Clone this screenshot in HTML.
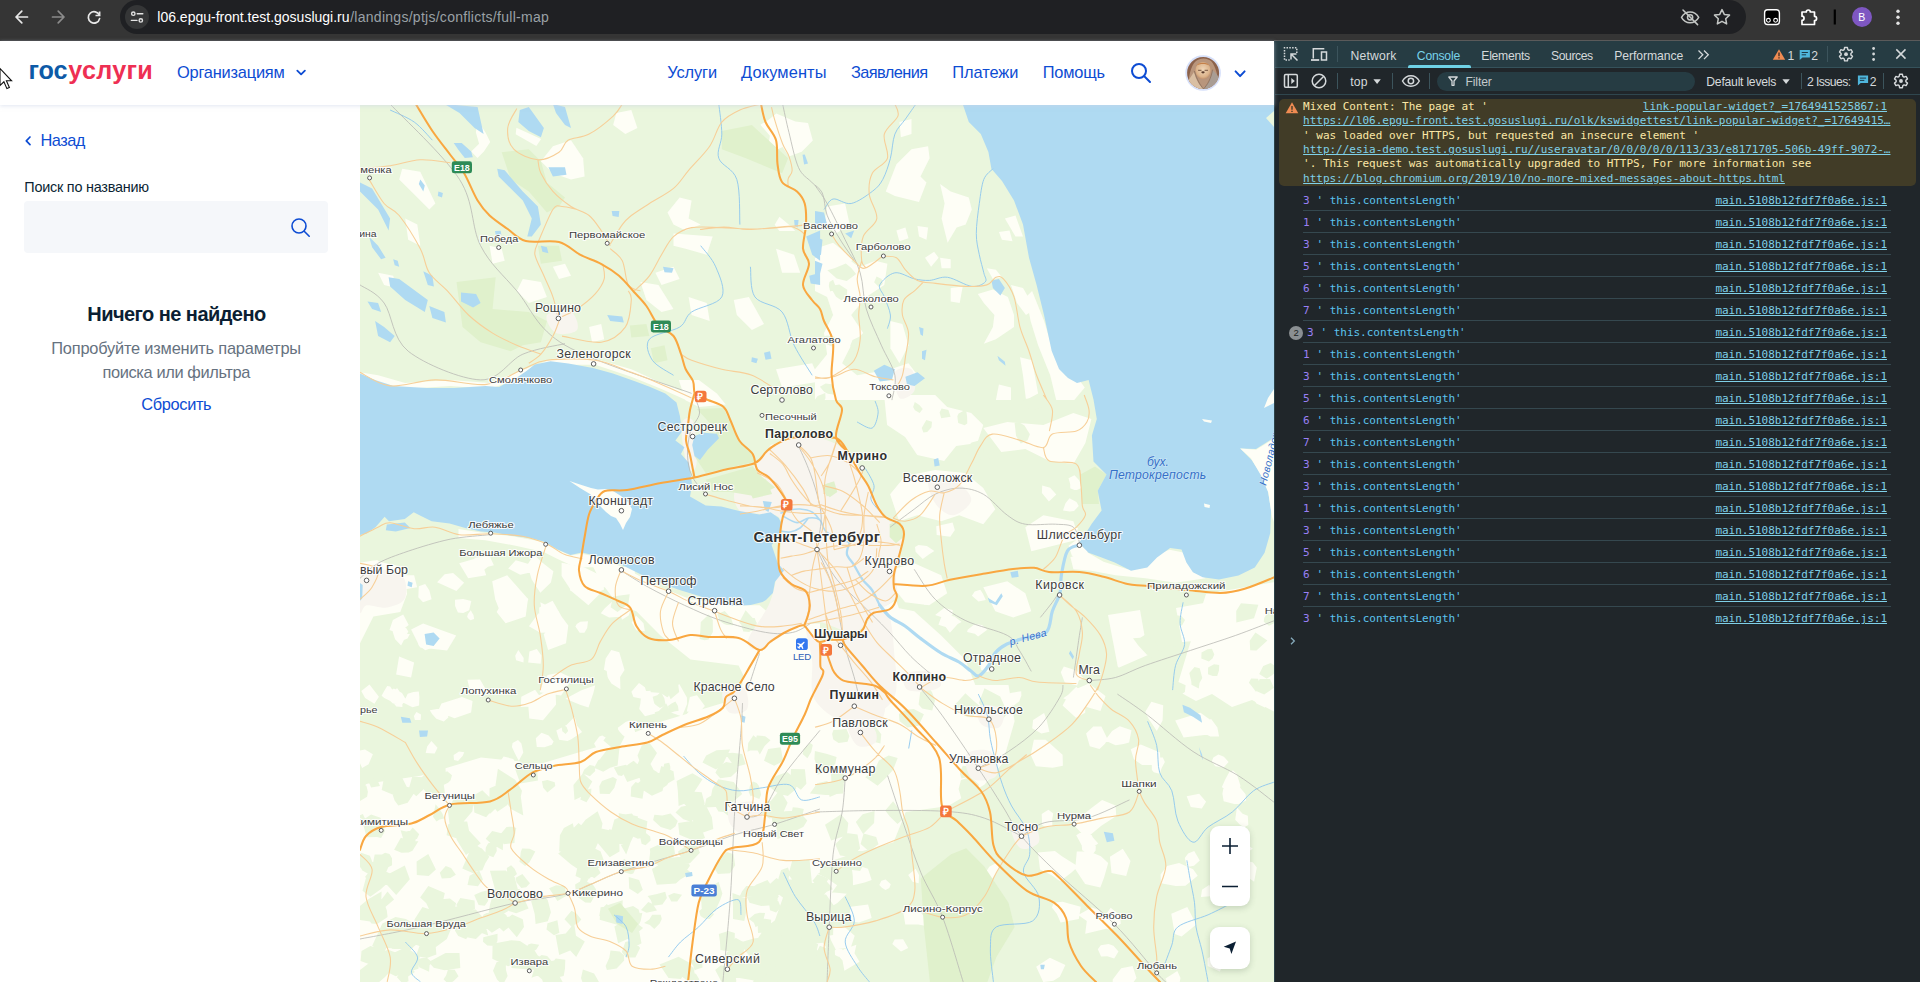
<!DOCTYPE html>
<html lang="ru"><head><meta charset="utf-8"><title>Госуслуги</title>
<style>
html,body{margin:0;padding:0;background:#fff;overflow:hidden}
body{width:1920px;height:982px;position:relative;font-family:"Liberation Sans",sans-serif}
.b{position:absolute;display:block}
.t{position:absolute;white-space:pre;display:block}
svg text{font-family:"Liberation Sans",sans-serif}
</style></head><body>
<svg id="map" class="b" style="left:360px;top:105px" width="914" height="877" viewBox="360 105 914 877">
<rect x="360" y="105" width="914" height="877" fill="#eaf6dd"/>
<path d="M402.2 168.8 420.3 171.8 435.4 203.5 429.3 209.5 411.3 191.4 399.2 179.4z" fill="#fefef6"/>
<path d="M552.9 146.2 571 140.2 583.1 158.3 584.6 176.4 571 179.4 552.9 173.3 540.9 161.3z" fill="#fefef6"/>
<path d="M616.3 113 631.3 110 637.4 128.1 625.3 134.1 613.2 125.1z" fill="#fefef6"/>
<path d="M667.5 212.5 679.6 197.5 691.6 200.5 688.6 218.6 700.7 224.6 685.6 230.6 673.5 224.6z" fill="#fefef6"/>
<path d="M673.5 233.6 712.7 236.6 706.7 254.7 685.6 248.7 673.5 245.7z" fill="#fefef6"/>
<path d="M655.4 272.8 673.5 266.8 679.6 278.9 661.5 284.9z" fill="#fefef6"/>
<path d="M776 248.7 794.1 254.7 800.2 272.8 782.1 272.8z" fill="#fefef6"/>
<path d="M733.8 300 748.9 296.9 764 324.1 751.9 330.1 736.8 315z" fill="#fefef6"/>
<path d="M776 369.3 812.2 363.3 820.1 381.4 782.1 387.4z" fill="#fefef6"/>
<path d="M522.8 278.9 540.9 281.9 546.9 296.9 528.8 303 516.8 290.9z" fill="#fefef6"/>
<path d="M552.9 266.8 565 263.8 571 275.8 559 278.9z" fill="#fefef6"/>
<path d="M489.6 245.7 501.7 248.7 504.7 260.8 492.6 263.8z" fill="#fefef6"/>
<path d="M589.1 327.1 601.2 324.1 604.2 339.2 592.1 342.2z" fill="#fefef6"/>
<path d="M360 372.3 378.1 375.3 405.2 382.9 450.4 379.9 489.6 382.9 528.8 367.8 552.9 358.7 595.2 358.7 631.3 369.3 661.5 382.9 691.6 394.9 691.6 402.5 661.5 388.9 631.3 376.8 595.2 364.8 552.9 364.8 528.8 375.3 489.6 388.9 450.4 385.9 405.2 388.9 360 378.3z" fill="#fefef6"/>
<path d="M378.1 272.8 393.2 275.8 396.2 287.9 384.1 284.9z" fill="#fefef6"/>
<path d="M405.2 218.6 417.3 224.6 420.3 245.7 408.2 239.7z" fill="#fefef6"/>
<path d="M640.4 281.9 658.5 284.9 673.5 309 661.5 312 646.4 300z" fill="#fefef6"/>
<path d="M688.6 296.9 706.7 303 709.7 321.1 691.6 315z" fill="#fefef6"/>
<path d="M885.8 191.4 896.4 164.3 911.5 149.2 928.1 146.2 929.6 158.3 920.5 176.4 926.5 182.4 919 202 894.9 196z" fill="#fefef6"/>
<path d="M940.1 183.9 950.7 191.4 968.8 197.5 971.8 209.5 965.7 224.6 956.7 227.6 947.6 242.7 941.6 218.6 944.6 203.5z" fill="#fefef6"/>
<path d="M896.4 230.6 905.4 227.6 908.5 238.2 899.4 241.2z" fill="#fefef6"/>
<path d="M917.5 226.1 928.1 227.6 926.5 239.7 919 236.6z" fill="#fefef6"/>
<path d="M925 257.8 934.1 251.7 938.6 257.8 931.1 266.8z" fill="#fefef6"/>
<path d="M940.1 257.8 950.7 259.3 950.7 268.3 941.6 268.3z" fill="#fefef6"/>
<path d="M998.9 232.1 1009.5 230.6 1012.5 241.2 1001.9 239.7z" fill="#fefef6"/>
<path d="M1004.9 218.6 1015.5 215.5 1023 236.6 1015.5 236.6z" fill="#fefef6"/>
<path d="M827.1 206.5 845.1 203.5 849.7 224.6 836.1 233.6 824 224.6z" fill="#fefef6"/>
<path d="M815 248.7 833.1 242.7 848.2 254.7 860.2 266.8 875.3 260.8 887.4 263.8 884.3 284.9 866.3 296.9 851.2 315 863.2 333.1 851.2 345.2 842.1 363.3 857.2 375.3 890.4 369.3 908.5 363.3 917.5 375.3 905.4 400.1 815 400.1 815 369.3 827.1 354.2 824 333.1 833.1 315 827.1 296.9 815 290.9z" fill="#fefef6"/>
<path d="M950.7 287.9 962.7 286.4 959.7 303 950.7 301.5z" fill="#fefef6"/>
<path d="M977.8 293.9 992.9 289.4 1007.9 296.9 1014 315 1014 327.1 995.9 339.2 983.8 343.7 992.9 327.1 994.4 315 983.8 303z" fill="#fefef6"/>
<path d="M1011 284.9 1023 287.9 1035.1 309 1026 315 1017 303z" fill="#fefef6"/>
<path d="M1026 296.9 1032.1 290.9 1044.1 321.1 1053.2 351.2 1065.2 375.3 1080.3 381.4 1084.8 387.4 1074.3 400.1 1056.2 400.1 1050.2 375.3 1038.1 345.2 1030.6 321.1z" fill="#fefef6"/>
<path d="M890.4 321.1 902.4 324.1 908.5 345.2 899.4 363.3 890.4 348.2z" fill="#fefef6"/>
<path d="M1020 357.2 1032.1 360.3 1038.1 393.4 1026 400.1 1023 375.3z" fill="#fefef6"/>
<path d="M899.4 122.1 911.5 119.1 911.5 134.1 900.9 137.2z" fill="#fefef6"/>
<path d="M986.8 268.3 995.9 269.8 1001.9 277.3 992.9 278.9z" fill="#fefef6"/>
<path d="M998.9 384.4 1011 387.4 1011 400.1 995.9 400.1z" fill="#fefef6"/>
<path d="M458.5 529.1 480.9 532.5 512.3 536.3 543.7 542.1 557.1 549.7 570.5 555.5 581.7 553.8 606.4 558.7 606.4 567.2 584 567.2 570.5 564.9 557.1 558.7 543.7 552 516.8 545.9 485.4 540.3 458.5 538.1z" fill="#fefef6"/>
<path d="M360 562.7 373.4 560.5 404.8 567.2 407 594.1 400.3 612 373.4 616.5 360 643.3z" fill="#fefef6"/>
<path d="M561.6 562.7 584 567.2 601.9 576.1 604.1 589.6 584 598.5 570.5 589.6 561.6 576.1z" fill="#fefef6"/>
<path d="M494.4 585.1 505.6 577.3 516.8 596.3 528 598.5 525.7 616.5 505.6 623.2 496.6 612 503.3 600.8z" fill="#fefef6"/>
<path d="M539.2 607.5 552.6 600.8 561.6 616.5 568.3 625.4 566 643.3 548.1 650.1 543.7 634.4 550.4 625.4 539.2 620.9z" fill="#fefef6"/>
<path d="M492.2 581.3 507.2 575.3 528.3 599.3 519.3 617.4 501.2 614.4 495.2 599.3z" fill="#fefef6"/>
<path d="M564.3 563.3 588.4 575.3 600.4 593.3 588.4 605.3 570.3 590.3z" fill="#fefef6"/>
<path d="M540.3 602.3 558.3 611.3 564.3 632.4 546.3 635.4z" fill="#fefef6"/>
<path d="M411.1 629.4 423.1 623.4 456.2 635.4 447.1 650.4 420.1 647.4z" fill="#fefef6"/>
<path d="M399.1 656.4 414.1 662.4 411.1 677.5 396.1 674.4z" fill="#fefef6"/>
<path d="M594.4 557.3 612.4 563.3 621.4 587.3 600.4 587.3z" fill="#fefef6"/>
<path d="M459.2 563.3 480.2 557.3 486.2 575.3 468.2 578.3z" fill="#fefef6"/>
<path d="M396.1 575.3 414.1 575.3 417.1 587.3 399.1 590.3z" fill="#fefef6"/>
<path d="M360 575.3 378 572.3 381 605.3 360 617.4z" fill="#fefef6"/>
<path d="M588.4 557.3 621.4 566.3 660.5 587.3 690.5 599.3 735.6 605.3 759.6 605.3 780.7 623.4 820 623.4 820 690.1 750.6 690.1 738.6 665.4 690.5 659.4 660.5 635.4 636.4 611.3 618.4 605.3 600.4 581.3z" fill="#fefef6"/>
<path d="M884.1 395 935.2 395 947.2 407 971.2 413 983.3 425 977.3 443.1 956.2 446.1 944.2 461.1 917.2 455.1 905.1 437.1 887.1 425z" fill="#fefef6"/>
<path d="M890.1 494.2 905.1 476.1 935.2 470.1 965.2 473.1 983.3 488.1 995.3 509.2 983.3 524.2 959.2 515.2 941.2 521.2 917.2 515.2 899.1 521.2z" fill="#fefef6"/>
<path d="M983.3 428.1 1007.3 422 1043.4 425 1073.4 413 1091.4 419 1085.4 443.1 1073.4 464.1 1049.4 461.1 1025.3 449.1 1001.3 452.1z" fill="#fefef6"/>
<path d="M893.1 569.3 914.2 563.3 941.2 575.3 947.2 593.3 929.2 605.3 905.1 602.3 893.1 587.3z" fill="#fefef6"/>
<path d="M1206 594 1275 582 1275 712 1252 700 1232 707 1212 694 1196 701 1176 690 1188 650z" fill="#fefef6"/>
<path d="M1108 615 1140 610 1148 655 1118 668z" fill="#fefef6"/>
<path d="M1176 608 1204 603 1206 640 1182 642z" fill="#fefef6"/>
<path d="M1085.4 551.2 1103.5 561.8 1127.5 569.3 1145.5 566.3 1154.5 555.8 1169.6 549.7 1184.6 552.8 1190.6 567.8 1205.6 578.3 1175.6 582.8 1145.5 578.3 1115.5 575.3 1091.4 570.8 1073.4 569.3 1070.4 557.3z" fill="#fefef6"/>
<path d="M1025.3 527.2 1043.4 515.2 1073.4 521.2 1079.4 539.2 1055.4 545.2 1031.3 551.2z" fill="#fefef6"/>
<path d="M983.3 587.3 1007.3 581.3 1025.3 593.3 1031.3 611.3 1013.3 617.4 995.3 611.3z" fill="#fefef6"/>
<path d="M884.1 605.3 914.2 611.3 941.2 635.4 965.2 659.4 977.3 690.1 905.1 690.1 875.1 653.4 869.1 623.4z" fill="#fefef6"/>
<path d="M360 784.8 420.5 775.7 481 757.6 541.4 763.6 601.9 745.5 662.4 721.3 722.9 703.1 819.9 685 819.9 872.5 783.3 896.7 753.1 981.9 360 981.9z" fill="#fefef6"/>
<path d="M815 685 1008.5 685 1014.6 721.3 1002.5 763.6 984.3 784.8 948.1 806 905.7 812 893.6 842.2 851.3 854.3 815 866.4z" fill="#fefef6"/>
<path d="M678.8 380 698.9 380 716.9 393.4 725.8 404.6 698.9 406.9 685.5 400.2z" fill="#fefef6"/>
<path d="M770.6 445 793.1 438.3 806.5 453.9 784.1 460.7 759.4 462.9z" fill="#fefef6"/>
<path d="M477.5 119.9 485.5 132.6 490.2 142.1 483.9 151.6 477.5 158 471.2 151.6 479.1 143.7 475.9 132.6z" fill="#fefef6"/>
<path d="M516.4 127.8 541.1 138.9 536.3 146.1 515.7 134.2z" fill="#fefef6"/>
<path d="M757 648 783 634 806 626 820 642 842 640 863 630 874 613 896 600 910 640 905 700 740 700 745 665z" fill="#fefef6"/>
<path d="M768.3 119.9 776.3 113.5 795.3 121.5 808 123.1 812.8 140.5 801.7 151.7 789 156.4 782.6 146.9 766.7 154.8 769.9 135.8 760.4 124.7z" fill="#fefef6"/>
<path d="M774.7 224.7 779.4 216.8 789 224.7 795.3 231.1 779.4 231.1z" fill="#fefef6"/>
<path d="M444.7 574.3 453.1 572.9 464.1 582.8 456.4 590.9 437.1 582.2zM529.4 564.2 534.5 571.6 520.2 574.7 508.2 568.6 515.8 560.3zM380.7 573.8 377.7 578.5 374.2 573.3 372.4 566.7 373.6 560.8 377.2 559.9 381.2 563.5 382.9 571.7zM627.4 565.5 630.7 564 634.9 569.9 634.7 575.8 629.4 580.6 622.1 577.6 622.4 568.1zM616.4 609.1 620.2 604.8 622.7 601.6 631.1 606.1 629.8 612.4 628.7 615.6 622 619.7 620.3 613.8zM418.3 597.2 418.8 586.2 425.2 583.9 429.4 590.6 431.6 599.3 423 602.3zM470.4 620.2 468.5 618.7 467.1 616.8 468 614 470.8 610.2 471.8 612.2 473.5 615 474.1 619zM644.9 631.3 636.3 630.2 631.7 622.6 636 615.6 643.5 623.3zM531.7 579.5 527.3 565.1 534 554.6 541.5 562.1 553.4 571.2 550.9 582.6 540.3 592.7zM575.4 626.5 576.8 624 580.3 621.7 588 621.2 587.2 628 584.4 632.7 579.7 632.7zM619.3 652.2 624.5 670.1 620.1 676.9 620.4 689.2 611.4 683.5 603.7 671 605.7 658.6 611.3 649.9zM409.9 634.1 407.5 638.4 402.6 640.4 399.3 636.7 402.4 633.7zM604.6 608.5 614.1 599.8 622.3 600 622 605.8 621.1 611.6 620.3 616.8 609.1 617.4 600.8 613.3zM380 589 375.8 592.3 370.7 589.2 372.8 582.6 379.5 580.4zM547.6 675 560.3 672.4 571.2 677.4 568.5 684.6 561.1 695.4 539.7 692.3 542.3 684.5zM398 633.2 389.5 630.1 392.9 620 403.2 614.4 408.7 625.1zM493.9 565.2 488 566.7 482.6 570.9 478.3 564.6 474.1 557.8 483.4 556.9 489.1 555.1zM523.7 657.9 523.5 662.4 516.1 660.2 515.2 655.7 518.3 650zM479.4 694.3 470.4 692.3 467.4 679.8 480 679.5 485.6 689zM360 592 364.7 589.9 371.1 592.8 368.8 596.6 366.2 598.8 359.9 597zM402.6 704.1 392.9 703.5 383.9 695 393.9 688.6 402 693 405.9 699.5zM463.1 599.1 471.3 601 469.2 610.3 463.2 613.1 457.9 612.5 455.1 606.1 455 599.7zM425.3 650.2 418.6 645.3 417.1 637.4 423 630.7 435 636.5 434.2 647.1zM401.1 645.5 395.1 639.2 392.3 630.6 400.3 618.8 408.3 631.5zM541.4 655.4 540.7 663.8 528.2 662.6 529.4 651.6 536.8 649.1zM550.5 632.6 540.3 632.8 528.9 626.2 538.5 613.3 547.2 618.6zM948.5 615.2 954.6 616.6 961.6 621.9 957.7 624.1 949.9 632.7 945.7 626.9 938.4 624.7 941.3 617zM917.6 586.4 928.5 573.7 933.6 585 933.9 599.9 924.8 605 917.1 596.2zM934.4 551.1 929.2 554.3 922.7 559.1 915.6 551.7 915 547 918.5 545.1 926.9 545.9zM1076.3 538.2 1070.5 539.4 1066.9 534 1069.8 530.6 1072.7 527.1 1078.1 527.9 1077 531.8zM1076.5 501.9 1078.7 506 1074 511.1 1069.7 511.4 1063 510.4 1065.5 503.3 1069.5 498.3zM978.5 601.4 971.9 595.8 974.7 591.4 980.3 589.7 982.8 593.5 985.8 599.9zM926.5 579.5 931.7 585.4 925.1 591.5 920.1 594.2 914 583.3 920.6 580.8zM1077.1 685.4 1064.8 682.5 1060.8 672.3 1063.8 666.4 1070.1 668.4 1076.7 670.8 1083.5 678.6 1079 680.2zM952.4 615.6 944 618.1 935.1 615.1 944.1 608.1 952.7 610zM1000.8 601.1 996.8 599.2 991.3 596.8 994 593.8 994.2 589.9 998.4 591.1 1002.9 593.6 1001.3 596.8zM1090.5 545.4 1084.5 558.4 1071.9 555.8 1068.6 545.8 1077.9 538.8 1083.3 535.6zM978.1 636.6 974.8 633.7 967.1 632 967.7 629.7 973.8 624.8 978.9 624.5 982.4 625.2 987.3 629.7zM929.1 679.7 929.4 687 924.2 688.9 918.2 685.7 917.6 680.2 919.5 675.9 924.1 676.1zM1041.9 492.9 1042.2 485.5 1050.2 487.7 1056.3 494.6 1048.9 501.5zM1082.3 487.5 1077 490 1074.4 490 1070.2 488.3 1070.2 484.1 1068.5 478.2 1074.5 475.3 1079.1 480.2zM968 516.1 966.2 508.6 975 506.6 981.1 518.2 973.7 519.1zM981.1 669.7 979.5 661.8 986.1 661.8 994.4 669.2 987.4 672.1zM936.2 526.2 952.6 522.4 954.8 530 950.3 536.8 936.7 535zM707.3 719.4 697.4 728.5 692.9 729.4 681.6 730.7 681.7 720 692.8 706.9 700.8 710.2 706.3 712.6zM381.6 695.7 383.9 691.6 387.2 685.9 390.2 686.4 393.2 691.3 392.5 695.1 390.3 701.1 384.3 698zM434.7 753.6 425.7 752.9 427.2 746.6 431.4 741 437.5 747.8zM696.9 753.4 689.2 754.8 690.1 750.2 689.3 743.1 693.9 745.5 698.5 747 699.3 751.6zM646.6 703.6 648.9 692 660.7 692.9 670.2 699.3 658.8 710.9 647.8 714.4zM606.8 738.3 608 744.8 605 750 601.3 748.5 596.4 747.9 594.1 743.4 599.3 736.6 602.3 735.5zM402.1 695 402.4 707.1 396.3 706.4 389.3 697.9 397 688zM378.9 696.7 374.4 703.8 365.1 698 361.3 691 369.5 684.4zM456.8 753.1 458.9 751.5 464.3 752.2 462.6 756.1 460.7 758.1 458.1 760.9 454 760.1 453.6 755zM669.6 694.2 673.3 689.5 679.3 683.9 686.9 697.5 687.1 704.1 682 716.5 670.9 712.5 665.2 701.5zM429.8 710.3 437 708.9 442.8 707.7 447 710.6 448.4 717.6 443.8 721.6 436.3 718.8 432.1 714.1zM419.1 705.5 412.5 707.3 403.5 702.7 407.7 693.7 413.5 692 418.8 691.5 419.4 697.1zM639 683.1 644.9 687.3 646.2 691.5 644 699.2 633.4 696.9 631.4 691.7zM629 720.8 637.3 721.1 634.4 729.3 635.4 733.1 627 737.6 618.9 733.4 617.8 727.7 625.6 721.9zM543.7 692.6 555.3 687.3 556.1 704.5 543 720.2 529.3 718.4 528 702zM518 740.1 521.4 743.5 523.3 752.4 518.8 760.8 515.7 755 511.9 747 512.6 743.1zM672.9 752.7 667 755.5 659.2 751.4 668 746.5 675.9 745.4zM520.8 706.9 521.3 696.7 535.1 689.8 540.3 697 541.5 705.7 530.3 706.4zM555.9 694.8 550.2 702 541.7 705.3 542.5 694.5 547 690.1zM650.5 690.8 652.8 705.4 655.2 713.4 645 716.3 639.2 709.1 640.3 703.8 641.6 691.5zM676.3 746.8 684.2 742.3 686.2 750.2 684.4 757.4 677.6 752.6zM556.3 730.4 566.5 725 574.7 716.7 576.9 725.5 582.1 732.1 571.3 739.2 567.5 741.1 559.1 739.8zM413.9 716.1 416.4 712.1 421 714.5 420.7 719.9 414.9 719.9zM365 749.5 372.9 754.2 368.6 764.2 362.1 768 359 761 358.3 751zM632.1 743.1 634.5 731.3 646.8 737.5 648 747.8 642.2 759.3 631.5 756.4zM698.6 713.2 686.7 711.6 689.9 697.1 697 695.3 704.9 706.1zM541.5 732.7 548.7 735.5 553.6 741.5 551.9 744.8 544.4 747.2 536.8 747 535.8 738.2zM472.6 700.9 471.1 712.4 454.6 718.2 437.7 711.7 441.5 703.5 461.9 696.9zM519.6 769.8 513.3 786.8 503 779 497.6 765.1 503.6 756.6 513.3 758.9zM565.5 698.7 580.9 690.4 595.3 685.2 593.3 693.2 588.5 707.5 580 704.7zM1030.7 754.7 1033.9 739.7 1045.7 739.7 1062.6 754.8 1062.9 765.8 1052.6 767.8 1035.8 766.3zM1044.1 713.1 1046.7 720.3 1049.4 731.8 1041.4 733.4 1032.2 728.3 1033.1 719.9zM1112.9 995.5 1112.7 979.4 1121.2 968.3 1132.6 965.9 1136.5 978.1 1125.3 993zM1231.3 802.1 1229.1 792.7 1237.1 784.1 1245.6 794.3 1246.1 800.5 1238.5 803.9zM1200.5 712.8 1211.9 721.1 1210.6 734.2 1183.6 737.6 1175.2 720.5zM1252.7 862.3 1256.8 867.6 1254.1 881.7 1242.6 873.4 1240.1 859.9zM1151.7 760.2 1156.7 757.5 1162.8 757.4 1164.9 762 1161.9 767.5 1159.6 773.8 1153.8 772.3 1151.9 770zM1156.8 730.9 1148.5 718.5 1145.3 711.8 1151.4 701.8 1163.2 705.3 1162.6 720.4zM1209.4 884.7 1211.6 893.2 1210.1 896.2 1200.9 896.9 1202 889.8zM1104 877.7 1100.3 887.4 1085.1 884 1075.2 869.1 1076.8 851.5 1089.5 851.6 1100.9 856.2 1108.2 862.9zM1171.3 913.7 1187.3 907.1 1196.3 924.4 1181.6 936.6 1174.7 934zM1130.5 861.1 1126.2 876 1111.5 873 1109.9 856.7 1122.8 848.8zM1096.3 925.8 1104.9 915.8 1110.7 907.7 1120.1 915.3 1120.8 923.7 1110.2 929.7zM1227.3 792.1 1221.9 787.1 1225.2 779.6 1230.1 770.6 1235.9 780.7 1237.6 791.2zM1059.1 862.3 1056 872.1 1047.7 869 1044.5 861.7 1052.9 858.8zM1224.8 780.4 1232.8 770.2 1236.8 774.1 1240.4 785.5 1239.1 796.5 1235.1 804.2 1223.7 801.2 1222.4 793.7zM1043.3 982.1 1036.2 966.8 1049.9 957.7 1065.4 965.1 1059.8 976.8 1053.3 980.7zM1056.9 914.1 1051.9 907.6 1053.8 902.8 1062.6 901.7 1070.5 904 1080.8 906.8 1078.8 918.9 1060.6 922.4zM1048.4 809.7 1053.3 813.6 1052.2 819.3 1052.3 825.9 1045.5 826.9 1041.7 824.7 1042 821 1041.7 813.9zM1089.8 746.3 1086.1 733.6 1093.3 726.4 1101.4 726.4 1107.6 739.3 1105 743.7 1099.5 748.9zM1119.8 726.3 1131.5 730.2 1129.1 742.6 1123.7 744 1115.6 745.2 1105 740.6 1112.1 730.9zM1060.1 881.2 1051.7 875.3 1040 869.5 1037.9 852.5 1054.9 851.1 1061.9 856.3 1078.2 866.6 1071.2 872.7zM1211.2 719 1217.4 727.5 1219.1 736.5 1210.4 736.4 1199.1 731 1205.6 721.1zM1199.2 793.8 1206.1 801.7 1201.8 808.4 1190.8 807 1186.7 796.2zM1272.2 699.4 1264.9 707.4 1256.4 703.5 1249.8 692.3 1259.6 679.5 1267.8 688.4zM1252.8 848.8 1244.4 853.9 1237.8 854 1236.8 846.7 1242.3 840.5 1246.9 844.3zM1072.4 823.4 1091.5 808 1102.1 799.9 1115.5 805.4 1116.3 816.1 1101.3 825.7 1086.3 838.3zM1207.4 958.6 1217 952.8 1223.5 964.3 1219.8 971.6 1207.7 966.1zM1092.2 884.3 1084.1 882.7 1085.4 878.3 1086.7 873.4 1091.4 874.3 1095.3 878.3 1096.7 881.8zM1101.1 956.4 1097.8 949.2 1100.8 945.2 1108.6 943.9 1113.4 945.7 1118.5 951.4 1114.2 958.6 1107.3 956.3zM1247.8 815.8 1248.3 824.9 1244.1 827.3 1239.7 824.4 1235.2 819.8 1235.9 814.8 1236.9 807.6 1242.6 813.7zM1179.1 863 1193.1 869.3 1197.7 875.7 1185.4 885.8 1175.7 885.9 1160.9 883.3 1160.6 874.4 1166.9 866zM1091.7 907.4 1098.2 909.8 1106.1 917.3 1106.8 928.5 1101 930 1085.2 933.8 1086.8 921.1 1078.2 914.9zM1095.9 843.2 1095.6 850.5 1090.3 857.4 1086.7 852.6 1082.2 850.3 1081.4 842.2 1087.4 833.8 1092.4 838.3zM1178.7 987.1 1170.5 990.5 1165.5 978.5 1177.3 971 1180.5 978.1zM1076.2 835.2 1088.1 827.8 1092.7 837.3 1098.2 843.5 1085.3 852.5 1080.2 842.6zM1021.4 695.6 1019.1 701.5 1013.1 706 1009.5 703 1005.5 696.5 1010.6 692.9 1021.2 691.2zM1187 867 1184.8 858.1 1188.1 853.4 1194.2 851 1199.8 860.5 1194 865.7zM1076 717.7 1062.6 705.5 1068.5 694.6 1076.3 686.8 1085.5 696.6 1085.2 712.7zM1223.9 756.7 1228.6 761.9 1223.7 767.6 1215.3 766.3 1211.8 761.5 1213.3 757.4 1218.4 754.5zM1077.9 704.6 1063.2 698.2 1077.3 688.5 1088.9 683.5 1105.5 695.9 1100.5 711zM1160.4 763.3 1142.1 765.1 1133.9 759.3 1130.7 749.3 1140.8 744.4 1160 752.5zM820.7 953.1 816.4 949.4 816.4 943.6 822.9 942.8 826.2 947.2zM868 868.7 871.7 880 864.6 882.4 853 885.2 852.8 875.9 851.9 869 861.1 866.4zM996.9 872.3 992.6 878.1 985.6 879.8 983.9 874.9 989.3 866.7 997.5 862.2 999 868.3zM908.2 948.1 901 951.5 892.3 943.9 894.7 939.5 903.1 939.2zM1006 909.5 998.4 921.4 986.8 919.9 986.9 911.5 989 902.6 999.2 898.9zM842.4 949.1 843.4 953.8 842 955.6 838.5 956.8 835 955 834.8 950.4 837.8 947.4zM826.9 927.3 844.4 926.8 854.7 935.8 850.8 947.4 835.6 949.3 831 940.2zM881.9 887.7 879.3 885.1 881.4 880.8 885.6 879.6 890.8 884.2 889.3 888 885.5 889.9zM947.5 984.6 941 983.4 938.1 980.8 933.4 976.3 938.8 969.9 942 968 948.9 976.7zM843.8 949.2 856.4 944.7 854.5 953.2 859.5 961.8 844.4 970.7 842.5 960.5 837.8 955zM956.2 989.4 946.9 983.1 954.2 976.4 960.8 976.7 966.8 984.5zM908.2 875.1 915.6 868.7 919 875 918.7 883.2 912.5 881.8zM837.4 903.1 828.2 908.5 819.4 904.4 823.6 893.6 834 892.5 846.8 893.7zM810 870.6 820.4 875 827.8 878.8 837.1 885.2 831.6 892.9 821.5 896 813 886.2 806.4 878.6zM871.7 918.1 858.9 922.4 848.5 921 850.7 906.8 868.1 904.6zM903.1 911.4 912.8 905.4 920.1 911.8 932.9 927.2 918.2 924.4 905.3 924.4z" fill="#fefef6"/>
<path d="M817.6 395.9 825.3 392.9 825.5 398.3 822.9 403.3 813.7 401.4zM822.5 340.9 822.7 343.4 817 344.8 815.8 342.2 811.2 339.2 814.8 336.4 820.2 336.5zM836.7 278.4 827.3 270.2 834.4 268.2 845.8 263.6 851.3 267.9 856.2 274 846.7 280.9zM854.7 255.9 860.8 258.2 864.4 262.2 859.7 265.3 855.3 264.6 851.3 261.3zM852.5 340.1 860.9 336.1 861.9 344.7 862.6 350.7 853.4 351.8 850.2 345.7zM847.3 289.7 846.8 297.2 841.3 300.3 836 296.8 829.8 286 839.3 284.4zM835.5 288.3 830.2 291.6 828.8 286.1 829.4 282.1 833.1 279.7 835.1 285zM833.3 384.4 833.3 389.3 834.9 394.8 827.8 393.8 824.1 391.8 819.9 386.7 825.6 383.5zM826.8 344.3 820.2 336.9 827.7 335.5 834.8 336.8 833.7 347.2zM881.7 278.9 882.7 283.9 878.8 287.1 874.1 282.2 876.6 276.4zM607.7 684.1 606.3 686.9 600.5 686.5 595.9 683.2 596.1 678.9 602 676.7 607.4 680.6zM756.7 622.4 756.6 631.3 744.7 628.3 739.1 622.5 745.6 610.2zM667.8 692.3 670.5 683.9 677.6 680 679.2 692.1 670.6 699.3zM712.8 619.9 712.9 632.1 708.6 639.5 704.7 640.2 699.6 638.9 700.4 629.4 700.8 622.1 708.7 614.5zM719.3 620.8 717.4 613.9 724.7 610.9 731.1 618.1 733.3 625.2 726.9 625.1 724.1 624.1zM601.9 668.7 606.7 670.9 607.9 679.3 601.6 683.9 595.2 687.3 597.1 680.3 593.9 674.3zM601.9 677.7 607 679.4 606.9 684.9 603.5 685.2 598.1 686.8 597.5 684.2 598.8 679.6zM628.3 604 625.1 606.3 617.5 612.1 610.6 607.3 613.1 596.4 621.9 595.3 629.7 594.2zM796.7 621 792.1 625.8 790.9 622.5 790.9 619.2 795 616.6 800.1 616.8zM754.7 618 756.8 624 755.5 627 749.2 632 743.3 631.6 741.2 624.7 741.8 621.6 745.2 617zM1182.2 664.2 1169.3 667.3 1160 665.5 1158.8 656.2 1164 646.8 1171.1 645.3 1178.6 647.9 1180.1 657.8zM1208.9 661.6 1201.3 658.4 1201.5 652.6 1207.6 649.2 1211.9 648.8 1214.3 654.6 1212.5 658.5zM1273.9 687.8 1264.2 694.6 1254.5 690.2 1259.7 678.9 1270 679.1zM1145.2 642 1148.3 636.9 1155 640.1 1156.9 645.5 1154.6 647.7 1153.6 651.9 1147.1 650.1 1144.2 643.4zM1133 638.2 1140.2 637.7 1145.6 634.5 1154 640.8 1159.7 647.3 1152.7 653.1 1147.2 654.9 1138.5 645.7zM1270.6 663.1 1279.2 668.4 1272.1 675.2 1266.7 678.7 1259.2 674.1 1263.2 665.9zM1255.4 632.4 1267.4 640.5 1256.5 650.5 1250.2 650.2 1249.7 640.7zM1103.5 675.8 1104.6 662.5 1117.6 666.5 1128.8 677.5 1118.5 683.7zM1275.9 612.5 1280.9 619.4 1275.6 622.5 1269 625.7 1263.7 621.8 1264.3 617.7 1269.9 608.9zM1219 670.4 1217.2 676.1 1212.7 676.1 1208 674.3 1208.1 667.6 1214.1 664.2 1219.2 664.9zM1179.9 695.6 1175.7 691 1168.2 688.2 1171.1 685.7 1174.3 680.3 1181.4 683.2 1185.6 685.3 1184.9 692zM1176 615.3 1181.4 616 1185 620.1 1182 625.4 1176.5 625.4zM1148.1 651 1154.3 652.1 1159.6 650.2 1162.1 655.2 1160.3 660.1 1153.4 661.8 1151.2 657.6zM1258.4 604.8 1254 618.3 1236.3 622.4 1236.2 611 1241 603.2zM1255.9 691.7 1251.6 685.9 1248.9 682.8 1251.1 678.6 1258 678.8 1259.8 684.1 1258.9 687.4zM1189.3 673 1194.5 667 1199.7 668.2 1202.3 678.1 1199.5 682.9 1198.8 688.5 1191.5 684.8 1191.2 680.9zM941.6 408.4 948.4 410.1 950.6 416.7 941.2 418.3 939.6 412.4zM919.4 405 922.7 408.9 919.7 413 914.9 410.3 913.1 406.9 914.8 401.9zM1024.8 398.9 1032.3 398.1 1041.5 401.9 1043.3 406.9 1034.3 410.1 1028.8 408.9 1021.4 403.9zM931.5 427.2 927.2 432 923.4 432.4 921.7 428.1 926.3 420 932 421.8zM983.3 453.3 978.5 462.3 972.7 463.3 966.3 448.3 971.6 442.4 983.7 439.3zM997.7 468.1 991 464.2 987.8 454.1 996.3 451.9 998.9 461zM1020.8 443.5 1016.1 436 1014.6 423.1 1018.7 422 1024.5 425.4 1029.9 434.2 1027.6 440.3zM964.6 425.3 958.2 422.9 957.3 416.3 958.6 413.6 961.8 411.8 966.1 409.6 967.1 416.7 967.3 423.5zM673.5 842.9 675 853.7 667 863.9 651.3 860.7 649.8 848.7 662.3 843.1zM407.1 924.7 411.7 926.1 413.2 930.2 412.4 936.4 406.2 935 402 931.3 397.7 927.6 400.9 925zM606.9 970 605.6 966 609.3 957.7 610.5 950.4 619.6 951.5 624 955.3 624.2 960.5 616.6 968.4zM631.1 924.7 625.6 914.1 624.1 908.5 633.1 906.1 638.6 909.4 639.9 914.3 640.1 921.3zM693.6 968.1 694.9 975.1 694.9 983.4 687.9 981 681.4 976.3 682.8 969.5 685 961.3zM363.3 824.8 364 819.3 371.1 814.6 380.5 817.7 385 831.1 381.1 838.1 377.1 837.1 366.6 837.3zM590.4 872.8 577.7 860.6 579.4 840.9 600.5 851.2 605.1 864zM649.3 919.4 652.2 914.7 660.7 914.7 661.8 919.1 659.7 923.6 654.3 929.1 649.9 925 644.1 923zM532.1 946.5 537.6 955.2 552.8 966.2 541.2 969.3 532 969.8 511.3 968 514.3 955.2 522.5 951.9zM645.6 845.3 641.6 843.7 640.1 836.8 643.4 831.1 650.2 836.4 650.6 840.5zM647.4 821.3 645.4 837.3 637.8 838.8 622.3 831.8 634.4 816.4zM660 772.7 671.1 779.1 666.9 785.3 662.5 788.3 656.8 791.8 648.4 784.1 649 774.3zM618.1 943.3 614.4 926.6 625.5 920.1 631.7 919.5 643.1 928 633 936.4zM486.1 817.3 474.3 812.4 474 806.9 470.7 797.3 482.3 790.2 492.7 800.2 493 808.9zM407.7 802.7 398.3 805.4 394.6 800.6 392 792.8 400.9 787.3 403.3 785.9 410.9 787.8 415.5 791.1zM624.7 858.7 630.9 867.8 632.4 873.4 625.1 872 618.7 863.1zM519 893.2 519.2 907.9 504.4 911.4 496.6 908.2 500.5 891.1 502.1 880.4 512.9 869.6 516.7 884.9zM547.5 923.3 557.4 920.2 559.4 932.8 554 935.3 546.5 929.5zM361.5 869.9 374.9 860.8 390.2 862.7 384 877.2 370.7 875.3zM592.3 781.6 584.4 795.3 574.5 800.1 573.4 784.9 583 773.3zM586.1 993 581 978 582.9 969.6 594.1 973.4 601.9 987.2zM613.8 767.6 625.9 764.7 629.9 769 621.7 775.9 618 775.3zM602.6 907.9 606.8 904 612.9 910.4 614.7 912.8 617.4 918.5 606.5 918.3 599.2 916 600.2 910.2zM627.2 782 621.7 770.2 628.7 763.9 633.6 760.8 641.7 768 641.8 777.1 633.1 779.9zM550.9 912.2 547.8 921.2 535.6 923.9 534.7 913.9 531.1 901.1 537.2 898.2 544.2 896.4 547.7 899.9zM694.8 791 690.9 801.1 678.6 806 677.8 790.4 676.6 781 692.5 773.2 702.5 779.3zM684.5 856 690 865.7 680.9 878.8 669.5 880.6 657.9 871 663.4 855.1 672.3 857.8zM429.1 971.7 419.2 967.2 418.2 960.3 420.7 958.2 426.9 957.7 431.7 962 429.5 965.6zM618.8 815.3 631.9 813.6 641.3 825.4 627.1 830.3 618.2 826.3zM355.9 795 358.6 787.4 360.7 783.1 366.4 785.8 367.9 791.8 367.1 796.7 358.8 801.7zM543.2 787.8 541.9 781.2 547.4 779.9 554.7 782.2 555.3 785.9 547.4 792.4zM616.9 779.3 614.4 787.8 609.6 794.1 599.8 793.7 599.3 786.2 602 781.1 613 777zM412.1 840.8 418.4 841.2 412.5 850.7 408.7 852.6 401.5 852.8 394.1 849.7 400.8 837.8zM497.9 909.1 501.9 911.1 503.5 913 502.8 918.1 496.7 917.9 492.6 916.3 491.9 914.2 494.5 911.6zM498.3 806 490.4 813.5 479.8 808.4 475.2 794.1 491.2 798.1zM468.2 922.1 475.3 924.9 474.6 930.8 472.9 934.3 471.8 937.2 467.1 932.7 463.7 930.1 464.2 923.3zM505.8 870.5 515.6 880.6 508.8 895.1 495.7 891.7 489.9 870.7zM581.8 844.9 597.5 851.8 595.4 860.2 583.5 872.8 571.1 864.6 558.1 853.4 566.1 848.4zM690.3 805.1 693.8 817.3 691.7 821.9 683.4 819.2 675.5 812.6 681.1 806.8zM555.7 958.4 565.3 959.8 565 968.4 563.7 976 557 977.5 549.7 976.9 549.8 965.9zM646.5 912.8 641 910 648.3 902 652.7 904 657 910.5zM365.3 819.2 364.3 824.2 358.8 825.3 356.7 819.7 358.9 815.7 362.9 813.9zM564.5 919.3 566.9 916.3 571.5 910.8 576.5 913.6 581.3 919.4 578.2 923.1 571.3 926.4zM626.5 927.2 638.4 927.2 641.5 943.2 632.7 948.3 628.8 939.4zM445.8 773.6 445.8 782.2 435.7 783.3 425.6 781.6 432 765 445.2 762zM456.7 839.8 453.9 824.1 468 829.5 480.8 843.3 466 854.9zM588.5 874.3 590.1 866.6 595.7 863.7 600.6 872.9 594.3 878.2zM691.6 963.9 680.9 979 668.5 978.1 659.5 964.6 678.6 956.7zM467.5 885 469.6 875.8 479.3 870.4 482.9 879.5 477.9 886.2zM625 927.4 627.2 917.5 631.7 913.8 642.3 913 640.7 921.1 635.8 930.9zM651.9 869.1 665.7 860.9 676.8 860.2 691.2 873.1 680.3 879.6 675.9 883.6 656.8 884.8zM450.6 780.2 448.1 782.8 443.5 785.1 440.7 781.2 442.1 773.8 447.2 771.3 452 775.3zM377.4 948.5 384.4 955.8 387.1 966.3 378.3 968.8 367.5 958.3 367.3 951.1zM599.7 919.7 600.5 907.4 622.7 900.3 622.4 911.7 619.8 925.6zM673.5 771.2 674.6 779.4 663.7 785.8 658.8 775.6 661.2 765.9zM619.5 851.6 609.7 857.3 596.5 841.6 601.5 828.4 619.1 832.5zM504.9 917.2 514.2 915.8 514.4 922.7 503.5 931.5 498.2 926.4zM392 858.2 392.1 865.3 385.8 868.5 379.8 860.7 375.8 857.9 385.1 852.8 389.5 853.9zM395 876.3 381.3 888.7 370.6 885 365.1 876.8 374.3 865.5 383.2 869.9zM483.4 918 488.3 935.6 474.3 930.2 463.7 926.3 461.1 913.2 475.8 909.6zM522.8 758.2 536 755.7 538 780.5 520.3 783.5 515.1 768.9zM502 840.3 500.1 834.7 506.5 826.9 513.1 826.7 516.3 828.1 514.8 835.3 514.5 843 503.6 844.3zM485.3 863.2 482.4 870.3 476.7 871.2 469.7 863.7 474.9 856.4 477.3 848 481.7 848.3 489.3 856.8zM503.2 839.9 502.8 850.2 491 843.6 485.7 838.8 492.2 831 502.3 833.4zM541.6 955 547.2 955.9 552.6 962.3 544.7 970.7 539.1 975 531.5 977.7 534.4 968.6 531.9 962.1zM414.9 842.5 410.1 845 405 844.6 402.7 837.2 400.6 830.3 406.2 831.4 413.2 829.9 417.1 834.4zM368.5 781.5 370.9 776.6 377.6 780.4 380 786 371.1 787.5zM512 878.6 507.5 875.7 506.8 868 511.1 865.3 514.6 868.7 517 874zM579.2 884.3 582.1 874 589.8 868 588.5 878.9 584 887.7zM592.8 884.3 596.1 889.5 594.4 896.3 590.8 902.7 585.3 902.6 576.2 896.1 575.1 884.5 582.6 880zM536.7 974.8 539.7 963.4 556.5 959.9 560 972.8 546.4 983.3zM647.6 895.9 657.1 894 665.2 891.7 666.9 898.1 662.4 904.4 652.9 905.7 650.8 900.1zM588.8 831.7 600.3 837.8 595.3 848.8 583.5 851.4 568.6 842.7 562.6 837.5 568.1 833.6 578.5 823.1zM442.4 904 429.9 906.6 420.1 897.6 428.3 885.9 444.8 893.1zM631 815.9 638.6 819.3 631.2 831.8 624.4 835.1 620.4 825.5 618.6 813zM527 879.7 530 883.2 526.2 887.2 521.3 888.1 516.4 882.3 515.7 877.8 522.4 873.9zM686.4 797.3 691.2 791.4 701.7 792.3 704.7 803.5 701.9 811.1 689.7 809.9 682.4 801.8zM481 892 489.7 889.8 488.1 901.1 484.8 905.8 478.6 904.9 474.2 895.1zM448.9 984.4 443.5 979.3 446.1 975.5 448 969.6 454.7 969.7 458.5 976.2 453.7 980.9zM694.8 839.5 699.9 852.8 690 863.3 683.9 863.5 677.9 851.7zM488.2 843.3 496.1 841.3 496.8 851.1 493.4 857.3 485.3 854.3 485.8 847.5zM374.7 854.6 382.9 854.6 384.7 862.3 379.2 868.5 373.3 861.6zM677.2 901.4 671.3 901.4 668.1 895.4 674 893.1 682 894.8zM396.2 895 384.3 882.1 388.1 874.3 404.8 865.4 409.8 879.2zM433 816.8 433.9 812.4 435.6 804.3 439.5 809.1 442.4 813.6 444.3 818.6 439.5 819.6 436.5 821.6zM702.3 964.1 702.5 967.5 696.6 969.4 694.5 970.5 693.2 965.4 689.7 961.4 696.6 957.5 699.6 962zM631.9 814.9 638.1 816.6 637.4 819.6 637.5 828.7 631 826 624.4 823.1 626.3 819.3zM589.8 764.9 594.3 766 595.3 770.9 589.9 776.3 586 774.8 582.3 773.7 584.3 769.4zM556 970.1 562.8 982.3 552.8 994.2 544.3 986.4 540.4 974.1 546.9 970.3zM508.1 928.3 499.7 927.8 491.9 932.7 480.5 923.2 483.6 914.6 491.8 910.7 499 908.1 506.8 915.7zM493.4 904.9 495.3 887.3 504.7 886.5 519.8 889.2 528.6 908.5 516.2 913.2 506.6 910.3zM686.6 807.2 688.4 803.8 694.6 803.7 695.6 809.7 695.9 813.5 687.7 814.8 685.7 808.9zM427.9 927.9 437.4 938.7 424.5 948 410.3 942.5 417.5 924.7zM566.1 896 557.4 900.9 549.1 888.2 556.2 885.2 565.1 886.2zM586 853.9 590.6 859.8 584.5 864.4 580.1 865.5 572.1 860 578.3 852zM487.3 945.4 483 941.7 483.3 937.2 491.4 935.2 497.6 933.7 497.4 941 495.2 946.1zM400.9 882 400.9 888.8 395 886.9 387.5 882.9 384.7 879.1 390.6 875.4 397.2 874.3zM487.1 856.4 481.6 866.3 474.3 873.7 462.3 868.6 468.7 853.6 470.8 842.1 481.2 848.3zM370.2 896.7 362.5 890.8 366.2 877.1 376.1 874.2 385.9 880.8 381.1 889zM454.3 797.4 473.8 798.8 472.4 811.2 462.6 822.7 449.8 826.3 447.9 810.8zM414.2 938 415.4 945.4 410.5 948.5 407.5 941.3 408.5 937.4zM382.4 898.2 387.5 891.5 394.1 899.5 386.8 905.7 383.1 909 375.2 906.6zM578.8 860.8 589.6 865.8 598.4 869.2 589.2 878.7 582.8 879.2 575.5 875.9zM633.3 873.6 630.9 874.2 623.6 872 621.8 867.2 620.2 861.4 627.5 860.7 632.6 865.2 635.2 869.4zM635.6 781.9 644.6 785.8 642.5 798.8 630.7 796.4 631.2 787zM632.5 826.8 635.8 831.3 630.6 842.3 626.2 854.5 618 840 611 831.9 614.4 819.6 624.7 815.4zM536.5 949.2 529.2 955 525.3 950 528.2 944.5 531.2 943.5 539.2 944.7zM416.9 839 407.9 840.2 408.4 833.1 412.7 827.5 419.2 834.3zM661 852.2 667.8 859 661.9 867.1 649.2 860.6 650.3 850.9zM584.8 941.5 576.2 957 570.2 950.4 559.2 955 555.5 935.1 565.7 933.5 574.2 923.3 576 935.7zM441.8 878.6 439.8 872.8 445.7 866 451.1 867.9 455.9 874.7 450.3 878zM572.9 836.1 585.5 819.7 597.6 811.2 602.5 823.5 599.9 838.1 586.2 841.5 577.7 843.8zM515.2 779.7 522 790.8 520.8 796.6 523.3 815.6 511.1 808.9 499.9 794.4 495.4 786 497.9 768.8zM677.8 821 675.4 826.4 670.5 829.9 660.7 826.9 653.1 819.9 654.4 814.7 662.3 815.6 670.5 813.6zM639.1 880.1 642.8 889.8 637.8 893.9 629.2 888.6 628.7 877.1zM387.7 771.4 400.1 773.4 406.6 786.5 404.6 793.6 393.7 794.9 381.7 789.9 383.9 778.2zM445.6 953.1 459.5 953 460.3 968 444.5 970.2 433.8 967.7 428.6 962zM416.6 861.5 428.3 853.9 435.9 869.5 428.7 876.1 416.8 874.9zM705.1 838 695.8 841.4 688.4 838.5 679.4 834.8 678.1 823 688.1 821.6 695.9 820.8 700.3 825.4zM625.3 941.9 633.7 940.1 640.1 947.9 635.4 957.5 626.2 957.5 621.8 952zM374.5 867.2 362 869.4 355.8 862.1 361.1 852.7 369.9 855.7zM442.5 774.8 444.9 793 427.4 793.9 417.9 781.8 426.1 772.5zM422.7 928.9 414.4 923.5 414.6 919.2 422.5 907 434.1 910.7 439.8 921.2 433.1 926.8zM620.3 833.3 625 836 626.8 846 615.1 842.6 609.9 836 609.2 829.1zM425.7 777.6 425.9 786.9 416.3 796.3 408.7 789.2 412.3 776.6zM367.4 783.3 358.1 791 348.2 783.6 352.8 772.8 360.7 771.9 366.3 769.4 370.4 774.9 372.6 780.9zM519.5 861.8 520.9 851.6 522.2 848.4 529.6 848.8 535.3 851.4 531.7 858.2 529.5 862.3 525.2 866.1zM569.4 854.5 559.2 851.2 559.9 835.3 563.9 828 572.8 823.3 575.6 836.1 582.4 840.2 578 851.3zM376.9 922.4 359.1 919.9 351.7 912.8 367.8 899.6 381.6 891.4 381 908zM508 966.3 492.3 958.7 492.6 943.7 511.5 940.2 520 940.9 529.1 946.9 525.1 960.7zM394.6 937.2 397 928.2 409.3 928.4 415 940.8 405.2 948.2 391.8 949.1zM699.4 979.6 695.4 981.9 690.1 980.8 685.1 974.5 689.5 970.8 696.1 974.1zM629.8 939.2 620.6 937.5 616.9 931.8 622.4 922.2 636.4 925.4zM489.6 788.2 500.9 783.4 507.4 804.9 497.4 811.8 489.3 801.2zM446.6 835.3 447.9 824.6 457.5 821.3 467.2 821.5 470 835.3 460.6 839.6zM783.8 883.3 792.1 888.7 801.6 895.6 797.1 912.4 790.1 913.1 783.1 903.6zM748.6 965.9 748.4 955.5 762.2 949.6 769.6 949.9 776.6 961.9 766.6 966.6 757.6 978.7 750.1 974.2zM718.6 881.8 722.4 893.4 720.2 899.9 715.2 911.3 702 912.1 701 898.3 705.8 890.5zM823.6 892.9 818.3 895.7 811 890.4 814.4 885.6 818.1 881.1 825.3 879.9 830.6 885.7 832.8 889.3zM720 792.2 728.2 793.7 730.6 797 725.5 804.6 716.4 802.7 716.4 797.8zM730.7 803.7 709.6 804.6 710.7 798.1 712.4 789.1 718.3 779.3 733.7 782.1 738.7 788.6 742.2 793.9zM752.4 890.7 758 889.1 765.4 892.4 766.8 898.3 764 903.4 757 904.6 749 902.2 750 896.1zM812.7 891.4 801.7 891.9 796.2 885.3 788.5 874.5 792.1 861.1 800 860.7 809.6 859.7 811.8 881.8zM705.4 804.4 711.9 817.3 713.3 829.1 698.8 834.1 691.3 816.6 694.1 805.4zM781.4 804 784.5 815.3 769.2 818.4 757.3 810.5 768.1 800.4zM781 820.9 790.6 822.9 794.7 827.7 789.4 836.1 783.9 836.7 777.4 838.9 776.7 829.5 775.5 820.7zM710.4 907.5 713.9 914.6 709.7 919 704.3 918.5 700.5 916 699.2 911.2 702.5 908 707.1 903.7zM729.7 800.3 724.6 805.7 715.1 806.9 704.3 807.4 706.3 798.6 713.2 794.4 719.3 793.3 722.3 795.7zM765.3 901.5 767.8 892.9 776.7 893.1 777.8 899.6 773.6 904.4zM811.6 897.8 825.1 902 821.5 915.2 805.1 911.7 794.5 905zM734.6 767.3 730.6 761.2 725.1 753.6 732.4 752.7 742.2 753.9 745.7 764.2zM803.9 924.8 802.1 918.3 808.4 914.5 813.1 915.2 814.8 922.7 809.2 926.3zM764.5 984 760.7 979.7 768.5 972.3 771.4 978.1 770.7 984.5zM767.1 785.2 773.7 777.9 776 776 787.2 771.9 796.6 780.1 796.1 789 787.8 796 778.3 793.6zM758 933 757.6 923.5 761.5 918.1 771.2 919.8 770.7 927 765.8 932.5zM716.5 750.2 730.1 749.5 723.5 763.1 716 769.6 702.5 762.5 706.2 755.5zM813.8 961.9 797.2 959.2 790.1 951.2 800.7 938.4 818.2 944.2zM806.4 783.8 800.9 789.7 790.5 782.3 791 769.1 804.9 769.3zM739.5 977.9 724.4 977.7 727.8 966.1 730.7 955.4 749.4 961.6 757.8 970.2 755.5 980.7zM765.1 912.9 763.5 919.6 761.4 923.5 755.6 927.2 753.9 922.8 748.9 919.1 754.7 914.1 759.8 912.8zM734.2 967.6 736.3 980.8 733.8 995.6 722.2 983.2 715.2 970 720.8 965.2zM720.4 950 720 941.9 718.8 934.1 728.2 931 734.8 932.9 734.7 943.2 733.4 951.9zM726.9 851.9 733.5 854.3 735.2 865.3 730.1 873.3 717.9 874.1 713.7 867.2 717.7 860.3zM770.9 817.2 770.8 801 779.8 789.8 787.6 802.8 783 813.2zM727 802.3 727.7 806.6 728.2 815.8 723.4 812 718.4 811.6 713.3 802.5 719.3 797.7 721.8 794.3zM778.5 878.2 781.1 870 788 867.4 789.9 873.5 786.9 884.1 779.1 883.3zM757.7 938.6 765 927.8 776.8 919.1 781.9 936.6 769.7 940.1zM803.8 809.1 802.6 814.8 799.9 820.5 793.5 817.6 791.4 813.6 792.8 807.2 798 807.8zM743.4 954.3 738.8 964.7 730.7 964.7 723.1 959.7 726.5 953.4 735.6 937.8 745 943zM812.8 744.9 811.2 751.9 807.4 758.2 802.6 753.9 803.6 749.1 809.9 742.7zM772.9 825.4 771.5 816.4 784.9 811.3 798 810.4 807.3 820.6 803.5 826.7 797.2 829.9 779.8 828.1zM764 760.8 768.2 749 780.7 747.2 783.2 761.2 774.2 765.7zM771.4 954.7 754.2 962 739.2 942.8 753.6 938.5 765.9 936.9 780.4 944.8zM746.8 897.9 746.2 912 744.3 921.1 733 919.1 733 907.4 732.4 893.1 742.2 896.5zM741.9 891.5 746.3 886 753.2 885.9 754.7 888.9 753.6 896.9 746.6 896.8 738.9 898.6zM751.8 795.3 752.2 791.8 757.4 788.6 760.1 789.8 761.1 794.8 759.3 799.1 754.3 797.1zM566.5 726.8 568.2 731.1 565.6 734 562.3 731.3 561.2 723.8zM664.9 780.8 662.5 791.1 651.9 795.8 642.5 789.7 637.8 769.9 642.7 763.3 657.1 772.1zM641.6 779.9 647.3 781.7 643.8 787.5 642.1 791.6 637.9 787.2 637.9 783.2zM600.4 758.5 607.5 749.3 620 743.1 617.6 765.4 607.8 768.5 598.9 769.9zM670.3 768.9 670 773.1 666.4 772.1 662.8 769.5 663.6 766.8 664.2 763.7 669.2 762.7 670.3 766.5zM603.2 771.7 594.1 767.7 598.2 760.3 607 755.6 609.9 759.2 612.3 766.5zM748.7 791.9 750 785.3 753 781.5 756.7 783.1 759 785.9 759.6 790.7 755.7 792.6 750.7 796.5zM654.9 704.3 656.4 697.5 661.9 697.6 664.1 706.1 660 708.1zM736.6 763.9 737.9 770.4 731.1 776.7 720.3 778.2 715.4 772.7 718.7 766.3 726.1 762zM617.2 728.9 624.4 736.9 619 747.7 612.8 748.5 603.4 740.4 607.7 735zM587.4 721.6 590.7 710.1 601.4 705.2 612.4 709.5 624.3 717.5 616.8 724 608.7 729.4 599.2 724.6zM678.6 710.8 674.2 711.4 669.2 713.5 668 706.1 671.5 703.5 675.4 701.5 678 706zM756.8 735.5 765.2 736.2 770.5 740.3 764.6 745.9 759.8 754.6 757.6 750.6 750.4 750.4 754.5 744.4zM665.7 705.4 661.7 706.3 657.8 706.5 654.3 703.5 652.6 696.8 657.3 695.2 660.9 691.7 664.4 698.5zM583.2 790.8 591.4 788.6 591 795 586.5 802.2 580.3 799.5zM578.5 745.3 579.6 741.6 583.1 739.3 587 739.1 588.6 743.4 587.9 747.9 582.1 751.4 578.2 749.3zM606.1 720.5 602.1 725.2 599.6 722.7 594.2 719.5 593.9 715.3 599.3 711.7 604.9 713.8 607.5 718.8zM657 753.1 648.2 767.8 641.5 766.8 637.5 755.5 641.7 745.4 649.6 743.1zM647.3 758.2 652.5 767.7 655.3 773.2 650.4 779.2 645.9 780.6 640.4 774.5 636.5 766.6 639.2 760.4zM631.2 712.9 633.7 705.7 639.4 710.4 642.8 716.7 637.8 718.6zM756.7 747.6 747.5 751.8 748.2 743.1 753.4 735.3 759.3 740.4zM821.3 912.7 825.9 907 831.7 913.4 830.2 925.3 821.6 923.4 816.5 918.7zM810.6 944.3 806.4 929.7 804.2 920.6 813 917.7 821 916 833.3 925.9 833.1 935 820.1 937zM794 961.4 785.3 969.6 778.3 982.6 772.3 973.1 777.2 961.4 782.6 954.5zM776.1 912.5 770 910.2 768.7 900.1 778 900.5 780.9 907.5zM803.8 879.2 819.9 886.2 826.1 904 809 899.7 794.4 903 788.5 894.3 781.3 879.2 798.4 879.6zM788.7 877 789.1 885.7 791.7 892.3 785.5 899.5 778.6 894.3 776.6 891.2 777.5 882.6zM828.6 879 822.3 887.9 817.6 884.8 812.4 881 817.5 874.6 822 875.8zM800.8 884.2 805.5 881.2 809 883.6 813.9 891 811.9 897.8 804.8 894.4 797.1 889zM771.9 905.2 761.2 906.1 749.5 902.8 744.9 892.6 756.5 884.4 767.5 880 778.9 896.4zM776.5 878 784.1 883.5 782.3 893.1 772.8 898.3 768.3 885.4zM823.4 927.5 815.3 927.7 808.1 914.2 809.8 908.8 814.8 894.1 826.1 894.5 834.6 906.8 827.4 912.9zM815.9 943 810.3 952.3 800.5 942.7 802.7 930.7 819.5 934.2zM822.8 887.1 827.4 890.9 818.5 900.3 812.5 895 809 891.7 809.1 886.6 813.7 882.7 821.8 878.5zM820.2 965.7 815.4 959 817.3 950.7 819.9 945.8 827.4 948.8 829.9 953.9 828.5 963.7 826.9 968.9zM460.3 897.9 474.6 900.6 475 909.3 462.8 913.7 456.3 904.9zM395.6 952.4 399.9 956.1 393.3 965.1 387.5 963.4 384.3 958.9 382.5 953.3 387.6 949.6zM377.2 924 371.4 923.4 361.7 909.5 372.8 902.6 382.8 899.7 386.8 910.3 387.6 917.1zM360.6 961 361.5 951 370.4 946.1 387.6 951.6 374.2 966zM408.5 981.2 402.8 983.7 396.7 977 401.3 973.3 406.3 968.7 408 975.5zM359.5 970.4 367.9 964 378.5 961.9 391.8 969.8 385.3 976.8 378.6 982.5 358.5 983.6 355.9 974.6zM490 904.4 493.6 892.3 505.5 898.9 507.9 911.2 499.9 915.8 488.3 915.1zM400.7 948.1 390.4 942.2 401.3 932.4 412.7 936.8 414.6 945.8 410.4 950.6zM491.1 925.5 484.1 931 475.9 939 462.8 936.6 464.7 923.7 469.9 920.6 481.4 919zM461.4 919.5 467.3 920.3 472.2 926.9 466.2 939.3 458.2 935.9 455 930.7 455.6 919.5zM419.7 956.7 418.4 968.8 404.9 973.1 395.7 976.3 387 972.1 384.6 958.9 390.4 954.5 406 947.1zM372.1 945.9 382.3 923.6 395.5 917.1 405.8 919.1 414.6 923.8 422.2 931.5 402.1 949.1 387.9 947.9zM405.6 978.3 398.1 970.6 396.7 964.8 404.4 960.3 409.2 965.5 414.8 972.1zM436.3 899.7 450 898.5 456.1 903.2 452.2 917.1 442.3 923.4 435 920.6 429.8 910.7 424.4 899.2zM434.6 948 423.6 943.6 430 917.6 443.5 911 451.4 927.9 446.8 939zM447.6 930.4 445.1 918.6 445.5 907.7 459.1 906.2 464.9 915.5 459.2 924.3zM391.7 933.9 393.3 941.5 386.7 946.9 385.3 950.6 376.3 954 371.1 949 378.1 941.5 385.2 933.9zM421.2 941.1 434.8 935.4 436.4 954.4 426.8 957.9 416 956zM507.6 975.9 502.7 985.2 497 979.5 493 970.7 495.1 965.7 498.8 957.1 505.6 959.5 506 969.9zM516.8 937.2 508.6 927.8 504.6 920.2 512.2 914.5 522.8 919.3 524 927zM839 768.5 847.4 778.6 840.9 786.9 831.6 784.5 831 773.9zM1004 809 1016.9 818.7 1016.5 831.8 1002.8 827.6 992.1 810.1zM886.7 845.1 889.5 849.6 889.2 854.1 885.7 856.8 881.6 853.2 882.8 846.1zM840.1 855.5 835.2 844.2 846.6 833.1 857.5 834.4 860.1 848.6 852.1 857.1zM897.5 824 889.8 816.6 885.2 810.4 893.1 801.3 900.2 810.6 902.7 819.5zM923.9 714.3 918.6 725.8 907.5 727.4 899.5 720.9 898.9 714.1 905.7 709.7 913.8 709.1zM846.5 729.1 849.4 736 847.6 741.8 838.6 743.1 833.3 739.6 832.1 733.9 833.4 730 838.8 729.7zM988.5 827.6 982.4 842.3 975.3 840.5 966.9 831.2 977.3 819.5zM974.2 845.3 970.1 842.2 966.4 840.4 965.4 834.8 968.6 829.3 971.9 829 976.9 833.5 979.7 838.6zM969.6 796.4 961.7 799.6 958.6 789.1 961 779.9 970.9 777 978.9 784.6 977.1 797.5zM932.2 710.5 922.1 708.6 918.6 704.5 920.2 692.2 928.3 687.1 932.1 692.3 935 700.5zM973.8 700.9 980.4 706.5 972.9 717.2 967.2 717.1 959.4 712.6 953.4 705.8 957.7 701.7 965.4 693.2zM860.1 871.1 852.4 869.9 843.2 860.7 847.9 852.9 855.6 850 861.8 851.2 867.6 853.5 866.3 859.9zM846.8 835.3 831.2 840.5 825 824.8 841 814.3 848.3 823zM927.4 854.7 932.8 848.4 939.2 844.3 941.6 849 943.3 858.9 941.7 864.2 932.4 863.7 932.6 859.7zM814.9 751 827.2 754 836.6 757.1 835.2 764 826.2 772 817.5 774.7 817.1 767.3 814.4 758.9zM875.7 768.1 878.9 760.4 888.7 755.6 897.7 758 893 770.1 884.8 778.9 877.6 785.8 865.3 777.2zM867.7 736.6 866.8 724.9 874.6 725.3 881.3 734.2 880.4 743.6 870.1 740.8zM856.5 702.1 858.9 696.7 868.5 697.5 871.8 707.2 862.3 709.2zM876.2 837.1 878.5 844.2 868.9 851.2 860.6 843.9 863.6 833.6zM862.7 814.2 874.6 810.9 874.1 823.1 863.1 833.9 855.8 822zM960.1 771.9 962.7 765.8 967.3 766.3 969.7 770.1 971.1 777 966.9 777.3 961.5 778.4 960.2 774.8zM843.9 784.7 843.1 793.4 836.6 794.1 829.7 797 826.8 785.9 832 780.4 843.1 777zM1007.7 713.3 998.1 724.6 978.8 702.9 984.5 688.2 1000.2 696.6zM921.5 830.3 914.9 833.8 914.6 829.9 909.1 827.6 912 821.6 919.3 821.9 922.9 822.6 922.6 826.6zM817.2 783.2 826.9 780.9 840.1 791.9 825.5 795.1 809.9 793.4z" fill="#eaf6dd"/>
<path d="M757 463C763.7 455.5 765.7 449.3 775 445C784.3 440.7 800.8 435.8 813 437C825.2 438.2 838.8 444 848 452C857.2 460 861.8 474.2 868 485C874.2 495.8 879.2 508.8 885 517C890.8 525.2 901.2 524.5 903 534C904.8 543.5 897.2 563.5 896 574C894.8 584.5 899.7 590.3 896 597C892.3 603.7 881 608.2 874 614C867 619.8 863 630.7 854 632C845 633.3 828 623.3 820 622C812 620.7 812.2 622 806 624C799.8 626 790.7 629.7 783 634C775.3 638.3 765.8 649 760 650C754.2 651 746.3 648 748 640C749.7 632 764.8 615.3 770 602C775.2 588.7 777.2 573.7 779 560C780.8 546.3 784.2 527.7 781 520C777.8 512.3 766.8 515.5 760 514C753.2 512.5 744.2 515 740 511C735.8 507 732.2 498 735 490C737.8 482 750.3 470.5 757 463z" fill="#f8f5ef"/>
<path d="M839.2 691C843.7 686.5 858.8 686 866.4 688C874 690 882.5 697.1 884.5 703.1C886.6 709.2 883.5 719.8 878.5 724.3C873.5 728.8 860.9 731.9 854.3 730.4C847.8 728.8 841.7 721.8 839.2 715.2C836.7 708.7 834.7 695.6 839.2 691z" fill="#f8f5ef"/>
<path d="M848.3 724.3C850.8 721.3 867.9 724.3 872.5 727.3C877 730.4 878 739.4 875.5 742.5C873 745.5 861.9 748.5 857.3 745.5C852.8 742.5 845.7 727.3 848.3 724.3z" fill="#f8f5ef"/>
<path d="M905.1 674.4C908.6 671.3 923.2 669.9 929.2 671.4C935.2 672.9 940.7 680.4 941.2 683.5C941.7 686.6 937.7 689 932.2 690.1C926.7 691.2 912.7 692.7 908.1 690.1C903.6 687.5 901.6 677.6 905.1 674.4z" fill="#f8f5ef"/>
<path d="M731.9 806C736.5 802.9 751.1 799.4 756.1 802.9C761.2 806.5 764.7 822.1 762.2 827.1C759.7 832.2 746.6 834.2 741 833.2C735.5 832.2 730.4 825.6 728.9 821.1C727.4 816.5 727.4 809 731.9 806z" fill="#f8f5ef"/>
<path d="M1011.6 827.1C1013.6 823.1 1028.2 821.6 1032.7 824.1C1037.3 826.6 1040.8 838.2 1038.8 842.2C1036.8 846.3 1025.2 850.8 1020.6 848.3C1016.1 845.8 1009.5 831.2 1011.6 827.1z" fill="#f8f5ef"/>
<path d="M894.9 372.3C896.9 367.5 908.2 366.3 911.5 369.3C914.7 372.3 916.5 385.6 914.5 390.4C912.5 395.2 902.7 401 899.4 397.9C896.1 394.9 892.9 377.1 894.9 372.3z" fill="#f8f5ef"/>
<path d="M929.2 479.1C932.7 475.6 949.2 478.6 956.2 482.1C963.2 485.6 971.8 494.7 971.2 500.2C970.7 505.7 959.2 514.7 953.2 515.2C947.2 515.7 939.2 509.2 935.2 503.2C931.2 497.2 925.7 482.6 929.2 479.1z" fill="#f8f5ef"/>
<path d="M546.9 315C549.4 311.5 566 309.5 571 312C576.1 314.5 579.6 326.6 577.1 330.1C574.6 333.6 561 335.6 556 333.1C550.9 330.6 544.4 318.6 546.9 315z" fill="#f8f5ef"/>
<path d="M681.5 425C682.5 417.5 691 415.5 693.5 422C696 428.6 697.5 456.6 696.5 464.1C695.5 471.6 690 473.6 687.5 467.1C685 460.6 680.5 432.6 681.5 425z" fill="#f8f5ef"/>
<path d="M722.9 691C725.4 687 740 685 744 688C748.1 691 749.6 705.2 747.1 709.2C744.5 713.2 732.9 715.2 728.9 712.2C724.9 709.2 720.3 695.1 722.9 691z" fill="#f8f5ef"/>
<path d="M966.2 754.5C969.2 750 985.3 748 990.4 751.5C995.4 755.1 999.5 771.2 996.4 775.7C993.4 780.3 977.3 782.3 972.2 778.7C967.2 775.2 963.2 759.1 966.2 754.5z" fill="#f8f5ef"/>
<path d="M978.3 706.2C981.8 703.6 999 705.7 1002.5 709.2C1006 712.7 1003 724.8 999.5 727.3C995.9 729.9 984.8 727.8 981.3 724.3C977.8 720.8 974.8 708.7 978.3 706.2z" fill="#f8f5ef"/>
<path d="M360 573.9C363.4 566.8 373.1 569.1 380.2 569.4C387.2 569.8 398.4 571.3 402.6 576.1C406.7 581 407.4 593.3 404.8 598.5C402.2 603.8 393.2 606.4 386.9 607.5C380.5 608.6 371.2 604.5 366.7 605.3C362.2 606 361.1 617.2 360 612C358.9 606.8 356.6 581 360 573.9z" fill="#f8f5ef"/>
<path d="M806 627C807.3 624 814 639.8 820 642C826 644.2 834.8 642 842 640C849.2 638 857.7 634.3 863 630C868.3 625.7 869.8 617 874 614C878.2 611 884.7 606 888 612C891.3 618 893.2 635.3 894 650C894.8 664.7 900.3 688 893 700C885.7 712 863 722 850 722C837 722 821.3 710.3 815 700C808.7 689.7 813.5 672.2 812 660C810.5 647.8 804.7 630 806 627z" fill="#f8f5ef"/>
<path d="M501.7 152.2 528.8 149.2 540.9 161.3 546.9 182.4 565 197.5 559 206.5 546.9 212.5 528.8 191.4 510.7 179.4z" fill="#e0f1cc"/>
<path d="M456.5 281.9 495.7 277.3 492.6 309 528.8 312 546.9 321.1 540.9 342.2 522.8 345.2 510.7 351.2 480.6 342.2 462.5 327.1z" fill="#e0f1cc"/>
<path d="M537.9 245.7 559 245.7 562 260.8 540.9 263.8z" fill="#e0f1cc"/>
<path d="M721.8 131.1 751.9 125.1 788.1 158.3 782.1 173.3 745.9 158.3 721.8 149.2z" fill="#e0f1cc"/>
<path d="M629.8 325.6 646.4 324.1 649.4 336.1 631.3 337.6z" fill="#e0f1cc"/>
<path d="M650.9 348.2 664.5 345.2 667.5 360.3 653.9 363.3z" fill="#e0f1cc"/>
<path d="M1080.4 474.5 1095 466.4 1106.5 474.5 1097.7 490.8 1099 503.9 1082 503.9z" fill="#e0f1cc"/>
<path d="M608 908.8 620.1 902.7 638.2 923.9 632.1 933 617 923.9z" fill="#e0f1cc"/>
<path d="M920.8 878.5 951.1 854.3 966.2 848.3 984.3 866.4 1008.5 902.7 1014.6 926.9 996.4 957.1 987.4 981.9 929.9 981.9 923.9 926.9z" fill="#e0f1cc"/>
<path d="M696.7 409.1 723.6 408 737 438.3 752.7 451.7 755 461.8 730.3 467.4 705.7 473 694.5 456.2 714.6 436 716.9 431.5 703.4 415.9z" fill="#e0f1cc"/>
<path d="M705.7 479.7 752.7 466.3 761.7 476.4 775.1 487.6 757.2 496.5 730.3 492 712.4 492z" fill="#e0f1cc"/>
<path d="M822.2 485.3 833.4 482 835.6 492 826.7 496.5z" fill="#e0f1cc"/>
<path d="M824.4 484.5 834.1 481.3 837.3 492 829.8 497.3 823.4 492z" fill="#e0f1cc"/>
<path d="M889.6 524.1 900.3 520.9 903.5 536.9 896 543.3 889.6 536.9z" fill="#e0f1cc"/>
<path d="M746.4 483.4 765.7 479.2 772.1 494.1 752.8 498.4z" fill="#e0f1cc"/>
<path d="M360 373.6 375.7 380.3 393.6 386 427 388 454 388 485.5 386 499 387 514.6 379 525.8 371.4 534.8 364.6 550.5 361.3 568.4 363.5 593 368 613 373.6 635.6 381.5 649.6 386.7 665.3 393.4 676.5 402.4 679.9 415.9 682 431.5 675.4 440.5 684.4 447.2 681 454 688.9 462.9 691 476.4 692 485.3 690 496.5 705.7 505.5 721.3 506.6 739.3 511 759.4 514.5 770.6 512.2 778.5 517.8 781.8 523.4 778.5 536.9 771.6 545 777.7 563 784 570.5 775 581.7 772.9 592.9 766 600 762.6 602 750.6 605 735 606 720 604 700 596.3 678 589.6 657.9 581.7 640 573.9 622 565 606.4 558.2 592.9 554.9 581.7 552.6 570.5 554.9 557 549.3 543.6 541.4 530.2 538 512.3 535.8 494.4 532.5 481 531.4 465.3 528 449.6 523.5 431.7 521.3 420.5 515.7 413.7 512.3 404.8 519 389 521.3 384.6 516.8 375.7 526.9 366.7 533.6 360 535z" fill="#afdaf2"/>
<path d="M962.7 104 968.8 122 980.8 134 988.4 152 991.4 168.8 1002 181 1014 200.5 1023 224.6 1029 257.8 1036.6 285 1044 315 1051.7 351 1059 369 1068 378 1077 383 1084.8 381 1088.6 380 1093.5 399.6 1096.8 419 1091.9 435.4 1093.5 461.5 1106.5 474.5 1097.7 490.8 1101.6 510.4 1091.9 523.4 1083.7 536.5 1078.8 543 1080.4 544.6 1088.6 552.7 1101.6 557.6 1114.7 562.5 1131 570.7 1147.3 567.4 1157 557.6 1170.1 547.9 1181.5 549.5 1186.4 562.5 1192.9 572.3 1202.7 577.2 1219 579.5 1238.5 575.6 1254.8 567.4 1264.6 552.7 1270.2 533.2 1271.1 510.4 1267.9 490.8 1261.3 474.5 1251.6 459.9 1240.2 448.4 1256 449 1275 437 1275 128 1266 118 1275 110 1275 104z" fill="#afdaf2"/>
<path d="M569.5 481 580 484.5 591 488 598 489.5 606 489 613 491 621 496 628 502 632 509 630 517 626 523 623 530 620 524 616 518 611 516 606 512 600 506 596 500 590 494 580 488z" fill="#fefef6"/>
<path d="M694.5 436 703.4 432.7 716.9 433.8 719 438.3 707.9 449.5 700 460 694.5 456 692.2 445zM762.8 501 771.8 502 768.4 512 765 510z" fill="#afdaf2"/>
<path d="M444.4 104 477.6 107 483.6 134.1 474.6 128.1 459.5 113zM519.8 110 528.8 107 543.9 128.1 540.9 137.2 528.8 131.1 518.3 122.1zM552.9 104 565 107 571 128.1 565 125.1 556 113zM497.2 168.8 504.7 170.3 522.8 191.4 537.9 206.5 540.9 224.6 531.8 236.6 527.3 236.6 531.8 218.6 522.8 200.5 507.7 185.4 498.7 176.4zM548.4 167.3 565 167.3 566.5 174.8 552.9 176.4zM360 182.4 372.1 188.4 390.1 218.6 388.6 230.6 378.1 209.5 360 191.4zM388.6 277.3 399.2 278.9 427.8 300 424.8 312 405.2 300 390.1 286.4zM429.3 306 444.4 312 445.9 322.6 432.4 318zM461 292.4 476.1 293.9 480.6 303 473.1 307.5 461 301.5zM367.5 301.5 378.1 303 381.1 312 372.1 309zM375.1 321.1 384.1 327.1 394.7 336.1 390.1 342.2 378.1 336.1zM420.3 179.4 424.8 185.4 423.3 191.4 418.8 183.9zM438.4 191.4 442.9 192.9 442 197.5 437.8 196zM369 236.6 378.1 245.7 385.6 257.8 381.1 259.3 372.1 247.2zM423.3 271.3 432.4 275.8 433.9 286.4 427.8 284.9zM611.7 211 619.3 211 618.7 217.1 612.6 216.1zM663 266.8 673.5 268.3 672 272.8 664.5 272.2zM607.2 315 622.3 316.5 623.8 322.6 610.2 321.1zM806.2 236.6 820.1 230.6 820.1 260.8 812.2 254.7 809.2 245.7zM809.2 275.8 820.1 272.8 820.1 284.9 810.7 283.4zM794.1 220.1 798.6 220.1 797.7 227.6 794.7 226.1zM764 352.7 770 351.2 771.5 358.7 765.5 359.7zM751.9 357.2 757.9 358.7 756.4 363.3 751.3 361.8zM540.9 245.7 546.9 247.2 548.4 253.2 542.4 251.7zM393.2 259.3 397.7 260.8 399.2 266.8 394.7 265.3zM815 211 824 212.5 827.1 224.6 815 230.6zM815 236.6 822.5 239.7 821 254.7 815 257.8zM815 260.8 822.5 263.8 819.5 275.8 815 278.9zM991.4 280.4 998.9 278.9 1004.9 287.9 1000.4 295.4 992.9 287.9zM919 327.1 923.5 328.6 922.9 336.1 920.5 334.6zM922 351.2 926.5 349.7 925 360.3 922 358.7zM997.4 355.7 1004.9 361.8 1005.5 365.7 998.9 360.3zM873.8 370.8 884.3 364.8 894.9 369.3 891.9 379.9 879.8 381.4zM905.4 376.8 917.5 372.3 925 378.3 914.5 385.9 907 384.4zM845.1 233.6 854.2 230.6 851.2 238.2zM424.6 633.9 433.6 632.4 439.6 638.4 433.6 645.9 426.1 644.4zM408.1 581.3 412.6 582.8 411.7 587.3 407.5 585.8zM933.7 459.6 938.2 458.1 939.7 465.6 934.6 466.5zM1010.3 572.3 1017.8 570.8 1018.7 576.8 1011.8 577.7zM987.8 597.8 995.3 602.3 1001.3 593.3 1002.8 596.3 996.8 605.3 989.3 602.3zM1070.4 650.4 1074 656.4 1072.8 659.4 1068.9 653.4zM400.8 716.8 409.9 718.3 411.4 722.8 402.3 722.8zM419 730.4 428 730.4 427.1 736.4 419.9 737zM685.1 873.1 692 871.9 692.6 876.1 686 877.3zM615.5 914.8 623.1 916.3 622.5 923.9 616.4 922.4zM741.6 715.2 745.5 716.8 744.6 722.8 741.9 721.9zM1103.8 831.7 1112.9 833.2 1114.4 840.7 1106.8 842.2zM1182.4 704.7 1190 707.7 1200.5 715.2 1202.1 722.8 1193 716.8 1183.9 712.2zM1199 747 1202.1 754.5 1203 760.6 1200.5 754.5zM1040.3 964.7 1044.8 964.7 1043.9 969.2 1040.9 969.2zM453.7 142.9 461.7 142.9 471.2 151.6 472.8 157.2 464.8 158 458.5 150.1zM495 231.1 500.6 230.7 501.4 235 495.8 235.8zM386.9 524.6 404.8 522.4 410.4 528 395.8 531.4 385.8 530.2zM360 582.9 362.7 585.1 362.2 598.5 360 600.8zM802.5 154.8 804.8 154.5 808 163.6 804.1 164.4z" fill="#afdaf2"/>
<path d="M1202 419 1212 420.5 1211 423 1204 421.5zM1204 503.5 1210 505 1209.5 508 1204.5 507zM1240.2 448.4 1256 449.7 1274 438.7 1274 522 1272 517 1268.3 492.5 1261 475.4 1251 458.2zM1264 408 1268 398 1274 389 1274 403 1270 405z" fill="#fefef6"/>
<path d="M1079 545C1077.1 546 1070.3 546 1067.4 551C1064.5 556 1062.6 568 1061.4 575C1060.2 582 1061.5 587 1060 593C1058.5 599 1054.7 604.5 1052.4 611C1050.1 617.5 1051 627.5 1046.4 632C1041.8 636.5 1031.6 636 1025 638C1018.4 640 1012 641.5 1007 644C1002 646.5 998 649.5 995 653C992 656.5 991.7 661.2 989 665C986.3 668.8 981.8 675 978.8 676C975.8 677 974.3 673.3 971 671C967.7 668.7 964 665 959 662C954 659 947.5 657 941 653C934.5 649 926 642.5 920 638C914 633.5 910 629.5 905 626C900 622.5 894.2 620.5 890 617C885.8 613.5 881.3 607 879.6 605" fill="none" stroke="#afdaf2" stroke-width="3.2" stroke-linecap="round" stroke-linejoin="round"/>
<path d="M879.6 605C878.3 602.5 874.8 594.2 872 590C869.2 585.8 865.6 583.8 862.6 579.6C859.6 575.4 856.6 569.3 854 565C851.4 560.7 847.6 557.7 846.9 554C846.2 550.3 849.2 544.5 849.7 542.6" fill="none" stroke="#afdaf2" stroke-width="2.300" stroke-linecap="round" stroke-linejoin="round"/>
<path d="M849.7 542.6C847.8 541.8 842 539.9 838 538C834 536.1 828.5 534 825.5 531C822.5 528 822.6 522 819.8 519.8C816.9 517.6 812.2 517.5 808.4 518C804.6 518.5 801.3 522.9 797 522.6C792.7 522.3 785.2 517.1 782.8 516M819.8 519.8C818.5 518.5 815.3 513.8 812 512C808.7 510.2 803.7 509.3 800 509C796.3 508.7 793.2 509.3 790 510C786.8 510.7 782.5 512.5 781 513M808.4 518C807 519.7 803.1 525.7 800 528C796.9 530.3 793.3 531.5 790 532C786.7 532.5 781.7 531.2 780 531" fill="none" stroke="#afdaf2" stroke-width="1.600" stroke-linecap="round" stroke-linejoin="round"/>
<path d="M718.8 104C719.3 109 721.8 125.1 721.8 134.1C721.8 143.2 716.2 150.7 718.8 158.3C721.3 165.8 733.3 168.3 736.8 179.4C740.4 190.4 739.4 217.1 739.9 224.6M700.7 245.7C703.2 249.2 712.2 258.3 715.7 266.8C719.3 275.3 725.8 289.4 721.8 296.9C717.8 304.5 698.7 307 691.6 312C684.6 317 686.6 322.6 679.6 327.1C672.5 331.6 653.9 333.6 649.4 339.2C644.9 344.7 648.4 354.2 652.4 360.3C656.5 366.3 670 372.8 673.5 375.3M750.4 266.8C751.2 271.8 749.7 289.4 754.9 296.9C760.2 304.5 775.5 304 782.1 312C788.6 320.1 789.1 334.6 794.1 345.2C799.2 355.7 809.2 370.3 812.2 375.3M390.1 110C394.2 112 407.2 117.1 414.3 122.1C421.3 127.1 429.3 137.2 432.4 140.2M916 104C914.2 106.5 909 114 905.4 119.1C901.9 124.1 897.4 127.6 894.9 134.1C892.4 140.7 892.4 150.7 890.4 158.3C888.4 165.8 885.8 173.8 882.8 179.4C879.8 184.9 877.6 187.4 872.3 191.4C867 195.4 857.7 202.2 851.2 203.5C844.6 204.7 837.6 198 833.1 199C828.6 200 825.6 207.8 824 209.5M992.9 168.8C991.4 170.6 986.1 173.6 983.8 179.4C981.6 185.1 980.6 194.4 979.3 203.5C978 212.5 976.3 225.1 976.3 233.6C976.3 242.2 978 248.2 979.3 254.7C980.6 261.3 982.8 268.3 983.8 272.8C984.8 277.3 987.3 279.6 985.3 281.9C983.3 284.1 978 287.1 971.8 286.4C965.5 285.6 954.7 278.4 947.6 277.3C940.6 276.3 935.1 280.1 929.6 280.4C924 280.6 920.3 280.1 914.5 278.9C908.7 277.6 900.7 271.8 894.9 272.8C889.1 273.8 881.6 280.9 879.8 284.9C878.1 288.9 882.6 291.9 884.3 296.9C886.1 302 889.9 309.8 890.4 315C890.9 320.3 887.9 326.3 887.4 328.6M1183.1 602.3C1182.6 605.8 1179.8 616.4 1180.1 623.4C1180.3 630.4 1185.3 637.4 1184.6 644.4C1183.8 651.4 1177.6 657.8 1175.6 665.4C1173.6 673 1173.1 686 1172.6 690.1M857.1 422C859.6 423 868.6 429.6 872.1 428.1C875.6 426.6 877.6 417.5 878.1 413C878.6 408.5 875.6 403 875.1 401M865.4 468.5C866.9 471.3 873 480.3 874 485.6C874.9 490.8 869.7 495.1 871.1 499.8C872.6 504.6 880.6 511.7 882.5 514.1M683.6 756.1C686.1 758.8 693.1 767.9 698.7 772.7C704.2 777.5 710.3 781.8 716.8 784.8C723.4 787.8 730.4 790.3 738 790.8C745.5 791.3 753.6 788.8 762.2 787.8C770.7 786.8 782.8 782.8 789.4 784.8C795.9 786.8 796.4 797.9 801.5 799.9C806.6 801.9 816.9 797.4 819.9 796.9M614 914.8C616 916.8 623.6 921.9 626.1 926.9C628.6 932 629.1 940 629.1 945.1C629.1 950.1 626.6 955.1 626.1 957.1M405.4 942C407.4 944.6 416.4 952.1 417.5 957.1C418.5 962.2 410.9 968.1 411.4 972.3C411.9 976.4 419 980.3 420.5 981.9M668.4 957.1C670.5 954.6 675.5 947.1 680.5 942C685.6 937 692.6 932.5 698.7 926.9C704.7 921.4 710.3 913.3 716.8 908.8C723.4 904.2 734 898.7 738 899.7C742 900.7 740.5 912.3 741 914.8M783.3 872.5C785.4 876.5 790.4 888.6 795.4 896.7C800.5 904.7 809.5 914.3 813.6 920.9C817.7 927.4 818.9 933.5 819.9 936M978.3 694.1C979.8 697.6 985.3 707.7 987.4 715.2C989.4 722.8 988.9 731.4 990.4 739.4C991.9 747.5 994.4 756.1 996.4 763.6C998.4 771.2 1000 777.7 1002.5 784.8C1005 791.8 1007.5 798.4 1011.6 806C1015.6 813.5 1023.6 822.1 1026.7 830.1C1029.7 838.2 1030.2 847.3 1029.7 854.3C1029.2 861.4 1022.1 865.4 1023.6 872.5C1025.2 879.5 1037.3 888.6 1038.8 896.7C1040.3 904.7 1039.8 915.8 1032.7 920.9C1025.7 925.9 1003.5 922.4 996.4 926.9C989.4 931.4 990.9 938.9 990.4 948.1C989.9 957.3 992.9 976.3 993.4 981.9M1147.6 721.3C1149.1 725.3 1154.7 736.9 1156.7 745.5C1158.7 754 1157.2 765.1 1159.7 772.7C1162.2 780.3 1168.8 782.8 1171.8 790.8C1174.8 798.9 1174.3 812.5 1177.9 821.1C1181.4 829.6 1187.9 841.2 1193 842.2C1198 843.3 1201.6 832.2 1208.1 827.1C1214.7 822.1 1224.7 818.1 1232.3 812C1239.9 806 1246.4 795.9 1253.5 790.8C1260.6 785.8 1271.4 783.3 1274.9 781.8M1232.3 902.7C1228.3 904.7 1217.2 910.8 1208.1 914.8C1199 918.8 1183.9 921.9 1177.9 926.9C1171.8 932 1174.3 938 1171.8 945.1C1169.3 952.1 1164.3 965.2 1162.7 969.2M911.8 730.4 908.7 748.5M845.2 896.7C846.8 900.7 854.3 913.3 854.3 920.9C854.3 928.4 844.7 934.5 845.2 942C845.7 949.6 853.3 959.6 857.3 966.2C861.4 972.9 867.4 979.3 869.4 981.9M1186.9 860.4C1187.4 863.4 1188.7 871.5 1190 878.5C1191.2 885.6 1193.5 894.7 1194.5 902.7C1195.5 910.8 1194.8 918.8 1196 926.9C1197.3 935 1200 941.9 1202.1 951.1C1204.1 960.3 1207.1 976.8 1208.1 981.9" fill="none" stroke="#8cc6ee" stroke-width="0.9" stroke-linejoin="round"/>
<path d="M390.1 104C401.7 116.6 444.4 155.8 459.5 179.4C474.6 203 471 227.1 480.6 245.7C490.1 264.3 502.7 274.3 516.8 290.9C530.8 307.5 535.9 328.1 565 345.2C594.1 362.3 670.5 385.4 691.6 393.4M360 284.9C364 287.9 376.1 291.9 384.1 303C392.2 314 392.2 338.4 408.2 351.2C424.3 364 461.5 379.3 480.6 379.9C499.7 380.4 508.7 360.3 522.8 354.2C536.9 348.2 558 345.4 565 343.7M815 185.4C817 188.4 822 194.4 827.1 203.5C832.1 212.5 839.6 228.1 845.1 239.7C850.7 251.2 856.7 261.3 860.2 272.8C863.7 284.4 862.7 296.9 866.3 309C869.8 321.1 876.6 334.1 881.3 345.2C886.1 356.2 893.1 366.2 894.9 375.3C896.7 384.5 892.4 395.9 891.9 400.1M360 578.3C363 575.8 370 567.8 378 563.3C386 558.8 396.1 555.3 408.1 551.2C420.1 547.2 436.6 542 450.1 539.2C463.7 536.5 482.7 535.5 489.2 534.7M621.4 570.8C625.9 573.5 637.9 581.5 648.5 587.3C659 593.1 672.5 599.8 684.5 605.3C696.5 610.8 707.1 615.9 720.6 620.4C734.1 624.9 753.6 630.4 765.6 632.4C777.7 634.4 785.2 633.9 792.7 632.4C800.2 630.9 807.7 624.9 810.7 623.4M759.6 653.4C758.6 656.4 755.6 665.3 753.6 671.4C751.6 677.6 748.6 687 747.6 690.1M693.5 395C694.5 398 700 407 699.5 413C699 419 692.5 424 690.5 431.1C688.5 438.1 687.3 447.6 687.5 455.1C687.8 462.6 689 469.6 692 476.1C695 482.6 703.3 491.2 705.6 494.2M890.1 527.2C894.1 524.2 906.6 514.7 914.2 509.2C921.7 503.7 927.7 497.7 935.2 494.2C942.7 490.7 951.2 488.1 959.2 488.1C967.2 488.1 975.3 489.7 983.3 494.2C991.3 498.7 1000.3 510.2 1007.3 515.2C1014.3 520.2 1017.3 522.7 1025.3 524.2C1033.3 525.7 1047.4 523.7 1055.4 524.2C1063.4 524.7 1069.4 524.2 1073.4 527.2C1077.4 530.2 1078.4 539.7 1079.4 542.2M914.2 569.3C917.7 574.3 926.7 590.8 935.2 599.3C943.7 607.8 953.2 614.4 965.2 620.4C977.3 626.4 998.3 630.4 1007.3 635.4C1016.3 640.4 1015.3 644.4 1019.3 650.4C1023.3 656.4 1029.3 667.9 1031.3 671.4M1089.3 680.5C1093.7 680 1106.1 680 1115.5 677.5C1124.8 674.9 1133 669.9 1145.5 665.4C1158 660.9 1175.6 655.4 1190.6 650.4C1205.6 645.4 1221.6 640.4 1235.7 635.4C1249.7 630.4 1268.5 622.9 1275 620.4M1040.4 617.4C1042.4 614.9 1049.4 606.3 1052.4 602.3C1055.4 598.3 1057.4 594.8 1058.4 593.3M1082.4 617.4C1081.9 620.4 1080.4 628.9 1079.4 635.4C1078.4 641.9 1077.4 649.4 1076.4 656.4C1075.4 663.4 1073.9 673.9 1073.4 677.5M817 549.7C818.4 552.8 822.7 561.3 825.5 568.2C828.4 575.1 831.7 582.5 834.1 591C836.4 599.6 837.9 610 839.8 619.5C841.7 629 843.1 638.5 845.5 648.1C847.8 657.6 851.6 667.9 854 676.6C856.4 685.2 858.8 696 859.7 699.9M798.4 445.7C800.1 449.5 805.3 460.4 808.4 468.5C811.5 476.5 814.8 486 817 494.1C819.1 502.2 821 509.3 821.2 516.9C821.5 524.5 818.9 535.9 818.4 539.7M818.4 549.7C821.5 554.7 830 570.8 836.9 579.6C843.8 588.4 851.2 593.9 859.7 602.4C868.3 611 879.7 621.9 888.2 630.9C896.8 640 903.4 649 911 656.6C918.6 664.2 930 673.2 933.8 676.6M360 939C370.1 937 394.6 932.9 420.5 926.9C446.3 920.9 490.5 908.6 515.1 903C539.7 897.4 550.4 898.6 568 893.3C585.7 888.1 600.8 878.7 621.3 871.6C641.8 864.4 672.2 856.6 691.1 850.4C710.1 844.3 721.1 839 735 834.7C748.8 830.3 760.1 828.7 774.3 824.4C788.4 820.1 812.3 811.5 819.9 809M742.5 703.1C742.3 707.7 742.3 713.2 741 730.4C739.8 747.5 736.7 778.2 735 806C733.2 833.7 732.4 867.3 730.4 896.7C728.4 926 724.1 967.7 722.9 981.9M819.9 730.4C813.8 737.9 793 762.1 783.3 775.7C773.7 789.3 768.2 805.1 762.2 812C756.1 818.9 749.6 816.3 747.1 817.1M917.8 685C921.8 690 931.9 701.4 942 715.2C952.1 729.1 968.2 753 978.3 768.2C988.4 783.3 995.3 794.6 1002.5 806C1009.7 817.3 1012.5 825.1 1021.5 836.2C1030.6 847.3 1041.4 857.8 1056.9 872.5C1072.4 887.1 1097.7 907.5 1114.4 924.2C1131 940.9 1148.1 963.2 1156.7 972.9C1165.3 982.5 1164.3 980.4 1165.8 981.9M815 812C825.1 811.8 853.7 810.6 875.5 810.5C897.3 810.4 927.8 810.1 945.9 811.4C964.1 812.7 971.7 813.9 984.3 818.1C996.9 822.2 1015.3 833.2 1021.5 836.2M845.2 778.1C844.7 783.8 844.2 799.3 842.2 812C840.2 824.7 835.3 835.1 833.1 854.3C831 873.5 830.2 905.9 829.2 927.2C828.2 948.5 827.4 972.8 827.1 981.9M887.6 775.7C890.1 783.3 897.1 804.9 902.7 821.1C908.2 837.2 914.2 856.5 920.8 872.5C927.5 888.5 935.6 899 942.6 917.2C949.7 935.5 959.7 971.2 963.2 981.9M1021.5 836.2C1025.4 833.9 1033.9 825.6 1044.8 822.6C1055.8 819.6 1073 821.8 1087.1 818.1C1101.3 814.3 1122.4 802.9 1129.5 799.9M1117.4 694.1C1122.4 697.6 1135 705.7 1147.6 715.2C1160.2 724.8 1177.9 741.4 1193 751.5C1208.1 761.6 1224.7 767.1 1238.3 775.7C1252 784.3 1268.8 798.4 1274.9 802.9M978.3 768.2C983.3 765.4 998.4 758.3 1008.5 751.5C1018.6 744.7 1030.2 736.4 1038.8 727.3C1047.3 718.3 1055.9 704.2 1059.9 697.1C1064 690 1062.5 687 1063 685M782.6 104C783.7 108.8 786.3 122 789 132.6C791.6 143.2 794.8 159.3 798.5 167.5C802.2 175.8 807.2 177.6 811.2 181.8C815.2 186.1 819.7 187.4 822.3 193C825 198.5 824.2 207.5 827.1 215.2C830 222.9 835.3 231.6 839.8 239C844.3 246.5 851.7 256.5 854.1 260" fill="none" stroke="#b9b9b4" stroke-width="0.8"/>
<path d="M360 168.8C365 168.3 380.1 167.3 390.1 165.8C400.2 164.3 410.2 160.3 420.3 159.8C430.3 159.3 445.4 162.3 450.4 162.8M516.8 108.5C515.3 111.8 508.2 121.3 507.7 128.1C507.2 134.9 508.7 143.9 513.8 149.2C518.8 154.5 530.3 159.3 537.9 159.8C545.4 160.3 554 155.5 559 152.2C564 149 563 143.2 568 140.2C573 137.2 581.6 138.2 589.1 134.1C596.7 130.1 607.7 121.1 613.2 116.1C618.8 111 620.8 106 622.3 104M537.9 159.8C538.4 162 538.4 168.1 540.9 173.3C543.4 178.6 547.9 185.9 552.9 191.4C558 197 565 202.5 571 206.5C577.1 210.5 584.1 211.5 589.1 215.5C594.1 219.6 597.7 225.6 601.2 230.6C604.7 235.6 608.7 243.2 610.2 245.7M610.2 244.2C612.2 240.9 618.8 229.4 622.3 224.6C625.8 219.8 626.8 219.1 631.3 215.5C635.9 212 642.4 208 649.4 203.5C656.5 199 667 193.9 673.5 188.4C680.1 182.9 682.6 177.4 688.6 170.3C694.6 163.3 704.2 154.2 709.7 146.2C715.2 138.2 716.7 128.1 721.8 122.1C726.8 116.1 733.3 113 739.9 110C746.4 107 757.4 105 761 104M610.2 248.7C612.2 250.7 619.3 254.7 622.3 260.8C625.3 266.8 625.3 279.9 628.3 284.9C631.3 289.9 638.4 289.9 640.4 290.9M634.3 290.9C636.9 288.4 644.9 281.9 649.4 275.8C653.9 269.8 657.5 261.3 661.5 254.7C665.5 248.2 668.5 241.2 673.5 236.6C678.6 232.1 683.6 229.1 691.6 227.6C699.7 226.1 711.7 227.4 721.8 227.6C731.8 227.9 739.9 229.4 751.9 229.1C764 228.9 785.1 226.9 794.1 226.1C803.2 225.3 804.2 224.8 806.2 224.6M537.9 242.7C537.4 244.7 533.9 249.2 534.9 254.7C535.9 260.3 540.9 268.8 543.9 275.8C546.9 282.9 550.7 290.4 552.9 296.9C555.2 303.5 556.7 312 557.5 315M602.7 263.8C602.9 266.3 605.5 273.8 604.2 278.9C602.9 283.9 599.7 288.9 595.2 293.9C590.6 299 582.6 305.2 577.1 309C571.5 312.8 564.5 315.3 562 316.5M360 372.3C365 374.6 377.6 384.6 390.1 385.9C402.7 387.1 419.3 380.1 435.4 379.9C451.4 379.6 472 386.1 486.6 384.4C501.2 382.6 512.7 373.3 522.8 369.3C532.8 365.3 534.9 361.8 546.9 360.3C559 358.7 581.1 358.2 595.2 360.3C609.2 362.3 620.3 368.3 631.3 372.3C642.4 376.3 651.4 380.1 661.5 384.4C671.5 388.6 686.6 395.7 691.6 397.9M559 321.1C558 323.6 556 330.6 552.9 336.1C549.9 341.7 544.9 349.7 540.9 354.2C536.9 358.7 530.8 361.8 528.8 363.3M562 336.1C568.5 337.1 590.6 343.7 601.2 342.2C611.7 340.7 620.3 334.1 625.3 327.1C630.3 320.1 630.8 306 631.3 300C631.8 293.9 628.8 292.4 628.3 290.9M369 179.4C371.6 183.4 379.1 197.5 384.1 203.5C389.1 209.5 393.2 208 399.2 215.5C405.2 223.1 415.3 239.2 420.3 248.7C425.3 258.3 424.8 265.8 429.3 272.8C433.9 279.9 440.9 283.9 447.4 290.9C454 298 461 308 468.5 315C476.1 322.1 484.6 328.1 492.6 333.1C500.7 338.1 508.7 341.7 516.8 345.2C524.8 348.7 536.9 352.7 540.9 354.2M681.1 354.2C682.8 355.2 684.8 357.7 691.6 360.3C698.4 362.8 711.7 366.8 721.8 369.3C731.8 371.8 741.9 371.3 751.9 375.3C762 379.3 777 390.4 782.1 393.4M537.9 242.7C540.4 237.2 548.9 215.5 552.9 209.5C557 203.5 558 206.5 562 206.5C566 206.5 574.6 209 577.1 209.5M894.9 104C895.4 106 899.7 111 897.9 116.1C896.1 121.1 886.1 127.1 884.3 134.1C882.6 141.2 889.4 151.7 887.4 158.3C885.3 164.8 875.3 167.3 872.3 173.3C869.3 179.4 868.5 186.9 869.3 194.4C870 202 877.8 211.5 876.8 218.6C875.8 225.6 865.7 229.6 863.2 236.6C860.7 243.7 861.2 255.5 861.7 260.8C862.2 266 865.5 267 866.3 268.3M861.7 260.8C861 263.8 857.5 272.8 857.2 278.9C857 284.9 860 290.9 860.2 296.9C860.5 303 858.7 308 858.7 315C858.7 322.1 861 331.6 860.2 339.2C859.5 346.7 857.7 354.7 854.2 360.3C850.7 365.8 843.6 369.3 839.1 372.3C834.6 375.3 831.1 377.6 827.1 378.3C823 379.1 817 377.1 815 376.8M883.4 256.2C885.6 256.5 892.7 255.5 896.4 257.8C900.1 260 901.9 266 905.4 269.8C909 273.6 912.5 278.1 917.5 280.4C922.5 282.6 927.6 282.4 935.6 283.4C943.6 284.4 957.2 286.1 965.7 286.4C974.3 286.6 981.8 286.4 986.8 284.9C991.9 283.4 993.1 278.4 995.9 277.3C998.6 276.3 1000.4 275.6 1003.4 278.9C1006.4 282.1 1011.2 288.9 1014 296.9C1016.7 305 1017.5 318 1020 327.1C1022.5 336.1 1026.3 343.2 1029 351.2C1031.8 359.3 1033.6 367.2 1036.6 375.3C1039.6 383.5 1045.4 395.9 1047.1 400.1M923.5 281.9C922 283.4 917.8 287.9 914.5 290.9C911.2 293.9 905.9 295.9 903.9 300C901.9 304 901.7 309.5 902.4 315C903.2 320.6 908 326.1 908.5 333.1C909 340.2 906.4 350.2 905.4 357.2C904.4 364.3 903.9 370.3 902.4 375.3C900.9 380.4 897.4 385.4 896.4 387.4M831.6 234.2C832.8 236.1 835.3 241.3 839.1 245.7C842.9 250.1 849.9 257 854.2 260.8C858.5 264.5 859.7 269.3 864.7 268.3C869.8 267.3 881.1 257 884.3 254.7M815 378.3C818 378.1 826.6 378.3 833.1 376.8C839.6 375.3 847.2 369.3 854.2 369.3C861.2 369.3 868.8 375.1 875.3 376.8C881.8 378.6 890.4 379.3 893.4 379.9M360 536.2C363 534.7 373 529.5 378 527.2C383 525 384 522.5 390 522.7C396.1 523 406.6 528 414.1 528.7C421.6 529.5 427.6 526.2 435.1 527.2C442.6 528.2 449.9 533.6 459.2 534.7C468.4 535.8 480.2 533.6 490.7 533.8C501.2 534.1 513 534.6 522.3 536.2C531.5 537.9 539.3 540.7 546.3 543.7C553.3 546.7 558.3 551.8 564.3 554.3C570.3 556.8 579.4 558 582.4 558.8M546.3 545.2C544.8 550.2 539.3 565.3 537.3 575.3C535.3 585.3 533.8 595.3 534.3 605.3C534.8 615.4 538.8 625.4 540.3 635.4C541.8 645.4 543.3 656.3 543.3 665.4C543.3 674.5 540.8 686 540.3 690.1M621.4 569.3C620.4 572.3 615.9 581.3 615.4 587.3C614.9 593.3 615.9 601.6 618.4 605.3C620.9 609.1 628.4 609.1 630.4 609.8M621.4 570.8C624.9 572.5 634.4 577.8 642.5 581.3C650.5 584.8 661.5 588.3 669.5 591.8C677.5 595.3 683 599.1 690.5 602.3C698 605.6 706.6 608.3 714.6 611.3C722.6 614.4 731.1 617.9 738.6 620.4C746.1 622.9 752.6 625.4 759.6 626.4C766.7 627.4 773.7 626.9 780.7 626.4C787.7 625.9 798.2 623.9 801.7 623.4M630.4 609.8C627.4 612.1 617.4 618.1 612.4 623.4C607.4 628.6 603.9 635.4 600.4 641.4C596.9 647.4 596.4 655.4 591.4 659.4C586.4 663.4 576.8 662.4 570.3 665.4C563.8 668.4 555.3 675.4 552.3 677.5M360 563.3C363 564.3 376 565.3 378 569.3C380 573.3 375 582.3 372 587.3C369 592.3 362 597.3 360 599.3M678.5 602.3C677.5 605.8 672.5 616.9 672.5 623.4C672.5 629.9 677.5 638.4 678.5 641.4M714.6 611.3C715.6 614.4 718.6 624.9 720.6 629.4C722.6 633.9 725.6 636.9 726.6 638.4M705.6 494.2C709.1 495.2 719.1 498.2 726.6 500.2C734.1 502.2 742.6 504.9 750.6 506.2C758.6 507.4 768.7 507.9 774.7 507.7C780.7 507.4 784.7 505.2 786.7 504.7M668.6 591.8C667.2 595.1 661.3 604.6 660.5 611.3C659.6 618.1 662 627.6 663.5 632.4C665 637.1 668.5 638.6 669.5 639.9M798.4 445.7C800.6 448.5 807.2 456.1 811.3 462.8C815.3 469.4 820.3 478.4 822.7 485.6C825 492.7 825.5 498.4 825.5 505.5C825.5 512.6 824.1 521.2 822.7 528.3C821.2 535.5 817.9 545 817 548.3M836.9 440C836 442.8 833.1 450.9 831.2 457.1C829.3 463.2 826.7 470.8 825.5 477C824.3 483.2 824.3 491.3 824.1 494.1M740 514.1C742.9 513.6 750 512.6 757.1 511.2C764.2 509.8 773.7 506.5 782.8 505.5C791.8 504.6 801.8 504.1 811.3 505.5C820.8 506.9 830.7 512.4 839.8 514.1C848.8 515.7 857.8 515 865.4 515.5C873 516 882.1 516.7 885.4 516.9M817 549.7C817.4 552.8 818.9 561.3 819.8 568.2C820.8 575.1 821.7 583.4 822.7 591C823.6 598.6 824.6 606.7 825.5 613.8C826.5 621 827.9 630.5 828.4 633.8M817 549.7C820.8 549 831.7 546.1 839.8 545.4C847.8 544.7 857.4 545.4 865.4 545.4C873.5 545.4 882.5 545.7 888.2 545.4C893.9 545.2 897.7 544.2 899.6 544M779.9 534C782.8 535.5 790.8 540 797 542.6C803.2 545.2 813.6 548.5 817 549.7M782.8 568.2C785.1 570.1 791.8 576.3 797 579.6C802.2 583 807.5 586.3 814.1 588.2C820.8 590.1 829.3 592 836.9 591C844.5 590.1 853.5 586.3 859.7 582.5C865.9 578.7 871.1 573.9 874 568.2C876.8 562.5 876.4 551.6 876.8 548.3M848.3 459.9C849.3 462.8 852.1 470.4 854 477C855.9 483.7 858.3 493.2 859.7 499.8C861.2 506.5 862.6 511.2 862.6 516.9C862.6 522.6 862.1 529.3 859.7 534C857.4 538.8 850.2 543.5 848.3 545.4M893.9 573.9C891.1 576.8 882.5 586.3 876.8 591C871.1 595.8 865.4 599.6 859.7 602.4C854 605.3 848.3 606.2 842.6 608.1C836.9 610 831.2 611.9 825.5 613.8C819.8 615.7 811.3 618.6 808.4 619.5M817 549.7C819.8 552.8 828.8 561.3 834.1 568.2C839.3 575.1 844 583.4 848.3 591C852.6 598.6 856.9 608.1 859.7 613.8C862.6 619.5 864.5 623.3 865.4 625.2M788.5 505.5C789.9 507.9 792.7 515 797 519.8C801.3 524.5 810.8 529 814.1 534C817.4 539 816.5 547.1 817 549.7M822.7 485.6C826 486.5 836 487.9 842.6 491.3C849.3 494.6 856.4 500.3 862.6 505.5C868.8 510.7 876.8 519.8 879.7 522.6M768.5 448.5C771.4 451.4 779.9 459 785.6 465.6C791.3 472.3 798.4 481.8 802.7 488.4C807 495.1 809.8 502.7 811.3 505.5M825.5 613.8C826.9 617.6 831.6 631.4 834.1 636.6C836.5 641.9 839.3 643.8 840.3 645.2M865.4 625.2C867.3 628.1 872.1 636.6 876.8 642.3C881.6 648.1 888.2 653.8 893.9 659.5C899.6 665.2 906.8 672 911 676.6C915.3 681.1 918.2 684.9 919.6 686.5M840.3 645.2C842.6 648.1 848.9 656.1 854 662.3C859.2 668.5 866.4 676 871.1 682.3C875.9 688.5 880.6 697 882.5 699.9M893.1 518.2C896.1 515.2 905.1 504.7 911.2 500.2C917.2 495.7 923.7 492.4 929.2 491.2C934.7 489.9 939.2 493.7 944.2 492.7C949.2 491.7 954.7 489.9 959.2 485.1C963.7 480.4 967.7 470.6 971.2 464.1C974.8 457.6 976.8 451.1 980.3 446.1C983.8 441.1 985.8 435.1 992.3 434.1C998.8 433.1 1010.8 437.8 1019.3 440.1C1027.8 442.3 1037.9 448.6 1043.4 447.6C1048.9 446.6 1046.9 436.8 1052.4 434.1C1057.9 431.3 1070.7 433.1 1076.4 431.1C1082.2 429.1 1084.8 425.5 1086.9 422C1089 418.5 1089.5 414.5 1089 410C1088.6 405.5 1085 397.5 1084.2 395M1043.4 447.6C1044.4 449.8 1043.9 458.4 1049.4 461.1C1054.9 463.9 1071.2 460.1 1076.4 464.1C1081.7 468.1 1079.9 478.1 1080.9 485.1C1081.9 492.2 1081.7 501.2 1082.4 506.2C1083.2 511.2 1086.4 511.7 1085.4 515.2C1084.4 518.7 1079.9 523.7 1076.4 527.2C1072.9 530.7 1067.9 531.2 1064.4 536.2C1060.9 541.2 1058.9 551.8 1055.4 557.3C1051.9 562.8 1045.4 567.3 1043.4 569.3M944.2 492.7C943.5 496.4 940.2 507.4 939.7 515.2C939.2 523 940.5 531.2 941.2 539.2C942 547.2 943.2 556.8 944.2 563.3C945.2 569.8 946.7 575.8 947.2 578.3M893.1 518.2C895.1 518.7 900.6 521.7 905.1 521.2C909.7 520.7 915.2 519.7 920.2 515.2C925.2 510.7 932.7 497.7 935.2 494.2M1043.4 395C1044.9 397.5 1051.4 404 1052.4 410C1053.4 416 1049.9 427.6 1049.4 431.1M1059.6 595.1C1061.4 596.8 1066.1 601.6 1070.4 605.3C1074.7 609 1080.4 612.3 1085.4 617.4C1090.4 622.4 1097 629.4 1100.5 635.4C1104 641.4 1106 647.4 1106.5 653.4C1107 659.4 1105 665.3 1103.5 671.4C1102 677.6 1098.5 687 1097.5 690.1M1059.6 595.1C1062.4 597.8 1072.6 605.1 1076.4 611.3C1080.2 617.6 1081.9 625.4 1082.4 632.4C1082.9 639.4 1080.4 646.4 1079.4 653.4C1078.4 660.4 1074.8 669.9 1076.4 674.4C1078.1 679 1087.2 679.5 1089.3 680.5M978.8 675.9C981.5 676.7 988.5 680.2 995.3 680.5C1002 680.7 1012.3 677.2 1019.3 677.5C1026.3 677.7 1027.8 681 1037.4 682C1046.9 683 1069.9 683.2 1076.4 683.5M920.2 688C923.7 686.2 933.7 678.7 941.2 677.5C948.7 676.2 959 680.5 965.2 680.5C971.5 680.5 976.5 678 978.8 677.5M565.6 689.5C566.6 692.8 569.7 701.4 571.7 709.2C573.7 717 576.5 727.3 577.7 736.4C579 745.5 578.7 756.1 579.2 763.6C579.7 771.2 579 776.7 580.7 781.8C582.5 786.8 584.8 788.8 589.8 793.9C594.9 798.9 603.9 807 611 812C618 817 625.6 821.1 632.1 824.1C638.7 827.1 644.2 828.1 650.3 830.1C656.3 832.2 661.6 832.8 668.4 836.2C675.2 839.6 687.3 848 691.1 850.4M648.2 733.4C650.5 734.9 657.5 738.9 662.4 742.5C667.3 746 672.5 750.5 677.5 754.5C682.5 758.6 686.6 762.1 692.6 766.6C698.7 771.2 708.3 777.7 713.8 781.8C719.3 785.8 723.4 786.8 725.9 790.8C728.4 794.9 725.4 801.6 728.9 806C732.4 810.3 744 815.3 747.1 817.1M449.5 805.4C448.7 807.5 444.5 812.9 444.7 818.1C444.9 823.2 447.7 830.1 450.7 836.2C453.7 842.2 458.8 848.3 462.8 854.3C466.8 860.4 470.9 866.9 474.9 872.5C478.9 878 482 883.6 487 887.6C492 891.6 500.5 894.1 505.1 896.7C509.8 899.2 513.5 902 515.1 903M508.2 792.3C508.7 795.6 510.2 805.2 511.2 812C512.2 818.8 514.2 827.1 514.2 833.2C514.2 839.2 508.7 842.7 511.2 848.3C513.7 853.8 523.3 861.4 529.3 866.4C535.4 871.5 541.4 875 547.5 878.5C553.5 882.1 562.2 885.1 565.6 887.6C569.1 890.1 567.6 892.4 568 893.3M515.1 903C519.5 902 532.6 898.3 541.4 896.7C550.3 895.1 560 895.4 568 893.3C576.1 891.3 580.9 888.2 589.8 884.6C598.7 880.9 611.7 874.6 621.3 871.6C630.8 868.6 639.4 868.8 647.3 866.4C655.1 864.1 661.1 860 668.4 857.4C675.7 854.7 683.1 853.4 691.1 850.4C699.2 847.4 709.5 842.1 716.8 839.2C724.1 836.3 731.9 834.2 735 833.2M568 893.3C569.2 895.9 573.1 903.2 574.7 908.8C576.3 914.4 575.2 922.4 577.7 926.9C580.2 931.4 584.3 933.5 589.8 936C595.4 938.5 604.9 939.5 611 942C617 944.6 622.6 947.1 626.1 951.1C629.6 955.1 628.1 963.2 632.1 966.2C636.2 969.2 644.7 969.2 650.3 969.2C655.8 969.2 662.9 966.7 665.4 966.2M360 936C365 935 379.2 930.3 390.2 929.9C401.3 929.5 415.4 934.1 426.5 933.6C437.6 933.1 447.7 929.5 456.8 926.9C465.8 924.3 473.4 920.6 481 917.8C488.5 915.1 496.4 912.7 502.1 910.3C507.8 907.8 513 904.2 515.1 903M405.4 742.5C407.4 746 412.9 756.6 417.5 763.6C422 770.7 427.2 777.8 432.6 784.8C437.9 791.7 446.7 801.9 449.5 805.4M360 721.3C363 722.3 370.6 723.8 378.1 727.3C385.7 730.9 400.8 739.9 405.4 742.5M488.2 700.1C492 701.1 504.3 705.7 511.2 706.2C518 706.7 523.3 705.2 529.3 703.1C535.4 701.1 541.4 696.3 547.5 694.1C553.5 691.8 562.6 690.3 565.6 689.5M360 854.3C362 856.9 371.1 862.4 372.1 869.5C373.1 876.5 365 887.1 366 896.7C367.1 906.2 374.1 916.8 378.1 926.9C382.2 937 388.7 948 390.2 957.1C391.8 966.3 387.7 977.8 387.2 981.9M747.1 817.1C749.6 816.8 756.1 814.9 762.2 815C768.2 815.2 773.7 818.6 783.3 818.1C793 817.5 813.8 813 819.9 812M728.9 849.8C732.9 850.3 744 851.1 753.1 852.8C762.2 854.6 772.2 859.4 783.3 860.4C794.5 861.4 813.8 859.1 819.9 858.9M734.4 698.3C735.5 701.6 739.6 710.4 741 718.3C742.4 726.1 741 735.9 742.5 745.5C744 755.1 748.3 766.6 750.1 775.7C751.8 784.8 753.6 793 753.1 799.9C752.6 806.8 748.1 814.3 747.1 817.1M762.2 842.2C762.2 846.3 764.7 858.4 762.2 866.4C759.7 874.5 749.6 882.6 747.1 890.6C744.5 898.7 746 906.2 747.1 914.8C748.1 923.4 754.6 935 753.1 942C751.6 949.1 742.3 952.6 738 957.1C733.7 961.7 729.2 967.2 727.4 969.2M734.4 698.3C731.4 700.6 722.8 707.9 716.8 712.2C710.9 716.5 704.7 721.8 698.7 724.3C692.6 726.8 683.6 726.8 680.5 727.3M854.3 706.2C857.8 707.7 867.9 712.2 875.5 715.2C883 718.3 892.6 720.8 899.7 724.3C906.7 727.8 911.8 732.9 917.8 736.4C923.9 739.9 932.9 744 936 745.5M920.8 688C924.4 690.5 934.4 698.6 942 703.1C949.6 707.7 958.4 712.6 966.2 715.2C974 717.9 983.8 715.1 988.9 719.2C993.9 723.2 995.7 732.5 996.4 739.4C997.2 746.3 996.4 755.8 993.4 760.6C990.4 765.4 980.8 766.9 978.3 768.2M978.3 768.2C981.3 768.9 989.4 774 996.4 772.7C1003.5 771.4 1012.6 765.1 1020.6 760.6C1028.7 756.1 1036.2 751.5 1044.8 745.5C1053.4 739.4 1064.5 731.9 1072 724.3C1079.6 716.8 1085.6 706.7 1090.2 700.1C1094.7 693.6 1097.7 687.5 1099.2 685M860.4 732.5C862.9 735.7 869.9 745.3 875.5 751.5C881 757.7 889.6 763.1 893.6 769.7C897.7 776.2 898.2 783.8 899.7 790.8C901.2 797.9 901.2 805.5 902.7 812C904.2 818.6 907.2 823.1 908.7 830.1C910.3 837.2 910.8 844.3 911.8 854.3C912.8 864.4 915.8 881.6 914.8 890.6C913.8 899.7 912.3 903.7 905.7 908.8C899.2 913.8 885.6 917.8 875.5 920.9C865.4 923.9 852.9 925.9 845.2 926.9C837.5 928 831.9 927.2 829.2 927.2M945.9 811.4C943.3 814 936.6 823 929.9 827.1C923.2 831.3 914.8 832.7 905.7 836.2C896.6 839.7 884.5 844.3 875.5 848.3C866.4 852.3 857.8 856.6 851.3 860.4C844.7 864.2 838.7 869.5 836.2 871.3M945.9 811.4C952.3 808 973.9 797.8 984.3 790.8C994.8 783.9 1001.5 775.7 1008.5 769.7C1015.6 763.6 1023.6 757.1 1026.7 754.5M1021.5 836.2C1025.4 834.7 1036 829.1 1044.8 827.1C1053.6 825.1 1064.6 825.6 1074.1 824.1C1083.7 822.6 1093 820.1 1102.3 818.1C1111.5 816 1123.3 816.4 1129.5 812C1135.6 807.6 1137.5 794.9 1139.2 791.4M1021.5 836.2C1019.9 838.2 1015.7 842.2 1011.6 848.3C1007.4 854.3 1001 864.4 996.4 872.5C991.9 880.5 989.4 889.6 984.3 896.7C979.3 903.7 973.1 911.4 966.2 914.8C959.2 918.2 951.2 918.2 942.6 917.2C934 916.2 919.4 910.2 914.8 908.8M1139.2 791.4C1140.1 793.4 1141.7 798 1144.6 802.9C1147.5 807.9 1154.2 814.5 1156.7 821.1C1159.2 827.6 1158.2 834.7 1159.7 842.2C1161.2 849.8 1166.3 857.4 1165.8 866.4C1165.3 875.5 1158.7 886.6 1156.7 896.7C1154.7 906.8 1153.7 916.8 1153.7 926.9C1153.7 937 1156.2 949.5 1156.7 957.1C1157.2 964.8 1156.7 970.3 1156.7 972.9M1139.2 791.4C1138.6 786.3 1135.6 769.3 1135.5 760.6C1135.4 751.9 1139.6 746 1138.6 739.4C1137.5 732.9 1134 726.3 1129.5 721.3C1124.9 716.2 1116.4 713.2 1111.3 709.2C1106.3 705.2 1102.8 701.1 1099.2 697.1C1095.7 693.1 1091.7 687 1090.2 685M815 784.8C818 784.3 828.1 782.9 833.1 781.8C838.2 780.7 840.7 780.2 845.2 778.1C849.8 776.1 855.3 773.1 860.4 769.7C865.4 766.2 871.4 761.6 875.5 757.6C879.5 753.5 883 747.5 884.5 745.5M815 727.3C818 726.3 826.6 724.8 833.1 721.3C839.7 717.8 850.8 708.7 854.3 706.2M829.2 927.2C828.4 930.7 823.9 941.1 824.1 948.1C824.2 955.1 829.6 963.6 830.1 969.2C830.6 974.9 827.6 979.8 827.1 981.9M799.9 446C801.6 448 808 453.3 810.5 457.8C813 462.2 813.4 465.3 814.8 472.8C816.2 480.2 817.3 495.6 819.1 502.7C820.9 509.8 823.4 510.9 825.5 515.5C827.6 520.1 830.5 524.8 831.9 530.5C833.3 536.2 833.7 546.5 834.1 549.7M810.5 457.8C813.7 457.4 823.7 454.9 829.8 455.7C835.8 456.4 841.9 459.2 846.9 462.1C851.9 464.9 857.6 471 859.7 472.8M769.9 453.5C772.1 455.3 779.2 459.9 782.8 464.2C786.3 468.5 788.1 474.2 791.3 479.2C794.5 484.2 798.4 489.9 802 494.1C805.6 498.4 809.5 503 812.7 504.8C815.9 506.6 819.8 504.8 821.2 504.8M821.2 504.8C824.4 505.9 833.3 509.4 840.5 511.2C847.6 513 856.1 514.4 864 515.5C871.8 516.6 883.6 517.3 887.5 517.6M757.1 472.8C760.3 474.5 771.4 478.8 776.3 483.4C781.3 488.1 785.2 497.7 787 500.5M740 505.9C743.6 506.1 754.3 506.1 761.4 507C768.5 507.8 775.6 510.2 782.8 511.2C789.9 512.3 797 513 804.1 513.4C811.3 513.7 821.9 513.4 825.5 513.4M821.2 476C822.7 473.6 827.3 467.6 829.8 462.1C832.3 456.5 835.1 446 836.2 442.8M840.5 511.2C842.3 508.4 848 499.5 851.2 494.1C854.4 488.8 857.7 483.1 859.7 479.2C861.7 475.2 862.4 472 862.9 470.6M868.3 492C867.5 495.9 864.7 507.3 864 515.5C863.3 523.7 864.7 534 864 541.2C863.3 548.3 861.8 554 859.7 558.3C857.6 562.5 852.6 565.4 851.2 566.8M834.1 549.7C836.9 549 845.5 546.9 851.2 545.4C856.9 544 861.8 541.5 868.3 541.2C874.7 540.8 884.3 542.6 889.6 543.3C895 544 898.5 545.1 900.3 545.4M817 549.7C814.8 550.4 808.4 552.9 804.1 554C799.9 555.1 795.2 555.4 791.3 556.1C787.4 556.8 782.4 557.9 780.6 558.3M817 549.7C816.2 552.6 813.7 561.1 812.7 566.8C811.6 572.5 811.1 579.6 810.5 583.9C810 588.2 809.7 591 809.5 592.5M791.3 575.4C793.4 574.6 799.1 572.2 804.1 571.1C809.1 570 815.9 569.7 821.2 568.9C826.6 568.2 831.2 567.2 836.2 566.8C841.2 566.5 846.5 568.2 851.2 566.8C855.8 565.4 861.8 559.7 864 558.3M809.5 592.5C812.1 591.8 820.3 589.6 825.5 588.2C830.7 586.8 835.5 585.3 840.5 583.9C845.5 582.5 850.8 581.8 855.4 579.6C860.1 577.5 866.1 572.5 868.3 571.1M782.8 577.5C784.9 579.3 791.1 585.7 795.6 588.2C800 590.7 807.2 591.8 809.5 592.5M809.5 592.5C809.3 595.7 809.3 606.4 808.4 611.7C807.5 617 804.8 622.4 804.1 624.5M825.5 515.5C825.9 522.6 826.2 546.9 827.6 558.3C829.1 569.7 831.9 575 834.1 583.9C836.2 592.8 839 603.5 840.5 611.7C841.9 619.9 842.3 629.5 842.6 633.1M821.2 562.5C822.7 565.4 827.3 573.2 829.8 579.6C832.3 586 834.4 593.9 836.2 601C838 608.1 839.8 618.8 840.5 622.4M855.4 579.6C857.6 581.8 863.3 588.9 868.3 592.5C873.2 596 880.7 601 885.4 601C890 601 894.3 593.9 896 592.5M804.1 624.5C807.7 623.8 818.4 621.7 825.5 620.3C832.6 618.8 840.5 617.4 846.9 616C853.3 614.6 858.6 613.1 864 611.7C869.3 610.3 876.5 608.1 878.9 607.4M876.8 524.1C877.5 526.9 880.7 535.5 881.1 541.2C881.4 546.9 877.5 553.3 878.9 558.3C880.4 563.2 887.9 568.9 889.6 571.1M846.9 566.8C848.3 571.1 852.2 585 855.4 592.5C858.6 599.9 863.3 606.7 866.1 611.7C869 616.7 871.5 620.6 872.5 622.4M771.5 107.2C772 109.3 772.8 113.8 774.7 119.9C776.5 126 780.2 137.6 782.6 143.7C785 149.8 787.4 151.9 789 156.4C790.5 160.9 792.3 167 792.1 170.7C792 174.4 788.8 176 788.2 178.7C787.5 181.3 788.2 185.3 788.2 186.6M700 229.5C704 229.1 715.9 227.1 723.8 227.1C731.8 227.1 739.7 229.4 747.7 229.5C755.6 229.6 764.6 228.4 771.5 227.9C778.4 227.4 784.5 226.1 789 226.3C793.5 226.6 795.8 228.2 798.5 229.5C801.1 230.8 803.8 233.5 804.8 234.3" fill="none" stroke="#f7cf98" stroke-width="1.1" stroke-linejoin="round"/>
<path d="" fill="none" stroke="#f6b867" stroke-width="1.7" stroke-linejoin="round"/>
<path d="M415.8 104C418.6 108.5 426.6 122.5 432.4 131C438.2 139.5 445.1 148 450.4 155C455.7 162 459.5 165.4 464 173C468.5 180.6 473.3 193.4 477.6 200.5C481.9 207.6 484.6 210.8 489.6 215.5C494.6 220.2 501.7 224.8 507.7 229C513.7 233.2 517.2 238.8 525.8 241C534.3 243.2 550 239.7 559 242C568 244.3 573 251.1 580 254.7C587 258.3 594.5 260.3 601 263.8C607.5 267.3 613.5 271.1 619 275.8C624.5 280.5 629.4 287 634 292C638.6 297 642.3 300.4 646.4 306C650.5 311.6 654 320.6 658.5 325.6C663 330.6 669.8 331.3 673.5 336C677.2 340.7 679 348.5 681 354C683 359.5 683.6 364.5 685.6 369C687.6 373.5 691.5 377 693 381C694.5 385 693.4 390.3 694.6 393C695.8 395.7 699.1 396.3 700 397M761 104C761.8 107 763 116 765.5 122C768 128 774 133 776 140C778 147 776.5 157 777.5 164C778.5 171 778.8 177.4 782 182C785.2 186.6 793.2 187.8 797 191.4C800.8 195 803.2 198 804.7 203.5C806.2 209 806.3 217.1 806 224.6C805.7 232.1 802.5 242.2 803 248.7C803.5 255.2 809 257.8 809 263.8C809 269.9 802.5 279 803 285C803.5 291 809.2 296 812 300C814.8 304 818 305.5 820 309C822 312.5 821.8 315.5 824 321C826.2 326.5 831.7 333 833 342C834.3 351 831.1 365.3 831.6 375C832.1 384.7 834.3 394.2 836 400C837.7 405.8 842 403.8 842 410C842 416.2 835 430 836 437C837 444 846 449.5 848 452M848 452C850 455.4 856.4 467.1 859.7 472.7C863 478.3 865.1 480.1 868 485.6C870.9 491.1 873.9 500.3 876.8 505.5C879.7 510.7 881.6 513.9 885.4 517C889.2 520.1 896.5 521.2 899.6 524C902.7 526.8 904 529 904 534C904 539 901.3 547.3 899.6 554C897.9 560.7 894.9 568.3 894 574C893.1 579.7 893.5 584.2 894 588C894.5 591.8 897.5 593.2 896.8 596.7C896.1 600.2 893.9 606.3 890 609C886.1 611.7 877.5 611.1 873.7 612.8C869.9 614.5 869 616.4 867.2 619.2C865.4 622 865.2 626.9 862.7 629.7C860.2 632.5 855.4 634.4 852 636C848.6 637.6 846.2 638.8 842.5 639.4C838.8 640 833.4 639.4 829.6 639.8C825.8 640.2 822.2 642.5 819.5 642C816.8 641.5 815.2 638.9 813.1 636.6C811 634.3 808.3 630.2 806.7 628.3C805.1 626.4 805 625.5 803.5 625.2C802 624.9 801.3 625.2 798 626.5C794.7 627.8 788.5 630.4 783.8 633C779.1 635.6 774 639.2 770 642C766 644.8 764.8 650.7 759.6 650C754.4 649.3 747.1 640.2 738.6 638C730.1 635.8 716.5 637.5 708.5 637C700.5 636.5 697 634.5 690.5 635C684 635.5 676.5 639.5 669.5 640C662.5 640.5 654 640.3 648.5 638C643 635.7 639.4 631 636.4 626C633.4 621 633.4 612.2 630.4 608C627.4 603.8 623.4 603.5 618.4 601C613.4 598.5 606 595.5 600.4 593C594.8 590.5 588.2 589.8 584.6 586C581 582.2 579.5 575.3 579 570.5C578.5 565.7 580.4 562.6 581.3 557C582.2 551.4 583.3 544.1 584.6 537C585.9 529.9 587.1 520.5 589 514.5C590.9 508.5 593.3 504.9 595.9 501C598.5 497.1 599.6 492.8 604.8 491C610 489.2 617.7 491.3 627 490C636.3 488.7 649.5 485.1 660.8 483C672 480.9 683.7 479.7 694.5 477.5C705.3 475.3 715.7 472 725.8 469.6C735.9 467.2 748.3 465.9 755 463C761.7 460.1 762.7 455 766 452C769.3 449 770.9 447.3 775 445C779.1 442.7 784.5 439.3 790.8 438C797.1 436.7 805.3 436.9 813 437C820.7 437.1 831.2 436 837 438.5C842.8 441 846.2 449.8 848 452M700 397C701.3 397.5 704.1 398.3 708 400C711.9 401.7 719.9 403.7 723.6 407C727.3 410.3 727.7 414.4 730.3 420C732.9 425.6 735.6 434.8 739.3 440.5C743 446.2 749.7 449.1 752.7 454C755.7 458.9 754.6 465.8 757.2 469.6C759.8 473.4 764.7 473.4 768.5 477C772.3 480.6 776.9 486.5 780 491C783.1 495.5 786.5 499.7 787 504C787.5 508.3 784 512 782.8 517C781.6 522 780.7 527.8 780 534C779.3 540.2 778.5 547.8 778.5 554C778.5 560.2 777.9 566 780 571C782.1 576 787 580.7 791.3 584C795.6 587.3 802.5 587.5 805.6 591C808.7 594.5 809.5 600.7 809.8 605C810.1 609.3 808.4 613.7 807.5 617C806.6 620.3 805 623.7 804.5 625M694.6 393C693.8 395.8 691.1 404.7 690 410C688.9 415.3 688.7 420 688 425C687.3 430 685.7 435 686 440C686.3 445 688.8 450 690 455C691.2 460 692.2 466.2 693 470C693.8 473.8 694.2 476.2 694.5 477.5M842.5 639.6C843.1 640.8 842.8 642.5 846 646.7C849.2 650.9 856 658.5 861.7 665C867.4 671.5 872.7 678.7 880 686C887.3 693.3 896.4 699.6 905.7 709C915 718.4 927 732.4 936 742.5C945 752.6 952.5 761.6 960 769.7C967.5 777.8 976 784 981 791C986 798 987.9 803 990 812C992.1 821 991.3 837 993.4 845C995.5 853 997 854.9 1002.5 860C1008 865.1 1019.1 873.7 1026.7 875.5C1034.3 877.3 1043 871 1048 871C1053 871 1050.5 869.7 1057 875.5C1063.5 881.3 1076.9 895.6 1087 905.7C1097.1 915.8 1107.3 925.5 1117.4 936C1127.5 946.5 1140.5 961.3 1147.6 969C1154.7 976.7 1157.9 979.8 1160 982M819.5 642C820.5 643.3 823.8 646.8 825.5 650C827.2 653.2 828.1 657.7 829.6 661.4C831.1 665.1 831.9 669.2 834.2 672.4C836.5 675.6 838.8 678.8 843.4 680.6C848 682.4 856.4 682.5 861.7 683.4C867.1 684.3 871.7 684.5 875.5 686C879.3 687.5 882.3 690.3 884.7 692.6C887.1 694.9 885 694.3 890 700C895 705.7 906.6 717.4 914.8 727C923 736.6 934.5 744.4 939 757.6C943.5 770.8 939 795.4 942 806C945 816.6 952 816 957 821C962 826 965.4 829 972 836C978.6 843 987.3 853.9 996.4 863C1005.5 872.1 1017.1 884 1026.7 890.6C1036.3 897.2 1047.5 898.1 1054 902.7C1060.5 907.3 1063.5 911.5 1066 918C1068.5 924.5 1066.5 934 1069 942C1071.5 950 1076.5 959.3 1081 966C1085.5 972.7 1093.5 979.3 1096 982M360 849.8C361 847.5 362.5 839.8 366 836C369.5 832.2 373.4 829.1 381 827C388.6 824.9 403.3 825.5 411.4 823.5C419.5 821.5 423.1 818.2 429.6 815C436.2 811.8 440.6 806.7 450.7 804.4C460.8 802.1 479.9 804 490 801.4C500.1 798.8 503.9 793.8 511 789C518.1 784.2 525.3 776.5 532.4 772.7C539.5 768.9 545.5 767.8 553.5 766C561.5 764.2 573.6 764.3 580.7 762C587.8 759.7 589.4 754.5 595.9 752C602.4 749.5 611.4 748.6 620 747C628.6 745.4 640.2 744.5 647.3 742.5C654.4 740.5 655.8 738.1 662.4 735C669 731.9 679 727 686.6 724C694.2 721 701.7 719.5 707.7 716.8C713.8 714.1 719.9 711 722.9 707.7C725.9 704.4 723.8 700 725.9 697C728 694 731.5 695.3 735.6 690C739.7 684.7 746.6 672.1 750.6 665.4C754.6 658.7 758.1 652.6 759.6 650M819.8 642C819.9 644.2 820.2 650.9 820.3 655C820.4 659.1 820 664.3 820.5 666.9C821 669.5 822.9 669.1 823.2 670.6C823.5 672.1 823.8 672.3 822.3 676C820.8 679.7 816 688.6 814 692.6C812 696.6 812 696.3 810.4 700C808.8 703.7 807.5 708.5 804.5 715C801.5 721.5 795.9 731.4 792.4 739C788.9 746.6 787.3 752.5 783.3 760.6C779.3 768.7 771.2 778.7 768.2 787.8C765.2 796.9 766.7 806 765.2 815C763.7 824 764.5 836.5 759 842C753.5 847.5 738 846 732 848C726 850 726.9 848.4 722.9 854C718.9 859.6 711.7 873.4 707.7 881.5C703.7 889.6 701.2 892.6 698.7 902.7C696.2 912.8 694.4 928.8 692.6 942C690.8 955.2 688.8 975.3 688 982M894 584C899.3 584.3 916.7 586.5 926 585.8C935.3 585.1 940.5 581.8 950 579.8C959.5 577.8 972.5 575.6 983 573.8C993.5 572 1004.5 570 1013 569C1021.5 568 1028 567.3 1034 567.8C1040 568.3 1041.4 571.3 1049 572C1056.6 572.7 1070.3 571.2 1079.4 572C1088.5 572.8 1095.5 574.8 1103.5 576.8C1111.5 578.8 1120.5 582.5 1127.5 584C1134.5 585.5 1135.5 584.8 1145.5 585.8C1155.5 586.8 1175.1 588.8 1187.6 590C1200.1 591.2 1211.1 593.2 1220.6 593C1230.1 592.8 1235.6 591.5 1244.7 588.8C1253.8 586.1 1270 579 1275 577" fill="none" stroke="#f9a740" stroke-width="2.05" stroke-linejoin="round" stroke-linecap="round"/>
<rect x="451.8" y="161.3" width="20.2" height="12" rx="2.400" fill="#2e8b57"/>
<text x="454" y="170.6" font-size="9.200" font-weight="700" fill="#fff" textLength="15.8" lengthAdjust="spacingAndGlyphs">E18</text>
<rect x="650.8" y="320.5" width="20.2" height="12" rx="2.400" fill="#2e8b57"/>
<text x="653" y="329.8" font-size="9.200" font-weight="700" fill="#fff" textLength="15.8" lengthAdjust="spacingAndGlyphs">E18</text>
<rect x="779.9" y="732.8" width="20.2" height="12" rx="2.400" fill="#2e8b57"/>
<text x="782.1" y="742.1" font-size="9.200" font-weight="700" fill="#fff" textLength="15.8" lengthAdjust="spacingAndGlyphs">E95</text>
<rect x="691.4" y="884.6" width="25.4" height="12" rx="2.400" fill="#4a7fd6"/>
<text x="693.6" y="893.9" font-size="9.200" font-weight="700" fill="#fff" textLength="21" lengthAdjust="spacingAndGlyphs">P-23</text>
<rect x="694.9" y="390.7" width="11.600" height="11.600" rx="2.500" fill="#f4773c"/>
<text x="697.4" y="400.2" font-size="10" font-weight="700" fill="#fff">₽</text>
<rect x="780.9" y="498.9" width="11.600" height="11.600" rx="2.500" fill="#f4773c"/>
<text x="783.4" y="508.4" font-size="10" font-weight="700" fill="#fff">₽</text>
<rect x="820.4" y="644.1" width="11.600" height="11.600" rx="2.500" fill="#f4773c"/>
<text x="822.9" y="653.6" font-size="10" font-weight="700" fill="#fff">₽</text>
<rect x="940.1" y="805.6" width="11.600" height="11.600" rx="2.500" fill="#f4773c"/>
<text x="942.6" y="815.1" font-size="10" font-weight="700" fill="#fff">₽</text>
<rect x="796" y="638.200" width="11.800" height="11.800" rx="2.600" fill="#3478ef"/>
<path d="M798 645.800l3-1.500 .300-3.300c.200-.800 1.200-.800 1.300 0l.300 3.300 3 1.500v1l-3-.700-.300 1.800.900.700v.700l-1.600-.400-1.600.400v-.700l.900-.700-.300-1.800-3 .700z" fill="#fff" transform="translate(.2 .4) rotate(45 801.700 643.700)"/>
<g font-family="Liberation Sans, sans-serif" stroke="#fff" stroke-opacity=".85" stroke-width="2.200" stroke-linejoin="round" paint-order="stroke" fill="#3d3d3d">
<text x="360.3" y="172.7" font-size="9.7" textLength="31.4" font-family="DejaVu Sans, Liberation Sans, sans-serif" lengthAdjust="spacingAndGlyphs">менка</text>
<text x="359.2" y="236.7" font-size="9.7" textLength="17.4" font-family="DejaVu Sans, Liberation Sans, sans-serif" lengthAdjust="spacingAndGlyphs">ина</text>
<text x="480" y="242" font-size="9.7" textLength="38.3" font-family="DejaVu Sans, Liberation Sans, sans-serif" lengthAdjust="spacingAndGlyphs">Победа</text>
<text x="569" y="237.6" font-size="9.7" textLength="76.2" font-family="DejaVu Sans, Liberation Sans, sans-serif" lengthAdjust="spacingAndGlyphs">Первомайское</text>
<text x="534.9" y="312" font-size="12.4" textLength="46.1">Рощино</text>
<text x="556.6" y="358" font-size="12.4" textLength="74.1">Зеленогорск</text>
<text x="489" y="382.9" font-size="9.7" textLength="63.3" font-family="DejaVu Sans, Liberation Sans, sans-serif" lengthAdjust="spacingAndGlyphs">Смолячково</text>
<text x="750.4" y="394.3" font-size="12.4" textLength="62.6">Сертолово</text>
<text x="787.5" y="342.8" font-size="9.7" textLength="53.1" font-family="DejaVu Sans, Liberation Sans, sans-serif" lengthAdjust="spacingAndGlyphs">Агалатово</text>
<text x="803" y="229" font-size="9.7" textLength="55" font-family="DejaVu Sans, Liberation Sans, sans-serif" lengthAdjust="spacingAndGlyphs">Васкелово</text>
<text x="855.7" y="250" font-size="9.7" textLength="54.9" font-family="DejaVu Sans, Liberation Sans, sans-serif" lengthAdjust="spacingAndGlyphs">Гарболово</text>
<text x="843.6" y="301.8" font-size="9.7" textLength="55.2" font-family="DejaVu Sans, Liberation Sans, sans-serif" lengthAdjust="spacingAndGlyphs">Лесколово</text>
<text x="869.3" y="390.4" font-size="9.7" textLength="40.7" font-family="DejaVu Sans, Liberation Sans, sans-serif" lengthAdjust="spacingAndGlyphs">Токсово</text>
<text x="657.5" y="430.5" font-size="12.4" textLength="69.7">Сестрорецк</text>
<text x="765" y="419.6" font-size="9.7" textLength="51.7" font-family="DejaVu Sans, Liberation Sans, sans-serif" lengthAdjust="spacingAndGlyphs">Песочный</text>
<text x="765" y="437.7" font-size="12.4" textLength="68" font-weight="700" fill="#303030">Парголово</text>
<text x="678.5" y="489.7" font-size="9.7" textLength="55" font-family="DejaVu Sans, Liberation Sans, sans-serif" lengthAdjust="spacingAndGlyphs">Лисий Нос</text>
<text x="588.4" y="504.7" font-size="12.4" textLength="64.6">Кронштадт</text>
<text x="468.2" y="528" font-size="9.7" textLength="45.6" font-family="DejaVu Sans, Liberation Sans, sans-serif" lengthAdjust="spacingAndGlyphs">Лебяжье</text>
<text x="459.2" y="555.8" font-size="9.7" textLength="83.2" font-family="DejaVu Sans, Liberation Sans, sans-serif" lengthAdjust="spacingAndGlyphs">Большая Ижора</text>
<text x="588.4" y="564.2" font-size="12.4" textLength="66.1">Ломоносов</text>
<text x="640.3" y="585" font-size="12.4" textLength="56.2">Петергоф</text>
<text x="687.5" y="605.3" font-size="12.4" textLength="55">Стрельна</text>
<text x="753.6" y="541.6" font-size="14.8" textLength="126.4" font-weight="700" fill="#303030">Санкт-Петербург</text>
<text x="360" y="573.8" font-size="12.4" textLength="48">вый Бор</text>
<text x="538.2" y="682.9" font-size="9.7" textLength="55.6" font-family="DejaVu Sans, Liberation Sans, sans-serif" lengthAdjust="spacingAndGlyphs">Гостилицы</text>
<text x="693.5" y="691.2" font-size="12.4" textLength="81.2">Красное Село</text>
<text x="837.5" y="460.2" font-size="12.4" textLength="49.6" font-weight="700" fill="#303030">Мурино</text>
<text x="902.7" y="482.1" font-size="12.4" textLength="69.5">Всеволожск</text>
<text x="864.6" y="564.8" font-size="12.4" textLength="49.6">Кудрово</text>
<text x="1036.8" y="538.6" font-size="12.4" textLength="85.2">Шлиссельбург</text>
<text x="1035.3" y="589.4" font-size="12.4" textLength="48.7">Кировск</text>
<text x="1147" y="588.8" font-size="9.7" textLength="78.5" font-family="DejaVu Sans, Liberation Sans, sans-serif" lengthAdjust="spacingAndGlyphs">Приладожский</text>
<text x="814" y="637.5" font-size="12.4" textLength="53.7" font-weight="700" fill="#303030">Шушары</text>
<text x="963.1" y="662.4" font-size="12.4" textLength="57.7">Отрадное</text>
<text x="892.5" y="680.5" font-size="12.4" textLength="53.5" font-weight="700" fill="#303030">Колпино</text>
<text x="1078.5" y="674.4" font-size="12.4" textLength="21.4">Мга</text>
<text x="1264.8" y="613.8" font-size="9.7" textLength="31.4" font-family="DejaVu Sans, Liberation Sans, sans-serif" lengthAdjust="spacingAndGlyphs">Назия</text>
<text x="460.7" y="694" font-size="9.7" textLength="55.6" font-family="DejaVu Sans, Liberation Sans, sans-serif" lengthAdjust="spacingAndGlyphs">Лопухинка</text>
<text x="360" y="712.8" font-size="9.7" textLength="17.5" font-family="DejaVu Sans, Liberation Sans, sans-serif" lengthAdjust="spacingAndGlyphs">рье</text>
<text x="629.1" y="728.2" font-size="9.7" textLength="37.9" font-family="DejaVu Sans, Liberation Sans, sans-serif" lengthAdjust="spacingAndGlyphs">Кипень</text>
<text x="514.8" y="769" font-size="9.7" textLength="37.8" font-family="DejaVu Sans, Liberation Sans, sans-serif" lengthAdjust="spacingAndGlyphs">Сельцо</text>
<text x="424.4" y="798.7" font-size="9.7" textLength="50.6" font-family="DejaVu Sans, Liberation Sans, sans-serif" lengthAdjust="spacingAndGlyphs">Бегуницы</text>
<text x="353.7" y="824.7" font-size="9.7" textLength="54.5" font-family="DejaVu Sans, Liberation Sans, sans-serif" lengthAdjust="spacingAndGlyphs">Кимитицы</text>
<text x="724.4" y="811" font-size="12.4" textLength="45.9">Гатчина</text>
<text x="743.1" y="837" font-size="9.7" textLength="60.8" font-family="DejaVu Sans, Liberation Sans, sans-serif" lengthAdjust="spacingAndGlyphs">Новый Свет</text>
<text x="658.8" y="844.7" font-size="9.7" textLength="64.1" font-family="DejaVu Sans, Liberation Sans, sans-serif" lengthAdjust="spacingAndGlyphs">Войсковицы</text>
<text x="587.4" y="866.4" font-size="9.7" textLength="66.8" font-family="DejaVu Sans, Liberation Sans, sans-serif" lengthAdjust="spacingAndGlyphs">Елизаветино</text>
<text x="571.7" y="896" font-size="9.7" textLength="51.3" font-family="DejaVu Sans, Liberation Sans, sans-serif" lengthAdjust="spacingAndGlyphs">Кикерино</text>
<text x="487" y="898.2" font-size="12.4" textLength="56">Волосово</text>
<text x="386.6" y="927" font-size="9.7" textLength="79.2" font-family="DejaVu Sans, Liberation Sans, sans-serif" lengthAdjust="spacingAndGlyphs">Большая Вруда</text>
<text x="510.6" y="964.7" font-size="9.7" textLength="37.5" font-family="DejaVu Sans, Liberation Sans, sans-serif" lengthAdjust="spacingAndGlyphs">Извара</text>
<text x="695" y="963.2" font-size="12.4" textLength="64.8">Сиверский</text>
<text x="649.7" y="985.5" font-size="9.7" textLength="68.6" font-family="DejaVu Sans, Liberation Sans, sans-serif" lengthAdjust="spacingAndGlyphs">Рождествено</text>
<text x="829.5" y="698.6" font-size="12.4" textLength="49.6" font-weight="700" fill="#303030">Пушкин</text>
<text x="954.1" y="713.7" font-size="12.4" textLength="68.9">Никольское</text>
<text x="832.2" y="727.3" font-size="12.4" textLength="55.4">Павловск</text>
<text x="949" y="763" font-size="12.4" textLength="59.5">Ульяновка</text>
<text x="815" y="772.7" font-size="12.4" textLength="60.5">Коммунар</text>
<text x="1121.3" y="786.9" font-size="9.7" textLength="35.4" font-family="DejaVu Sans, Liberation Sans, sans-serif" lengthAdjust="spacingAndGlyphs">Шапки</text>
<text x="1056.9" y="819" font-size="9.7" textLength="34.2" font-family="DejaVu Sans, Liberation Sans, sans-serif" lengthAdjust="spacingAndGlyphs">Нурма</text>
<text x="1004.6" y="831" font-size="12.4" textLength="33.6">Тосно</text>
<text x="812" y="865.5" font-size="9.7" textLength="49.9" font-family="DejaVu Sans, Liberation Sans, sans-serif" lengthAdjust="spacingAndGlyphs">Сусанино</text>
<text x="902.7" y="911.8" font-size="9.7" textLength="80.1" font-family="DejaVu Sans, Liberation Sans, sans-serif" lengthAdjust="spacingAndGlyphs">Лисино-Корпус</text>
<text x="806" y="920.9" font-size="12.4" textLength="45.3">Вырица</text>
<text x="1095.6" y="919.4" font-size="9.7" textLength="36.9" font-family="DejaVu Sans, Liberation Sans, sans-serif" lengthAdjust="spacingAndGlyphs">Рябово</text>
<text x="1137" y="968.6" font-size="9.7" textLength="40" font-family="DejaVu Sans, Liberation Sans, sans-serif" lengthAdjust="spacingAndGlyphs">Любань</text>
</g>
<circle cx="369.6" cy="177.9" r="2.0" fill="#fff" stroke="#555" stroke-width=".95"/>
<circle cx="498.7" cy="247.5" r="2.0" fill="#fff" stroke="#555" stroke-width=".95"/>
<circle cx="607.2" cy="243.3" r="2.0" fill="#fff" stroke="#555" stroke-width=".95"/>
<circle cx="558.4" cy="318.4" r="2.3" fill="#fff" stroke="#555" stroke-width=".95"/>
<circle cx="593.6" cy="363.9" r="2.3" fill="#fff" stroke="#555" stroke-width=".95"/>
<circle cx="520.7" cy="370" r="2.0" fill="#fff" stroke="#555" stroke-width=".95"/>
<circle cx="782" cy="400" r="2.3" fill="#fff" stroke="#555" stroke-width=".95"/>
<circle cx="813.5" cy="348" r="2.0" fill="#fff" stroke="#555" stroke-width=".95"/>
<circle cx="831.6" cy="234" r="2.0" fill="#fff" stroke="#555" stroke-width=".95"/>
<circle cx="883.4" cy="256" r="2.0" fill="#fff" stroke="#555" stroke-width=".95"/>
<circle cx="871" cy="307" r="2.0" fill="#fff" stroke="#555" stroke-width=".95"/>
<circle cx="888.9" cy="395.8" r="2.0" fill="#fff" stroke="#555" stroke-width=".95"/>
<circle cx="692.6" cy="436.5" r="2.3" fill="#fff" stroke="#555" stroke-width=".95"/>
<circle cx="762" cy="415.4" r="2.0" fill="#fff" stroke="#555" stroke-width=".95"/>
<circle cx="798.7" cy="445" r="2.3" fill="#fff" stroke="#555" stroke-width=".95"/>
<circle cx="705.5" cy="494" r="2.0" fill="#fff" stroke="#555" stroke-width=".95"/>
<circle cx="621.4" cy="510.7" r="2.3" fill="#fff" stroke="#555" stroke-width=".95"/>
<circle cx="490.7" cy="533.2" r="2.0" fill="#fff" stroke="#555" stroke-width=".95"/>
<circle cx="545.7" cy="544.3" r="2.0" fill="#fff" stroke="#555" stroke-width=".95"/>
<circle cx="621.4" cy="569.9" r="2.3" fill="#fff" stroke="#555" stroke-width=".95"/>
<circle cx="668.6" cy="591.2" r="2.3" fill="#fff" stroke="#555" stroke-width=".95"/>
<circle cx="714.6" cy="610.7" r="2.3" fill="#fff" stroke="#555" stroke-width=".95"/>
<circle cx="817" cy="549.5" r="2.3" fill="#fff" stroke="#555" stroke-width=".95"/>
<circle cx="366.6" cy="580.4" r="2.3" fill="#fff" stroke="#555" stroke-width=".95"/>
<circle cx="566.4" cy="688.9" r="2.0" fill="#fff" stroke="#555" stroke-width=".95"/>
<circle cx="734.4" cy="698.3" r="2.3" fill="#fff" stroke="#555" stroke-width=".95"/>
<circle cx="862.2" cy="468" r="2.3" fill="#fff" stroke="#555" stroke-width=".95"/>
<circle cx="937.3" cy="487.2" r="2.3" fill="#fff" stroke="#555" stroke-width=".95"/>
<circle cx="889.5" cy="571.4" r="2.3" fill="#fff" stroke="#555" stroke-width=".95"/>
<circle cx="1079.4" cy="545.2" r="2.3" fill="#fff" stroke="#555" stroke-width=".95"/>
<circle cx="1059.6" cy="595" r="2.3" fill="#fff" stroke="#555" stroke-width=".95"/>
<circle cx="1186.4" cy="595" r="2.0" fill="#fff" stroke="#555" stroke-width=".95"/>
<circle cx="840.6" cy="645.3" r="2.3" fill="#fff" stroke="#555" stroke-width=".95"/>
<circle cx="991.7" cy="669" r="2.3" fill="#fff" stroke="#555" stroke-width=".95"/>
<circle cx="919.6" cy="687" r="2.3" fill="#fff" stroke="#555" stroke-width=".95"/>
<circle cx="1089.3" cy="680.5" r="2.3" fill="#fff" stroke="#555" stroke-width=".95"/>
<circle cx="488.2" cy="700" r="2.0" fill="#fff" stroke="#555" stroke-width=".95"/>
<circle cx="648.2" cy="733.4" r="2.0" fill="#fff" stroke="#555" stroke-width=".95"/>
<circle cx="533.3" cy="775" r="2.0" fill="#fff" stroke="#555" stroke-width=".95"/>
<circle cx="449.5" cy="805.4" r="2.0" fill="#fff" stroke="#555" stroke-width=".95"/>
<circle cx="381.2" cy="830.4" r="2.0" fill="#fff" stroke="#555" stroke-width=".95"/>
<circle cx="747" cy="817" r="2.3" fill="#fff" stroke="#555" stroke-width=".95"/>
<circle cx="774.6" cy="824.4" r="2.0" fill="#fff" stroke="#555" stroke-width=".95"/>
<circle cx="691.1" cy="850.4" r="2.0" fill="#fff" stroke="#555" stroke-width=".95"/>
<circle cx="621.3" cy="871.6" r="2.0" fill="#fff" stroke="#555" stroke-width=".95"/>
<circle cx="568" cy="893.3" r="2.0" fill="#fff" stroke="#555" stroke-width=".95"/>
<circle cx="515.1" cy="903" r="2.3" fill="#fff" stroke="#555" stroke-width=".95"/>
<circle cx="426.5" cy="933.6" r="2.0" fill="#fff" stroke="#555" stroke-width=".95"/>
<circle cx="529.3" cy="970.8" r="2.0" fill="#fff" stroke="#555" stroke-width=".95"/>
<circle cx="727.4" cy="969.2" r="2.3" fill="#fff" stroke="#555" stroke-width=".95"/>
<circle cx="854.3" cy="706.2" r="2.3" fill="#fff" stroke="#555" stroke-width=".95"/>
<circle cx="988.9" cy="719.2" r="2.3" fill="#fff" stroke="#555" stroke-width=".95"/>
<circle cx="860.4" cy="732.5" r="2.3" fill="#fff" stroke="#555" stroke-width=".95"/>
<circle cx="978.3" cy="768.2" r="2.3" fill="#fff" stroke="#555" stroke-width=".95"/>
<circle cx="845.2" cy="778.1" r="2.3" fill="#fff" stroke="#555" stroke-width=".95"/>
<circle cx="1139.2" cy="791.4" r="2.0" fill="#fff" stroke="#555" stroke-width=".95"/>
<circle cx="1074.1" cy="824.1" r="2.0" fill="#fff" stroke="#555" stroke-width=".95"/>
<circle cx="1021.5" cy="836.2" r="2.3" fill="#fff" stroke="#555" stroke-width=".95"/>
<circle cx="836.2" cy="871.3" r="2.0" fill="#fff" stroke="#555" stroke-width=".95"/>
<circle cx="942.6" cy="917.2" r="2.0" fill="#fff" stroke="#555" stroke-width=".95"/>
<circle cx="829.2" cy="927.2" r="2.3" fill="#fff" stroke="#555" stroke-width=".95"/>
<circle cx="1114.4" cy="924.2" r="2.0" fill="#fff" stroke="#555" stroke-width=".95"/>
<circle cx="1156.7" cy="972.9" r="2.0" fill="#fff" stroke="#555" stroke-width=".95"/>
<g font-style="italic" fill="#3570c8" stroke="#fff" stroke-opacity=".35" stroke-width="1.200" paint-order="stroke">
<text x="1147" y="466.200" font-size="12.200" textLength="22">бух.</text>
<text x="1108.900" y="479.100" font-size="12.200" textLength="97.300">Петрокрепость</text>
<text x="1010.500" y="645.500" font-size="10.500" textLength="38.500" transform="rotate(-15 1010.500 645.500)" letter-spacing=".6">р. Нева</text>
<text x="1266" y="486" font-size="10.300" transform="rotate(-76 1266 486)" letter-spacing=".3">Новоладожский</text>
<text x="792.900" y="660.300" font-size="9.600" font-style="normal" textLength="18.200" fill="#2f5fb5">LED</text>
</g>
</svg>
<div class="b" style="left:1210px;top:826px;width:40px;height:80px;background:#fff;border-radius:9px;box-shadow:0 2px 6px rgba(60,80,60,.22)"></div>
<div class="b" style="left:1210px;top:927px;width:40px;height:42px;background:#fff;border-radius:9px;box-shadow:0 2px 6px rgba(60,80,60,.22)"></div>
<svg class="b" style="left:1210px;top:826px" width="40" height="144" viewBox="1210 826 40 144"><path d="M1222 846h16M1230 838v16M1222 886.500h16" stroke="#0b1f33" stroke-width="1.600" fill="none"/><path d="M1236 941.500l-4.600 12.400-1.700-5.500-6-1.700z" fill="#0b1f33"/></svg>
<div class="b" style="left:0px;top:105px;width:360px;height:877px;background:#ffffff;"></div>
<div class="b" style="left:24px;top:201px;width:304px;height:52px;background:#f5f7fa;border-radius:4px;"></div>
<svg class="b" style="left:0;top:105px" width="360" height="200" viewBox="0 105 360 200" fill="none" stroke-linecap="round" stroke-linejoin="round">
<path d="M30 137l-3.700 3.800 3.700 3.800" stroke="#0d4cd3" stroke-width="1.700"/>
<circle cx="299" cy="226" r="7" stroke="#0d4cd3" stroke-width="1.600"/><path d="M304.200 231.200l5 5" stroke="#0d4cd3" stroke-width="1.600"/>
</svg>
<span class="t" style="left:40.50px;top:132.12px;font-size:16.4px;line-height:16.4px;color:#0d4cd3;letter-spacing:-0.538px;">Назад</span>
<span class="t" style="left:24.30px;top:179.51px;font-size:14.4px;line-height:14.4px;color:#0b1f33;letter-spacing:-0.218px;">Поиск по названию</span>
<span class="t" style="left:87.30px;top:303.67px;font-size:20px;line-height:20px;color:#0b1f33;font-weight:700;letter-spacing:-0.552px;">Ничего не найдено</span>
<span class="t" style="left:51.30px;top:339.82px;font-size:16.4px;line-height:16.4px;color:#66727f;letter-spacing:-0.212px;">Попробуйте изменить параметры</span>
<span class="t" style="left:102.50px;top:363.62px;font-size:16.4px;line-height:16.4px;color:#66727f;letter-spacing:-0.376px;">поиска или фильтра</span>
<span class="t" style="left:141.30px;top:396.12px;font-size:16.4px;line-height:16.4px;color:#0d4cd3;letter-spacing:-0.362px;">Сбросить</span>
<div class="b" style="left:0px;top:41px;width:1274px;height:64px;background:#ffffff;box-shadow:0 1px 4px rgba(200,210,230,.55);z-index:2;"></div>
<div style="position:absolute;left:0;top:0;z-index:3"><span class="t" style="left:28.60px;top:57.97px;font-size:25.2px;line-height:25.2px;color:#0d5aa7;font-weight:700;letter-spacing:-0.147px;">гос</span>
<span class="t" style="left:68.30px;top:57.97px;font-size:25.2px;line-height:25.2px;color:#ee2f53;font-weight:700;letter-spacing:0.303px;">услуги</span>
<span class="t" style="left:177.00px;top:64.32px;font-size:16.4px;line-height:16.4px;color:#0d4cd3;letter-spacing:-0.216px;">Организациям</span>
<span class="t" style="left:667.30px;top:64.32px;font-size:16.4px;line-height:16.4px;color:#0d4cd3;letter-spacing:-0.122px;">Услуги</span>
<span class="t" style="left:741.00px;top:64.32px;font-size:16.4px;line-height:16.4px;color:#0d4cd3;letter-spacing:0.129px;">Документы</span>
<span class="t" style="left:851.00px;top:64.32px;font-size:16.4px;line-height:16.4px;color:#0d4cd3;letter-spacing:-0.592px;">Заявления</span>
<span class="t" style="left:952.30px;top:64.32px;font-size:16.4px;line-height:16.4px;color:#0d4cd3;letter-spacing:-0.073px;">Платежи</span>
<span class="t" style="left:1042.70px;top:64.32px;font-size:16.4px;line-height:16.4px;color:#0d4cd3;letter-spacing:-0.174px;">Помощь</span>
<svg class="b" style="left:0;top:41px;z-index:3" width="1274" height="64" viewBox="0 41 1274 64" fill="none" stroke-linecap="round" stroke-linejoin="round">
<path d="M297.300 70.600l3.800 3.800 3.800-3.800" stroke="#0d4cd3" stroke-width="1.800"/>
<circle cx="1139" cy="71" r="7" stroke="#0d4cd3" stroke-width="2"/><path d="M1144.300 76.300l5.700 5.700" stroke="#0d4cd3" stroke-width="2"/>
<defs><clipPath id="avc"><circle cx="1203.100" cy="73" r="16"/></clipPath>
<radialGradient id="avf" cx=".5" cy=".45" r=".6"><stop offset="0" stop-color="#f0d6b8"/><stop offset=".7" stop-color="#dcb48c"/><stop offset="1" stop-color="#b98560"/></radialGradient></defs>
<circle cx="1203.100" cy="73" r="17.800" fill="#d6e0fa"/>
<g clip-path="url(#avc)">
<rect x="1186" y="56" width="35" height="35" fill="#8c624b"/>
<path d="M1188 92c0-12 2-26 8-31 4-3.500 11-3.500 15 0 5 5 8 18 8 31z" fill="#b8957c"/>
<ellipse cx="1203" cy="70.500" rx="7.800" ry="8.600" fill="url(#avf)"/>
<path d="M1196 66c2-4.500 12-4.500 14 0-2-1.500-4.500-2-7-2s-5 .500-7 2z" fill="#c4804a"/>
<path d="M1194 72c2 8 5 13 9.500 17l-4 4h-13v-8c2-5 5-9 7.500-13z" fill="#d9bfa3"/>
<path d="M1212.500 70c-1 8-4 14-9 19l3 4h14v-12c-2-5-5-8-8-11z" fill="#a99d94"/>
<path d="M1194.500 71.500c2.500 8 5.500 13.500 9 17.500 4-4.500 7.500-10 9-19" fill="none" stroke="#8a6e5c" stroke-width=".800"/>
<ellipse cx="1203" cy="72.300" rx="1.700" ry="1.100" fill="#5a3c2c"/>
<path d="M1198.500 70.300h2.600M1205 70.300h2.600" stroke="#6b4a36" stroke-width=".900"/>
</g>
<path d="M1235.600 71.400l4.500 4.700 4.500-4.700" stroke="#0d4cd3" stroke-width="2"/>
<path d="M0 68.500v17l3.900-3.700 3 6.800 2.500-1.100-3-6.700h5.200z" fill="#fff" stroke="#111" stroke-width="1.100" stroke-linejoin="miter"/>
</svg></div>
<div class="b" style="left:0px;top:0px;width:1920px;height:41px;background:#353535;"></div>
<div class="b" style="left:0px;top:40px;width:1274px;height:1px;background:#3a3a3a;"></div>
<div class="b" style="left:1274px;top:40px;width:646px;height:1px;background:#5a5a5a;"></div>
<div class="b" style="left:120px;top:0px;width:1626px;height:34px;background:#1f2023;border-radius:17px;"></div>
<div class="b" style="left:125px;top:5px;width:24px;height:24px;background:#353637;border-radius:12px;"></div>
<svg class="b" style="left:0;top:0" width="1920" height="41" viewBox="0 0 1920 41" fill="none" stroke-linecap="round" stroke-linejoin="round">
<g stroke="#e8e8e8" stroke-width="1.7"><path d="M27.5 17H16.5M21.8 11.2L16 17l5.8 5.8"/></g>
<g stroke="#8b8b8b" stroke-width="1.7"><path d="M52.5 17h11M58.2 11.2L64 17l-5.8 5.8"/></g>
<g stroke="#e8e8e8" stroke-width="1.7"><path d="M99.3 15.2A5.7 5.7 0 1 0 99.6 18.6"/><path d="M99.6 11.4v4.1h-4.1" stroke-linejoin="miter" stroke-linecap="butt"/></g>
<g stroke="#e3e3e3" stroke-width="1.4"><circle cx="133.3" cy="13.7" r="1.7"/><path d="M137.2 13.7h5.6"/><circle cx="140.8" cy="20.4" r="1.7"/><path d="M131.4 20.4h5.6"/></g>
<g stroke="#c4c7c5" stroke-width="1.5"><path d="M1681.5 17.3c2-3.6 5-5.4 8.6-5.4s6.600 1.800 8.600 5.400c-2 3.600-5 5.400-8.600 5.400s-6.600-1.800-8.600-5.400z"/><circle cx="1690.1" cy="17.3" r="2.6"/><path d="M1683 10l14.600 14.600"/></g>
<path d="M1722 9.600l2.300 4.800 5.200.700-3.800 3.600.950 5.200-4.650-2.550-4.650 2.550.950-5.200-3.800-3.600 5.200-.700z" stroke="#c4c7c5" stroke-width="1.5"/>
<rect x="1764.600" y="9.700" width="14.800" height="14.800" rx="3" fill="#000" stroke="#fff" stroke-width="1.400"/>
<circle cx="1768.400" cy="20.300" r="1.900" stroke="#fff" stroke-width="1.100"/><circle cx="1775.600" cy="20.300" r="1.900" stroke="#fff" stroke-width="1.100"/>
<path d="M1802 12h4.300a2 2 0 0 1 4 0h4.200v4.300a2.100 2.100 0 0 1 0 4.200v4h-12.500v-4.200a2 2 0 0 0 0-4.100z" stroke="#fff" stroke-width="1.700"/>
<path d="M1834.800 9.500v15" stroke="#000" stroke-width="2.200" stroke-linecap="butt"/>
<circle cx="1862" cy="17" r="10" fill="#7e57c2"/>
<g fill="#e3e3e3"><circle cx="1898" cy="11.300" r="1.700"/><circle cx="1898" cy="17.300" r="1.700"/><circle cx="1898" cy="23.300" r="1.700"/></g>
</svg>
<span class="t" style="left:1858.30px;top:12.11px;font-size:10.5px;line-height:10.5px;color:#ffffff;">B</span>
<span class="t" style="left:157.30px;top:10.15px;font-size:14px;line-height:14px;color:#ffffff;">l06.epgu-front.test.gosuslugi.ru</span>
<span class="t" style="left:350.20px;top:10.15px;font-size:14px;line-height:14px;color:#9aa0a6;letter-spacing:0.271px;">/landings/ptjs/conflicts/full-map</span>
<div class="b" style="left:1274px;top:41px;width:646px;height:941px;background:#20262a;"></div>
<div class="b" style="left:1274px;top:41px;width:646px;height:27px;background:#263c43;"></div>
<div class="b" style="left:1274px;top:67px;width:646px;height:1px;background:#35525b;"></div>
<div class="b" style="left:1274px;top:94px;width:646px;height:1px;background:#2f464e;"></div>
<div class="b" style="left:1274px;top:41px;width:1px;height:941px;background:#2c434a;"></div>
<div class="b" style="left:1407.5px;top:65px;width:63px;height:3px;background:#6fd2e6;border-radius:2px 2px 0 0;"></div>
<div class="b" style="left:1337px;top:46px;width:1px;height:16px;background:#3c545c;"></div>
<div class="b" style="left:1827px;top:46px;width:1px;height:16px;background:#3c545c;"></div>
<div class="b" style="left:1337px;top:73px;width:1px;height:16px;background:#3c545c;"></div>
<div class="b" style="left:1392px;top:73px;width:1px;height:16px;background:#3c545c;"></div>
<div class="b" style="left:1429px;top:73px;width:1px;height:16px;background:#3c545c;"></div>
<div class="b" style="left:1801px;top:73px;width:1px;height:16px;background:#3c545c;"></div>
<div class="b" style="left:1883px;top:73px;width:1px;height:16px;background:#3c545c;"></div>
<div class="b" style="left:1437px;top:72px;width:258px;height:19px;background:#263c43;border-radius:9.5px;"></div>
<span class="t" style="left:1350.40px;top:49.67px;font-size:12.2px;line-height:12.2px;color:#d5d9db;letter-spacing:0.222px;">Network</span>
<span class="t" style="left:1416.80px;top:49.67px;font-size:12.2px;line-height:12.2px;color:#78d3ea;letter-spacing:-0.223px;">Console</span>
<span class="t" style="left:1481.30px;top:49.67px;font-size:12.2px;line-height:12.2px;color:#d5d9db;letter-spacing:-0.269px;">Elements</span>
<span class="t" style="left:1551.00px;top:49.67px;font-size:12.2px;line-height:12.2px;color:#d5d9db;letter-spacing:-0.422px;">Sources</span>
<span class="t" style="left:1614.30px;top:49.67px;font-size:12.2px;line-height:12.2px;color:#d5d9db;letter-spacing:-0.086px;">Performance</span>
<span class="t" style="left:1787.40px;top:49.67px;font-size:12.2px;line-height:12.2px;color:#d5d9db;">1</span>
<span class="t" style="left:1811.20px;top:49.67px;font-size:12.2px;line-height:12.2px;color:#d5d9db;">2</span>
<span class="t" style="left:1350.20px;top:76.27px;font-size:12.2px;line-height:12.2px;color:#d5d9db;letter-spacing:0.213px;">top</span>
<span class="t" style="left:1465.50px;top:76.27px;font-size:12.2px;line-height:12.2px;color:#c3c9cc;letter-spacing:-0.152px;">Filter</span>
<span class="t" style="left:1706.30px;top:76.27px;font-size:12.2px;line-height:12.2px;color:#d5d9db;letter-spacing:-0.238px;">Default levels</span>
<span class="t" style="left:1807.00px;top:76.27px;font-size:12.2px;line-height:12.2px;color:#d5d9db;letter-spacing:-0.592px;">2 Issues:</span>
<span class="t" style="left:1869.80px;top:76.27px;font-size:12.2px;line-height:12.2px;color:#d5d9db;">2</span>
<svg class="b" style="left:1274px;top:41px" width="646" height="54" viewBox="1274 41 646 54" fill="none" stroke-linecap="butt" stroke-linejoin="miter">
<g stroke="#d5d9db" stroke-width="1.500">
<path d="M1296.800 53v-5.200h-12.300v12.300h5.200" stroke-dasharray="1.500 1.300"/>
<path d="M1291.300 54.300l6.200 6.200M1291 59.500v-5.500h5.500"/>
<path d="M1313.300 58.500v-9.700h11"/><path d="M1311 60h8.200" stroke-width="1.800"/><rect x="1321.500" y="52" width="5" height="8" />
<path d="M1698.500 50.500l4.300 4.300-4.300 4.300M1704 50.500l4.300 4.300-4.300 4.300" stroke-width="1.300"/>
<path d="M1896.300 49.400l9.200 9.200M1905.500 49.400l-9.200 9.200" stroke-width="1.500"/>
<rect x="1284.500" y="74.500" width="12.800" height="12.800" rx="1.200"/><path d="M1288.300 74.500v12.800"/><path d="M1291.300 78l3.600 3-3.600 3z" fill="#d5d9db" stroke="none"/>
<circle cx="1319" cy="81" r="6.800"/><path d="M1314.300 85.800l9.500-9.500"/>
<path d="M1402.500 81c2-3.600 5-5.300 8.400-5.300s6.400 1.700 8.400 5.300c-2 3.600-5 5.300-8.400 5.300s-6.400-1.700-8.400-5.300z"/><circle cx="1410.900" cy="81" r="2.700"/>
<path d="M1448.800 77h8.400l-3.200 4v4.300h-2v-4.300z" stroke-width="1.300" stroke-linejoin="round"/>
</g>
<g fill="#d5d9db"><circle cx="1873.600" cy="48.500" r="1.400"/><circle cx="1873.600" cy="54" r="1.400"/><circle cx="1873.600" cy="59.500" r="1.400"/>
<path d="M1373.400 79.300h7.400l-3.700 4.800z"/><path d="M1782.400 79.300h7.400l-3.700 4.800z"/></g>
<path d="M1779 49.200l6.200 10.600h-12.400z" fill="#f08b52"/><path d="M1779 52.600v3.600M1779 57.200v1.200" stroke="#3a2a20" stroke-width="1.300"/>
<path d="M1799.7 50h10.200v7.400h-7.400l-2.800 2.600z" fill="#4fb6dc"/><path d="M1801.7 52.5h6.200M1801.7 54.8h4.400" stroke="#1d3a48" stroke-width="1"/><path d="M1857.9 75.6h10.200v7.400h-7.400l-2.800 2.600z" fill="#4fb6dc"/><path d="M1859.9 78.1h6.200M1859.9 80.39999999999999h4.400" stroke="#1d3a48" stroke-width="1"/>
<g transform="translate(1846 54.2) scale(.91)" stroke="#d5d9db" stroke-width="1.550" fill="none"><path d="M-2.02 -5.01L-1.56 -7.34L1.56 -7.34L2.02 -5.01L3.32 -4.26L5.57 -5.02L7.13 -2.32L5.35 -0.75L5.35 0.75L7.13 2.32L5.57 5.02L3.32 4.26L2.02 5.01L1.56 7.34L-1.56 7.34L-2.02 5.01L-3.32 4.26L-5.57 5.02L-7.13 2.32L-5.35 0.75L-5.35 -0.75L-7.13 -2.32L-5.57 -5.02L-3.32 -4.26z" stroke-linejoin="round"/><circle r="2.100" fill="#d5d9db" stroke="none"/></g><g transform="translate(1901 81) scale(.91)" stroke="#d5d9db" stroke-width="1.550" fill="none"><path d="M-2.02 -5.01L-1.56 -7.34L1.56 -7.34L2.02 -5.01L3.32 -4.26L5.57 -5.02L7.13 -2.32L5.35 -0.75L5.35 0.75L7.13 2.32L5.57 5.02L3.32 4.26L2.02 5.01L1.56 7.34L-1.56 7.34L-2.02 5.01L-3.32 4.26L-5.57 5.02L-7.13 2.32L-5.35 0.75L-5.35 -0.75L-7.13 -2.32L-5.57 -5.02L-3.32 -4.26z" stroke-linejoin="round"/><circle r="2.100" fill="#d5d9db" stroke="none"/></g>
</svg>
<div class="b" style="left:1279px;top:99px;width:637px;height:87px;background:#413c27;border-radius:5px;"></div>
<svg class="b" style="left:1284px;top:100px" width="16" height="16" viewBox="0 0 16 16"><path d="M8 2.300l6.300 10.900h-12.600z" fill="#f08b52"/><path d="M8 6v3.800M8 10.800v1.300" stroke="#413c27" stroke-width="1.400"/></svg>
<span class="t" style="left:1303.10px;top:100.69px;font-size:11px;line-height:11px;color:#fbe7a6;font-family:'DejaVu Sans Mono','Liberation Mono',monospace;letter-spacing:-0.023px;">Mixed Content: The page at '</span>
<span class="t" style="left:1642.80px;top:100.69px;font-size:11px;line-height:11px;color:#7fd0e8;font-family:'DejaVu Sans Mono','Liberation Mono',monospace;letter-spacing:-0.023px;text-decoration:underline;">link-popular-widget?_=1764941525867:1</span>
<span class="t" style="left:1303.10px;top:115.14px;font-size:11px;line-height:11px;color:#7fd0e8;font-family:'DejaVu Sans Mono','Liberation Mono',monospace;letter-spacing:-0.023px;text-decoration:underline;">https://l06.epgu-front.test.gosuslugi.ru/olk/kswidgettest/link-popular-widget?_=17649415…</span>
<span class="t" style="left:1303.10px;top:129.59px;font-size:11px;line-height:11px;color:#fbe7a6;font-family:'DejaVu Sans Mono','Liberation Mono',monospace;letter-spacing:-0.023px;">' was loaded over HTTPS, but requested an insecure element '</span>
<span class="t" style="left:1303.10px;top:144.04px;font-size:11px;line-height:11px;color:#7fd0e8;font-family:'DejaVu Sans Mono','Liberation Mono',monospace;letter-spacing:-0.023px;text-decoration:underline;">http://esia-demo.test.gosuslugi.ru//useravatar/0/0/0/0/0/113/33/e8171705-506b-49ff-9072-…</span>
<span class="t" style="left:1303.10px;top:158.49px;font-size:11px;line-height:11px;color:#fbe7a6;font-family:'DejaVu Sans Mono','Liberation Mono',monospace;letter-spacing:-0.023px;">'. This request was automatically upgraded to HTTPS, For more information see</span>
<span class="t" style="left:1303.10px;top:172.94px;font-size:11px;line-height:11px;color:#7fd0e8;font-family:'DejaVu Sans Mono','Liberation Mono',monospace;letter-spacing:-0.023px;text-decoration:underline;">https://blog.chromium.org/2019/10/no-more-mixed-messages-about-https.html</span>
<span class="t" style="left:1303.10px;top:195.29px;font-size:11px;line-height:11px;color:#9a80f5;font-family:'DejaVu Sans Mono','Liberation Mono',monospace;letter-spacing:-0.023px;">3</span>
<span class="t" style="left:1316.50px;top:195.29px;font-size:11px;line-height:11px;color:#5cc4ee;font-family:'DejaVu Sans Mono','Liberation Mono',monospace;letter-spacing:-0.023px;">' this.contentsLength'</span>
<span class="t" style="left:1715.40px;top:195.29px;font-size:11px;line-height:11px;color:#7fd0e8;font-family:'DejaVu Sans Mono','Liberation Mono',monospace;letter-spacing:-0.023px;text-decoration:underline;">main.5108b12fdf7f0a6e.js:1</span>
<div class="b" style="left:1303px;top:210px;width:588px;height:1px;background:#35484f;"></div>
<span class="t" style="left:1303.10px;top:217.29px;font-size:11px;line-height:11px;color:#9a80f5;font-family:'DejaVu Sans Mono','Liberation Mono',monospace;letter-spacing:-0.023px;">1</span>
<span class="t" style="left:1316.50px;top:217.29px;font-size:11px;line-height:11px;color:#5cc4ee;font-family:'DejaVu Sans Mono','Liberation Mono',monospace;letter-spacing:-0.023px;">' this.contentsLength'</span>
<span class="t" style="left:1715.40px;top:217.29px;font-size:11px;line-height:11px;color:#7fd0e8;font-family:'DejaVu Sans Mono','Liberation Mono',monospace;letter-spacing:-0.023px;text-decoration:underline;">main.5108b12fdf7f0a6e.js:1</span>
<div class="b" style="left:1303px;top:232px;width:588px;height:1px;background:#35484f;"></div>
<span class="t" style="left:1303.10px;top:239.29px;font-size:11px;line-height:11px;color:#9a80f5;font-family:'DejaVu Sans Mono','Liberation Mono',monospace;letter-spacing:-0.023px;">3</span>
<span class="t" style="left:1316.50px;top:239.29px;font-size:11px;line-height:11px;color:#5cc4ee;font-family:'DejaVu Sans Mono','Liberation Mono',monospace;letter-spacing:-0.023px;">' this.contentsLength'</span>
<span class="t" style="left:1715.40px;top:239.29px;font-size:11px;line-height:11px;color:#7fd0e8;font-family:'DejaVu Sans Mono','Liberation Mono',monospace;letter-spacing:-0.023px;text-decoration:underline;">main.5108b12fdf7f0a6e.js:1</span>
<div class="b" style="left:1303px;top:254px;width:588px;height:1px;background:#35484f;"></div>
<span class="t" style="left:1303.10px;top:261.29px;font-size:11px;line-height:11px;color:#9a80f5;font-family:'DejaVu Sans Mono','Liberation Mono',monospace;letter-spacing:-0.023px;">5</span>
<span class="t" style="left:1316.50px;top:261.29px;font-size:11px;line-height:11px;color:#5cc4ee;font-family:'DejaVu Sans Mono','Liberation Mono',monospace;letter-spacing:-0.023px;">' this.contentsLength'</span>
<span class="t" style="left:1715.40px;top:261.29px;font-size:11px;line-height:11px;color:#7fd0e8;font-family:'DejaVu Sans Mono','Liberation Mono',monospace;letter-spacing:-0.023px;text-decoration:underline;">main.5108b12fdf7f0a6e.js:1</span>
<div class="b" style="left:1303px;top:276px;width:588px;height:1px;background:#35484f;"></div>
<span class="t" style="left:1303.10px;top:283.29px;font-size:11px;line-height:11px;color:#9a80f5;font-family:'DejaVu Sans Mono','Liberation Mono',monospace;letter-spacing:-0.023px;">6</span>
<span class="t" style="left:1316.50px;top:283.29px;font-size:11px;line-height:11px;color:#5cc4ee;font-family:'DejaVu Sans Mono','Liberation Mono',monospace;letter-spacing:-0.023px;">' this.contentsLength'</span>
<span class="t" style="left:1715.40px;top:283.29px;font-size:11px;line-height:11px;color:#7fd0e8;font-family:'DejaVu Sans Mono','Liberation Mono',monospace;letter-spacing:-0.023px;text-decoration:underline;">main.5108b12fdf7f0a6e.js:1</span>
<div class="b" style="left:1303px;top:298px;width:588px;height:1px;background:#35484f;"></div>
<span class="t" style="left:1303.10px;top:305.29px;font-size:11px;line-height:11px;color:#9a80f5;font-family:'DejaVu Sans Mono','Liberation Mono',monospace;letter-spacing:-0.023px;">7</span>
<span class="t" style="left:1316.50px;top:305.29px;font-size:11px;line-height:11px;color:#5cc4ee;font-family:'DejaVu Sans Mono','Liberation Mono',monospace;letter-spacing:-0.023px;">' this.contentsLength'</span>
<span class="t" style="left:1715.40px;top:305.29px;font-size:11px;line-height:11px;color:#7fd0e8;font-family:'DejaVu Sans Mono','Liberation Mono',monospace;letter-spacing:-0.023px;text-decoration:underline;">main.5108b12fdf7f0a6e.js:1</span>
<div class="b" style="left:1303px;top:320px;width:588px;height:1px;background:#35484f;"></div>
<span class="t" style="left:1307.10px;top:327.29px;font-size:11px;line-height:11px;color:#9a80f5;font-family:'DejaVu Sans Mono','Liberation Mono',monospace;letter-spacing:-0.023px;">3</span>
<span class="t" style="left:1320.50px;top:327.29px;font-size:11px;line-height:11px;color:#5cc4ee;font-family:'DejaVu Sans Mono','Liberation Mono',monospace;letter-spacing:-0.023px;">' this.contentsLength'</span>
<span class="t" style="left:1715.40px;top:327.29px;font-size:11px;line-height:11px;color:#7fd0e8;font-family:'DejaVu Sans Mono','Liberation Mono',monospace;letter-spacing:-0.023px;text-decoration:underline;">main.5108b12fdf7f0a6e.js:1</span>
<div class="b" style="left:1303px;top:342px;width:588px;height:1px;background:#35484f;"></div>
<div class="b" style="left:1289px;top:325.8px;width:14px;height:14px;background:#8a8f92;border-radius:7px;"></div>
<span class="t" style="left:1293.60px;top:328.36px;font-size:9.5px;line-height:9.5px;color:#1a1f22;">2</span>
<span class="t" style="left:1303.10px;top:349.29px;font-size:11px;line-height:11px;color:#9a80f5;font-family:'DejaVu Sans Mono','Liberation Mono',monospace;letter-spacing:-0.023px;">1</span>
<span class="t" style="left:1316.50px;top:349.29px;font-size:11px;line-height:11px;color:#5cc4ee;font-family:'DejaVu Sans Mono','Liberation Mono',monospace;letter-spacing:-0.023px;">' this.contentsLength'</span>
<span class="t" style="left:1715.40px;top:349.29px;font-size:11px;line-height:11px;color:#7fd0e8;font-family:'DejaVu Sans Mono','Liberation Mono',monospace;letter-spacing:-0.023px;text-decoration:underline;">main.5108b12fdf7f0a6e.js:1</span>
<div class="b" style="left:1303px;top:364px;width:588px;height:1px;background:#35484f;"></div>
<span class="t" style="left:1303.10px;top:371.29px;font-size:11px;line-height:11px;color:#9a80f5;font-family:'DejaVu Sans Mono','Liberation Mono',monospace;letter-spacing:-0.023px;">3</span>
<span class="t" style="left:1316.50px;top:371.29px;font-size:11px;line-height:11px;color:#5cc4ee;font-family:'DejaVu Sans Mono','Liberation Mono',monospace;letter-spacing:-0.023px;">' this.contentsLength'</span>
<span class="t" style="left:1715.40px;top:371.29px;font-size:11px;line-height:11px;color:#7fd0e8;font-family:'DejaVu Sans Mono','Liberation Mono',monospace;letter-spacing:-0.023px;text-decoration:underline;">main.5108b12fdf7f0a6e.js:1</span>
<div class="b" style="left:1303px;top:386px;width:588px;height:1px;background:#35484f;"></div>
<span class="t" style="left:1303.10px;top:393.29px;font-size:11px;line-height:11px;color:#9a80f5;font-family:'DejaVu Sans Mono','Liberation Mono',monospace;letter-spacing:-0.023px;">5</span>
<span class="t" style="left:1316.50px;top:393.29px;font-size:11px;line-height:11px;color:#5cc4ee;font-family:'DejaVu Sans Mono','Liberation Mono',monospace;letter-spacing:-0.023px;">' this.contentsLength'</span>
<span class="t" style="left:1715.40px;top:393.29px;font-size:11px;line-height:11px;color:#7fd0e8;font-family:'DejaVu Sans Mono','Liberation Mono',monospace;letter-spacing:-0.023px;text-decoration:underline;">main.5108b12fdf7f0a6e.js:1</span>
<div class="b" style="left:1303px;top:408px;width:588px;height:1px;background:#35484f;"></div>
<span class="t" style="left:1303.10px;top:415.29px;font-size:11px;line-height:11px;color:#9a80f5;font-family:'DejaVu Sans Mono','Liberation Mono',monospace;letter-spacing:-0.023px;">6</span>
<span class="t" style="left:1316.50px;top:415.29px;font-size:11px;line-height:11px;color:#5cc4ee;font-family:'DejaVu Sans Mono','Liberation Mono',monospace;letter-spacing:-0.023px;">' this.contentsLength'</span>
<span class="t" style="left:1715.40px;top:415.29px;font-size:11px;line-height:11px;color:#7fd0e8;font-family:'DejaVu Sans Mono','Liberation Mono',monospace;letter-spacing:-0.023px;text-decoration:underline;">main.5108b12fdf7f0a6e.js:1</span>
<div class="b" style="left:1303px;top:430px;width:588px;height:1px;background:#35484f;"></div>
<span class="t" style="left:1303.10px;top:437.29px;font-size:11px;line-height:11px;color:#9a80f5;font-family:'DejaVu Sans Mono','Liberation Mono',monospace;letter-spacing:-0.023px;">7</span>
<span class="t" style="left:1316.50px;top:437.29px;font-size:11px;line-height:11px;color:#5cc4ee;font-family:'DejaVu Sans Mono','Liberation Mono',monospace;letter-spacing:-0.023px;">' this.contentsLength'</span>
<span class="t" style="left:1715.40px;top:437.29px;font-size:11px;line-height:11px;color:#7fd0e8;font-family:'DejaVu Sans Mono','Liberation Mono',monospace;letter-spacing:-0.023px;text-decoration:underline;">main.5108b12fdf7f0a6e.js:1</span>
<div class="b" style="left:1303px;top:452px;width:588px;height:1px;background:#35484f;"></div>
<span class="t" style="left:1303.10px;top:459.29px;font-size:11px;line-height:11px;color:#9a80f5;font-family:'DejaVu Sans Mono','Liberation Mono',monospace;letter-spacing:-0.023px;">3</span>
<span class="t" style="left:1316.50px;top:459.29px;font-size:11px;line-height:11px;color:#5cc4ee;font-family:'DejaVu Sans Mono','Liberation Mono',monospace;letter-spacing:-0.023px;">' this.contentsLength'</span>
<span class="t" style="left:1715.40px;top:459.29px;font-size:11px;line-height:11px;color:#7fd0e8;font-family:'DejaVu Sans Mono','Liberation Mono',monospace;letter-spacing:-0.023px;text-decoration:underline;">main.5108b12fdf7f0a6e.js:1</span>
<div class="b" style="left:1303px;top:474px;width:588px;height:1px;background:#35484f;"></div>
<span class="t" style="left:1303.10px;top:481.29px;font-size:11px;line-height:11px;color:#9a80f5;font-family:'DejaVu Sans Mono','Liberation Mono',monospace;letter-spacing:-0.023px;">3</span>
<span class="t" style="left:1316.50px;top:481.29px;font-size:11px;line-height:11px;color:#5cc4ee;font-family:'DejaVu Sans Mono','Liberation Mono',monospace;letter-spacing:-0.023px;">' this.contentsLength'</span>
<span class="t" style="left:1715.40px;top:481.29px;font-size:11px;line-height:11px;color:#7fd0e8;font-family:'DejaVu Sans Mono','Liberation Mono',monospace;letter-spacing:-0.023px;text-decoration:underline;">main.5108b12fdf7f0a6e.js:1</span>
<div class="b" style="left:1303px;top:496px;width:588px;height:1px;background:#35484f;"></div>
<span class="t" style="left:1303.10px;top:503.29px;font-size:11px;line-height:11px;color:#9a80f5;font-family:'DejaVu Sans Mono','Liberation Mono',monospace;letter-spacing:-0.023px;">1</span>
<span class="t" style="left:1316.50px;top:503.29px;font-size:11px;line-height:11px;color:#5cc4ee;font-family:'DejaVu Sans Mono','Liberation Mono',monospace;letter-spacing:-0.023px;">' this.contentsLength'</span>
<span class="t" style="left:1715.40px;top:503.29px;font-size:11px;line-height:11px;color:#7fd0e8;font-family:'DejaVu Sans Mono','Liberation Mono',monospace;letter-spacing:-0.023px;text-decoration:underline;">main.5108b12fdf7f0a6e.js:1</span>
<div class="b" style="left:1303px;top:518px;width:588px;height:1px;background:#35484f;"></div>
<span class="t" style="left:1303.10px;top:525.29px;font-size:11px;line-height:11px;color:#9a80f5;font-family:'DejaVu Sans Mono','Liberation Mono',monospace;letter-spacing:-0.023px;">3</span>
<span class="t" style="left:1316.50px;top:525.29px;font-size:11px;line-height:11px;color:#5cc4ee;font-family:'DejaVu Sans Mono','Liberation Mono',monospace;letter-spacing:-0.023px;">' this.contentsLength'</span>
<span class="t" style="left:1715.40px;top:525.29px;font-size:11px;line-height:11px;color:#7fd0e8;font-family:'DejaVu Sans Mono','Liberation Mono',monospace;letter-spacing:-0.023px;text-decoration:underline;">main.5108b12fdf7f0a6e.js:1</span>
<div class="b" style="left:1303px;top:540px;width:588px;height:1px;background:#35484f;"></div>
<span class="t" style="left:1303.10px;top:547.29px;font-size:11px;line-height:11px;color:#9a80f5;font-family:'DejaVu Sans Mono','Liberation Mono',monospace;letter-spacing:-0.023px;">5</span>
<span class="t" style="left:1316.50px;top:547.29px;font-size:11px;line-height:11px;color:#5cc4ee;font-family:'DejaVu Sans Mono','Liberation Mono',monospace;letter-spacing:-0.023px;">' this.contentsLength'</span>
<span class="t" style="left:1715.40px;top:547.29px;font-size:11px;line-height:11px;color:#7fd0e8;font-family:'DejaVu Sans Mono','Liberation Mono',monospace;letter-spacing:-0.023px;text-decoration:underline;">main.5108b12fdf7f0a6e.js:1</span>
<div class="b" style="left:1303px;top:562px;width:588px;height:1px;background:#35484f;"></div>
<span class="t" style="left:1303.10px;top:569.29px;font-size:11px;line-height:11px;color:#9a80f5;font-family:'DejaVu Sans Mono','Liberation Mono',monospace;letter-spacing:-0.023px;">6</span>
<span class="t" style="left:1316.50px;top:569.29px;font-size:11px;line-height:11px;color:#5cc4ee;font-family:'DejaVu Sans Mono','Liberation Mono',monospace;letter-spacing:-0.023px;">' this.contentsLength'</span>
<span class="t" style="left:1715.40px;top:569.29px;font-size:11px;line-height:11px;color:#7fd0e8;font-family:'DejaVu Sans Mono','Liberation Mono',monospace;letter-spacing:-0.023px;text-decoration:underline;">main.5108b12fdf7f0a6e.js:1</span>
<div class="b" style="left:1303px;top:584px;width:588px;height:1px;background:#35484f;"></div>
<span class="t" style="left:1303.10px;top:591.29px;font-size:11px;line-height:11px;color:#9a80f5;font-family:'DejaVu Sans Mono','Liberation Mono',monospace;letter-spacing:-0.023px;">7</span>
<span class="t" style="left:1316.50px;top:591.29px;font-size:11px;line-height:11px;color:#5cc4ee;font-family:'DejaVu Sans Mono','Liberation Mono',monospace;letter-spacing:-0.023px;">' this.contentsLength'</span>
<span class="t" style="left:1715.40px;top:591.29px;font-size:11px;line-height:11px;color:#7fd0e8;font-family:'DejaVu Sans Mono','Liberation Mono',monospace;letter-spacing:-0.023px;text-decoration:underline;">main.5108b12fdf7f0a6e.js:1</span>
<div class="b" style="left:1303px;top:606px;width:588px;height:1px;background:#35484f;"></div>
<span class="t" style="left:1303.10px;top:613.29px;font-size:11px;line-height:11px;color:#9a80f5;font-family:'DejaVu Sans Mono','Liberation Mono',monospace;letter-spacing:-0.023px;">3</span>
<span class="t" style="left:1316.50px;top:613.29px;font-size:11px;line-height:11px;color:#5cc4ee;font-family:'DejaVu Sans Mono','Liberation Mono',monospace;letter-spacing:-0.023px;">' this.contentsLength'</span>
<span class="t" style="left:1715.40px;top:613.29px;font-size:11px;line-height:11px;color:#7fd0e8;font-family:'DejaVu Sans Mono','Liberation Mono',monospace;letter-spacing:-0.023px;text-decoration:underline;">main.5108b12fdf7f0a6e.js:1</span>
<svg class="b" style="left:1288px;top:635px" width="10" height="12" viewBox="0 0 10 12"><path d="M3 2.800l3.300 3.200-3.300 3.200" stroke="#86aabb" stroke-width="1.300" fill="none"/></svg>
</body></html>
